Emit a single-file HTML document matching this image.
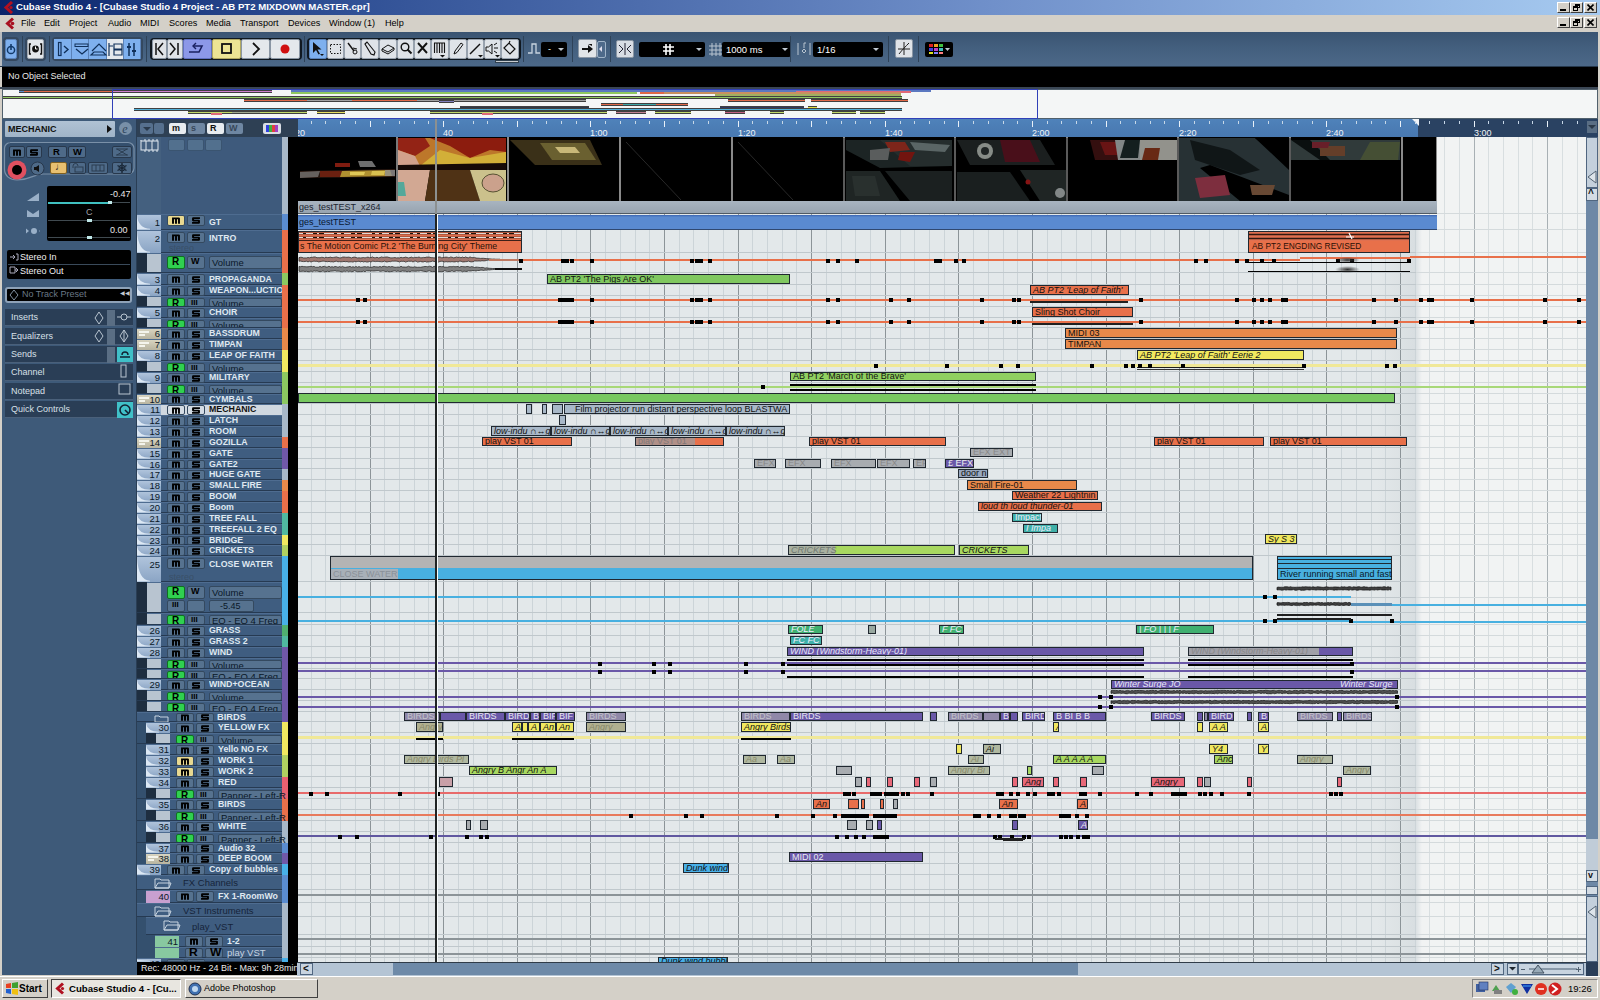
<!DOCTYPE html><html><head><meta charset="utf-8"><style>
html,body{margin:0;padding:0;width:1600px;height:1000px;overflow:hidden;background:#d4d0c8;}
body{position:relative;font-family:"Liberation Sans",sans-serif;}
div{position:absolute;box-sizing:border-box;}
.t{white-space:nowrap;line-height:1;}
svg{position:absolute;}
</style></head><body>
<div style="left:0px;top:0px;width:1600px;height:15px;background:linear-gradient(90deg,#0a246a 0%,#2a4a90 18%,#7090ca 62%,#a6caf0 100%);"></div>
<svg style="left:3px;top:1px" width="12" height="13" viewBox="0 0 12 13"><path d="M9 1 L3 6.5 L9 12" stroke="#b01020" stroke-width="3" fill="none"/><circle cx="8" cy="6.5" r="1.6" fill="#b01020"/></svg>
<div class="t" style="left:16px;top:2px;font-size:9.6px;color:#fff;font-weight:bold;">Cubase Studio 4 - [Cubase Studio 4 Project - AB PT2 MIXDOWN MASTER.cpr]</div>
<div style="left:1557px;top:2px;width:13px;height:11px;background:#d4d0c8;border:1px solid;border-color:#fff #404040 #404040 #fff;"></div>
<div style="left:1560px;top:9px;width:6px;height:2px;background:#000;"></div>
<div style="left:1570px;top:2px;width:13px;height:11px;background:#d4d0c8;border:1px solid;border-color:#fff #404040 #404040 #fff;"></div>
<div style="left:1575px;top:4px;width:5px;height:4px;background:transparent;border:1px solid #000;border-top-width:2px;"></div>
<div style="left:1573px;top:6px;width:5px;height:5px;background:#d4d0c8;border:1px solid #000;border-top-width:2px;"></div>
<div style="left:1584px;top:2px;width:13px;height:11px;background:#d4d0c8;border:1px solid;border-color:#fff #404040 #404040 #fff;"></div>
<svg style="left:1587px;top:4px" width="7" height="7"><path d="M0.5 0.5L6.5 6.5M6.5 0.5L0.5 6.5" stroke="#000" stroke-width="1.6"/></svg>
<div style="left:0px;top:15px;width:1600px;height:17px;background:#d4d0c8;"></div>
<svg style="left:4px;top:17px" width="13" height="13" viewBox="0 0 13 13"><path d="M9 1.5 L3.5 6.5 L9 11.5" stroke="#a81020" stroke-width="3" fill="none"/><circle cx="8.5" cy="6.5" r="1.8" fill="#a81020"/></svg>
<div class="t" style="left:21px;top:19px;font-size:9.1px;color:#000;">File</div>
<div class="t" style="left:44px;top:19px;font-size:9.1px;color:#000;">Edit</div>
<div class="t" style="left:69px;top:19px;font-size:9.1px;color:#000;">Project</div>
<div class="t" style="left:108px;top:19px;font-size:9.1px;color:#000;">Audio</div>
<div class="t" style="left:140px;top:19px;font-size:9.1px;color:#000;">MIDI</div>
<div class="t" style="left:169px;top:19px;font-size:9.1px;color:#000;">Scores</div>
<div class="t" style="left:206px;top:19px;font-size:9.1px;color:#000;">Media</div>
<div class="t" style="left:240px;top:19px;font-size:9.1px;color:#000;">Transport</div>
<div class="t" style="left:288px;top:19px;font-size:9.1px;color:#000;">Devices</div>
<div class="t" style="left:329px;top:19px;font-size:9.1px;color:#000;">Window (1)</div>
<div class="t" style="left:385px;top:19px;font-size:9.1px;color:#000;">Help</div>
<div style="left:1557px;top:17px;width:13px;height:11px;background:#d4d0c8;border:1px solid;border-color:#fff #404040 #404040 #fff;"></div>
<div style="left:1560px;top:24px;width:6px;height:2px;background:#000;"></div>
<div style="left:1570px;top:17px;width:13px;height:11px;background:#d4d0c8;border:1px solid;border-color:#fff #404040 #404040 #fff;"></div>
<div style="left:1575px;top:19px;width:5px;height:4px;background:transparent;border:1px solid #000;border-top-width:2px;"></div>
<div style="left:1573px;top:21px;width:5px;height:5px;background:#d4d0c8;border:1px solid #000;border-top-width:2px;"></div>
<div style="left:1584px;top:17px;width:13px;height:11px;background:#d4d0c8;border:1px solid;border-color:#fff #404040 #404040 #fff;"></div>
<svg style="left:1587px;top:19px" width="7" height="7"><path d="M0.5 0.5L6.5 6.5M6.5 0.5L0.5 6.5" stroke="#000" stroke-width="1.6"/></svg>
<div style="left:0px;top:32px;width:1600px;height:34px;background:linear-gradient(180deg,#3a5472 0%,#44607f 50%,#4c6888 100%);"></div>
<div style="left:0px;top:32px;width:2px;height:34px;background:#b8bcc0;"></div>
<div style="left:1598px;top:15px;width:2px;height:985px;background:#d4d0c8;"></div>
<div style="left:0px;top:66px;width:1598px;height:1px;background:#26384c;"></div>
<div style="left:3px;top:37px;width:16px;height:24px;background:#34485f;border-radius:4px;"></div>
<div style="left:5px;top:39px;width:12px;height:20px;background:#7eb0ee;border:1px solid #5a82b8;border-radius:2px;"></div>
<svg style="left:6px;top:42px" width="10" height="14"><circle cx="5" cy="8" r="3.6" stroke="#123a6a" stroke-width="1.5" fill="none"/><path d="M5 2v6" stroke="#123a6a" stroke-width="1.6"/></svg>
<div style="left:25px;top:37px;width:21px;height:24px;background:#34485f;border-radius:4px;"></div>
<div style="left:27px;top:39px;width:17px;height:20px;background:#e4e8ec;border:1px solid #a0a8b0;border-radius:2px;"></div>
<svg style="left:28px;top:42px" width="15" height="14"><path d="M3 2H1.5V12H3M12 2H13.5V12H12" stroke="#111" stroke-width="1.4" fill="none"/><circle cx="7.5" cy="7" r="3.4" fill="#111"/><path d="M7.5 4.5V7H9.5" stroke="#fff" stroke-width="1" fill="none"/></svg>
<div style="left:52px;top:37px;width:91px;height:24px;background:#34485f;border-radius:4px;"></div>
<div style="left:54px;top:39px;width:18px;height:20px;background:#7eb0ee;border-right:1px solid #5a82b8;"></div>
<div style="left:72px;top:39px;width:17px;height:20px;background:#7eb0ee;border-right:1px solid #5a82b8;"></div>
<div style="left:89px;top:39px;width:18px;height:20px;background:#7eb0ee;border-right:1px solid #5a82b8;"></div>
<div style="left:107px;top:39px;width:17px;height:20px;background:#e4e8ec;border-right:1px solid #5a82b8;"></div>
<div style="left:124px;top:39px;width:17px;height:20px;background:#7eb0ee;border-right:1px solid #5a82b8;"></div>
<svg style="left:56px;top:41px" width="85" height="17"><rect x="2.5" y="1.5" width="2.5" height="13" stroke="#10305a" fill="none" stroke-width="1.2"/><path d="M8 5l4 3.5-4 3.5" stroke="#10305a" fill="none" stroke-width="1.4"/><rect x="19" y="3" width="13" height="2.5" stroke="#10305a" fill="none"/><path d="M20 8l6 5 6-5" stroke="#10305a" fill="none" stroke-width="1.3"/><path d="M36 10l7-7 7 7M35 14h15l-3-3h-9z" stroke="#10305a" fill="none" stroke-width="1.2"/><path d="M53 2v13M53 5h4M58 3h8v5h-8zM58 9h8v5h-8z" stroke="#10305a" fill="none" stroke-width="1.2"/><path d="M73 2v13M78 2v13" stroke="#10305a" stroke-width="1.5"/><path d="M71 6h4M76 10h4" stroke="#10305a" stroke-width="2"/></svg>
<div style="left:150px;top:38px;width:152px;height:22px;background:#101820;border-radius:4px;"></div>
<div style="left:152px;top:39px;width:15px;height:20px;background:#dfe3e8;border:1px solid #8a96a4;border-radius:2px;"></div>
<div style="left:167px;top:39px;width:16px;height:20px;background:#dfe3e8;border:1px solid #8a96a4;border-radius:2px;"></div>
<div style="left:183px;top:39px;width:29px;height:20px;background:#8c98e8;border:1px solid #6070c0;border-radius:2px;"></div>
<div style="left:212px;top:39px;width:29px;height:20px;background:#ece494;border:1px solid #b0a860;border-radius:2px;"></div>
<div style="left:241px;top:39px;width:29px;height:20px;background:#e4e8ec;border:1px solid #8a96a4;border-radius:2px;"></div>
<div style="left:270px;top:39px;width:30px;height:20px;background:#e4e8ec;border:1px solid #8a96a4;border-radius:2px;"></div>
<svg style="left:152px;top:39px" width="150" height="20"><path d="M4 4v12M11 4l-5 6 5 6M18 4l5 6-5 6M26 4v12" stroke="#111" stroke-width="1.5" fill="none"/><path d="M37 13h10l3-6h-9" stroke="#1a2060" stroke-width="1.6" fill="none"/><path d="M44 4l-3 3 3 3" stroke="#1a2060" stroke-width="1.4" fill="none"/><rect x="70" y="5" width="9" height="9" stroke="#111" stroke-width="1.8" fill="none"/><path d="M101 4l6 6-6 6" stroke="#111" stroke-width="1.8" fill="none"/><circle cx="133" cy="10" r="4.5" fill="#d01010"/></svg>
<div style="left:307px;top:38px;width:214px;height:22px;background:#101820;border-radius:4px;"></div>
<div style="left:309px;top:39px;width:18px;height:20px;background:#7eb0ee;border:1px solid #5a82b8;border-radius:2px;"></div>
<svg style="left:309px;top:39px" width="18" height="20"><path d="M4 3v11l3-3 2.5 4.5 1.5-.8-2.5-4.3h4z" fill="#111"/><path d="M11 15h4l-2 2z" fill="#111"/></svg>
<div style="left:327px;top:39px;width:17px;height:20px;background:#dfe3e8;border:1px solid #98a2ae;border-radius:2px;"></div>
<svg style="left:327px;top:39px" width="18" height="20"><rect x="3.5" y="5.5" width="10" height="9" stroke="#111" stroke-dasharray="1.5 1.5" fill="none"/></svg>
<div style="left:344px;top:39px;width:17px;height:20px;background:#dfe3e8;border:1px solid #98a2ae;border-radius:2px;"></div>
<svg style="left:344px;top:39px" width="18" height="20"><path d="M4 4l6 8" stroke="#111" stroke-width="1.4"/><circle cx="11" cy="13" r="2" stroke="#111" fill="none"/><path d="M9 9l4 1" stroke="#111"/></svg>
<div style="left:361px;top:39px;width:18px;height:20px;background:#dfe3e8;border:1px solid #98a2ae;border-radius:2px;"></div>
<svg style="left:361px;top:39px" width="18" height="20"><path d="M4 5l2-2 8 10-1 3-3-1z" stroke="#111" stroke-width="1.1" fill="none"/></svg>
<div style="left:379px;top:39px;width:18px;height:20px;background:#dfe3e8;border:1px solid #98a2ae;border-radius:2px;"></div>
<svg style="left:379px;top:39px" width="18" height="20"><path d="M3 10l6-4 6 3-6 4z M3 10v2l6 3 6-4v-2" stroke="#111" stroke-width="1" fill="none"/></svg>
<div style="left:397px;top:39px;width:17px;height:20px;background:#dfe3e8;border:1px solid #98a2ae;border-radius:2px;"></div>
<svg style="left:397px;top:39px" width="18" height="20"><circle cx="8" cy="8" r="3.8" stroke="#111" stroke-width="1.4" fill="none"/><path d="M10.5 10.5l4 4" stroke="#111" stroke-width="2"/></svg>
<div style="left:414px;top:39px;width:17px;height:20px;background:#dfe3e8;border:1px solid #98a2ae;border-radius:2px;"></div>
<svg style="left:414px;top:39px" width="18" height="20"><path d="M4 4l9 10M13 4l-9 10" stroke="#111" stroke-width="1.9"/></svg>
<div style="left:431px;top:39px;width:18px;height:20px;background:#dfe3e8;border:1px solid #98a2ae;border-radius:2px;"></div>
<svg style="left:431px;top:39px" width="18" height="20"><path d="M3.5 4v10M6 4v10M8.5 4v10M11 4v10M13.5 4v10" stroke="#111" stroke-width="1.1"/><path d="M3 4h11" stroke="#111"/><path d="M9 16h5l-2.5 2.5z" fill="#111"/></svg>
<div style="left:449px;top:39px;width:18px;height:20px;background:#dfe3e8;border:1px solid #98a2ae;border-radius:2px;"></div>
<svg style="left:449px;top:39px" width="18" height="20"><path d="M5 15l1-3 6-8 2 1.5-6 8z" stroke="#111" fill="none"/></svg>
<div style="left:467px;top:39px;width:17px;height:20px;background:#dfe3e8;border:1px solid #98a2ae;border-radius:2px;"></div>
<svg style="left:467px;top:39px" width="18" height="20"><path d="M3 15l10-10" stroke="#111" stroke-width="1.5"/><path d="M11 16h5l-2.5 2.5z" fill="#111"/></svg>
<div style="left:484px;top:39px;width:17px;height:20px;background:#dfe3e8;border:1px solid #98a2ae;border-radius:2px;"></div>
<svg style="left:484px;top:39px" width="18" height="20"><path d="M2 8h2.5l3.5-3v10l-3.5-3H2z M10 6l3-2M10 9h4M10 12l3 2" stroke="#111" fill="none"/><path d="M11 16h5l-2.5 2.5z" fill="#111"/></svg>
<div style="left:501px;top:39px;width:18px;height:20px;background:#dfe3e8;border:1px solid #98a2ae;border-radius:2px;"></div>
<svg style="left:501px;top:39px" width="18" height="20"><path d="M3 9l5-5 6 6-5 5z M8 4l1-2" stroke="#111" fill="none" stroke-width="1.2"/></svg>
<div style="left:495px;top:60px;width:24px;height:3px;background:#c8ccd0;border:1px solid #30404e;"></div>
<svg style="left:527px;top:41px" width="14" height="16"><path d="M1 12h4V3h4v9h4" stroke="#c8d4e0" stroke-width="1.3" fill="none"/></svg>
<div style="left:541px;top:42px;width:26px;height:15px;background:#000;border-radius:2px;"></div>
<div class="t" style="left:548px;top:45px;font-size:9px;color:#fff;">-</div>
<svg style="left:558px;top:48px" width="6" height="4"><path d="M0 0h6l-3 3z" fill="#c0c8d0"/></svg>
<div style="left:578px;top:39px;width:19px;height:19px;background:#e0e4e8;border:1px solid #8a96a4;border-radius:2px;"></div>
<div style="left:597px;top:41px;width:9px;height:17px;background:#4e6a8a;border:1px solid #a0b4c8;border-radius:2px;"></div>
<svg style="left:580px;top:42px" width="26" height="14"><path d="M2 6h6v-3l5 4-5 4v-3h-6z M8 2h4v2" fill="#111"/><path d="M22 4l-3 3 3 3" fill="#dde" /></svg>
<div style="left:616px;top:40px;width:18px;height:18px;background:#d8dde4;border:1px solid #8a96a4;border-radius:2px;"></div>
<svg style="left:618px;top:43px" width="14" height="12"><path d="M1 2l4 4-4 4M13 2l-4 4 4 4M7 0v12" stroke="#223" stroke-width="1" fill="none"/></svg>
<div style="left:639px;top:42px;width:66px;height:15px;background:#000;border-radius:2px;"></div>
<svg style="left:662px;top:43px" width="14" height="13"><path d="M4 1v11M8 1v11M1 4h11M1 8h11" stroke="#fff" stroke-width="1.6"/></svg>
<svg style="left:696px;top:48px" width="6" height="4"><path d="M0 0h6l-3 3z" fill="#c0c8d0"/></svg>
<svg style="left:708px;top:42px" width="14" height="15"><path d="M4 1v13M8 1v13M12 1v13M1 4h13M1 8h13M1 12h13" stroke="#b8c4d0" stroke-width="1"/></svg>
<div style="left:722px;top:42px;width:69px;height:15px;background:#000;border-radius:2px;"></div>
<div class="t" style="left:726px;top:45px;font-size:9.5px;color:#fff;">1000 ms</div>
<svg style="left:782px;top:48px" width="6" height="4"><path d="M0 0h6l-3 3z" fill="#c0c8d0"/></svg>
<svg style="left:797px;top:41px" width="14" height="16"><path d="M1 2v12M13 2v12M7 2v5M7 2h2M5 10l2-2 2 2-2 2z" stroke="#b8c4d0" stroke-width="1" fill="none"/></svg>
<div style="left:813px;top:42px;width:70px;height:15px;background:#000;border-radius:2px;"></div>
<div class="t" style="left:817px;top:45px;font-size:9.5px;color:#fff;">1/16</div>
<svg style="left:873px;top:48px" width="6" height="4"><path d="M0 0h6l-3 3z" fill="#c0c8d0"/></svg>
<div style="left:895px;top:39px;width:18px;height:19px;background:#dfe3e8;border:1px solid #8a96a4;border-radius:2px;"></div>
<svg style="left:896px;top:40px" width="16" height="17"><path d="M2 9h12M8 2v13M3 14C6 10 10 6 13 3" stroke="#222" stroke-width="1" fill="none"/></svg>
<div style="left:925px;top:42px;width:28px;height:15px;background:#000;border-radius:2px;"></div>
<svg style="left:929px;top:44px" width="22" height="11"><rect x="0" y="0" width="4" height="3" fill="#e02020"/><rect x="5" y="0" width="4" height="3" fill="#f0a020"/><rect x="10" y="0" width="4" height="3" fill="#40c040"/><rect x="0" y="4" width="4" height="3" fill="#4040e0"/><rect x="5" y="4" width="4" height="3" fill="#c040c0"/><rect x="10" y="4" width="4" height="3" fill="#40c0c0"/><rect x="0" y="8" width="4" height="2" fill="#e0e020"/><rect x="5" y="8" width="4" height="2" fill="#8080ff"/><rect x="10" y="8" width="4" height="2" fill="#ff8080"/><path d="M16 4h5l-2.5 3z" fill="#c0c8d0"/></svg>
<div style="left:22px;top:36px;width:1px;height:26px;background:#2e4258;"></div>
<div style="left:49px;top:36px;width:1px;height:26px;background:#2e4258;"></div>
<div style="left:146px;top:36px;width:1px;height:26px;background:#2e4258;"></div>
<div style="left:304px;top:36px;width:1px;height:26px;background:#2e4258;"></div>
<div style="left:523px;top:36px;width:1px;height:26px;background:#2e4258;"></div>
<div style="left:572px;top:36px;width:1px;height:26px;background:#2e4258;"></div>
<div style="left:610px;top:36px;width:1px;height:26px;background:#2e4258;"></div>
<div style="left:790px;top:36px;width:1px;height:26px;background:#2e4258;"></div>
<div style="left:888px;top:36px;width:1px;height:26px;background:#2e4258;"></div>
<div style="left:918px;top:36px;width:1px;height:26px;background:#2e4258;"></div>
<div style="left:2px;top:67px;width:1596px;height:20px;background:#000;"></div>
<div class="t" style="left:8px;top:72px;font-size:9px;color:#e8e8e8;">No Object Selected</div>
<div style="left:0px;top:87px;width:1598px;height:2px;background:#3a4654;"></div>
<div style="left:2px;top:89px;width:1596px;height:30px;background:#f4f6f6;border:1px solid #50606c;"></div>
<div style="left:19px;top:90px;width:5px;height:3px;background:#6090d0;border-top:1px solid #404040;border-bottom:1px solid #404040;"></div>
<div style="left:24px;top:90px;width:88px;height:3px;background:#e06848;border-top:1px solid #404040;border-bottom:1px solid #404040;"></div>
<div style="left:112px;top:90px;width:160px;height:3px;background:#d080d0;border-top:1px solid #404040;border-bottom:1px solid #404040;"></div>
<div style="left:291px;top:90px;width:640px;height:2px;background:#5a78c0;"></div>
<div style="left:291px;top:92px;width:346px;height:2px;background:#90c860;"></div>
<div style="left:796px;top:91px;width:115px;height:2px;background:#e06878;"></div>
<div style="left:640px;top:92px;width:24px;height:2px;background:#e06848;"></div>
<div style="left:664px;top:92px;width:237px;height:2px;background:#c89060;"></div>
<div style="left:715px;top:94px;width:186px;height:2px;background:#a0b060;"></div>
<div style="left:3px;top:96px;width:899px;height:3px;background:#90c860;border-top:1px solid #404040;border-bottom:1px solid #404040;"></div>
<div style="left:244px;top:99px;width:63px;height:3px;background:#e06848;border-top:1px solid #404040;border-bottom:1px solid #404040;"></div>
<div style="left:307px;top:99px;width:45px;height:3px;background:#a0a0a0;border-top:1px solid #404040;border-bottom:1px solid #404040;"></div>
<div style="left:352px;top:99px;width:65px;height:3px;background:#e06848;border-top:1px solid #404040;border-bottom:1px solid #404040;"></div>
<div style="left:417px;top:99px;width:169px;height:3px;background:#a0a0a0;border-top:1px solid #404040;border-bottom:1px solid #404040;"></div>
<div style="left:439px;top:100px;width:15px;height:3px;background:#8080c0;border-top:1px solid #404040;border-bottom:1px solid #404040;"></div>
<div style="left:728px;top:99px;width:77px;height:3px;background:#e06848;border-top:1px solid #404040;border-bottom:1px solid #404040;"></div>
<div style="left:811px;top:99px;width:97px;height:3px;background:#e06848;border-top:1px solid #404040;border-bottom:1px solid #404040;"></div>
<div style="left:601px;top:103px;width:22px;height:3px;background:#e06848;border-top:1px solid #404040;border-bottom:1px solid #404040;"></div>
<div style="left:623px;top:103px;width:33px;height:3px;background:#40a8a8;border-top:1px solid #404040;border-bottom:1px solid #404040;"></div>
<div style="left:656px;top:103px;width:32px;height:3px;background:#e06848;border-top:1px solid #404040;border-bottom:1px solid #404040;"></div>
<div style="left:460px;top:106px;width:129px;height:3px;background:#303848;border-top:1px solid #404040;border-bottom:1px solid #404040;"></div>
<div style="left:720px;top:106px;width:84px;height:3px;background:#303860;border-top:1px solid #404040;border-bottom:1px solid #404040;"></div>
<div style="left:808px;top:106px;width:9px;height:3px;background:#e0e040;border-top:1px solid #404040;border-bottom:1px solid #404040;"></div>
<div style="left:134px;top:108px;width:768px;height:3px;background:#50b0d8;border-top:1px solid #404040;border-bottom:1px solid #404040;"></div>
<div style="left:188px;top:111px;width:44px;height:3px;background:#c0d868;border-top:1px solid #404040;border-bottom:1px solid #404040;"></div>
<div style="left:232px;top:111px;width:28px;height:3px;background:#a0a890;border-top:1px solid #404040;border-bottom:1px solid #404040;"></div>
<div style="left:260px;top:111px;width:47px;height:3px;background:#c0d868;border-top:1px solid #404040;border-bottom:1px solid #404040;"></div>
<div style="left:317px;top:111px;width:28px;height:3px;background:#e8e060;border-top:1px solid #404040;border-bottom:1px solid #404040;"></div>
<div style="left:430px;top:111px;width:177px;height:3px;background:#c0d868;border-top:1px solid #404040;border-bottom:1px solid #404040;"></div>
<div style="left:616px;top:111px;width:30px;height:3px;background:#c08090;border-top:1px solid #404040;border-bottom:1px solid #404040;"></div>
<div style="left:655px;top:111px;width:36px;height:3px;background:#c0d868;border-top:1px solid #404040;border-bottom:1px solid #404040;"></div>
<div style="left:725px;top:111px;width:20px;height:3px;background:#c06080;border-top:1px solid #404040;border-bottom:1px solid #404040;"></div>
<div style="left:770px;top:111px;width:14px;height:3px;background:#c0d868;border-top:1px solid #404040;border-bottom:1px solid #404040;"></div>
<div style="left:832px;top:111px;width:24px;height:3px;background:#c0d868;border-top:1px solid #404040;border-bottom:1px solid #404040;"></div>
<div style="left:860px;top:111px;width:25px;height:3px;background:#c0d868;border-top:1px solid #404040;border-bottom:1px solid #404040;"></div>
<div style="left:211px;top:113px;width:11px;height:2px;background:#e06878;"></div>
<div style="left:482px;top:113px;width:11px;height:2px;background:#e06878;"></div>
<div style="left:112px;top:89px;width:926px;height:30px;background:transparent;border:1.5px solid #3040b8;"></div>
<div style="left:2px;top:119px;width:135px;height:843px;background:#3e5a79;"></div>
<div style="left:136px;top:119px;width:1px;height:843px;background:#2a3e55;"></div>
<div style="left:5px;top:121px;width:110px;height:16px;background:linear-gradient(180deg,#b0c2d4,#a0b4c8);border-radius:1px;"></div>
<div class="t" style="left:8px;top:125px;font-size:9px;color:#101010;font-weight:bold;">MECHANIC</div>
<svg style="left:107px;top:125px" width="6" height="8"><path d="M0 0l5 4-5 4z" fill="#111"/></svg>
<svg style="left:118px;top:121px" width="15" height="15"><circle cx="7.5" cy="7.5" r="6.5" fill="#7890a8"/><text x="4.2" y="11.5" font-family="Liberation Serif" font-style="italic" font-size="12" fill="#30465c">e</text></svg>
<svg style="left:3px;top:141px" width="132" height="40"><path d="M7 1.5H125a6 6 0 0 1 6 6V27a6 6 0 0 1-6 6H40C30 33 28 39 14 39 7 39 1.5 35 1.5 28V7.5a6 6 0 0 1 6-6z" fill="#35506e" stroke="#7a90a8" stroke-width="1.2"/></svg>
<div style="left:9px;top:146px;width:16px;height:12px;background:#4e6a88;border:1px solid #28384c;border-radius:2px;"></div>
<svg style="left:13px;top:149px" width="8" height="7" viewBox="0 0 7 6.2"><path d="M0 6V0.4H6Q7 0.4 7 1.4V6H5.3V2H4.35V6H2.65V2H1.7V6z" fill="#000"/></svg>
<div style="left:26px;top:146px;width:16px;height:12px;background:#4e6a88;border:1px solid #28384c;border-radius:2px;"></div>
<svg style="left:30px;top:149px" width="8" height="7" viewBox="0 0 7 6.2"><path d="M1 0.3H7V1.8H1.8V2.4H6Q7 2.4 7 3.4V5Q7 6 6 6H0V4.5H5.3V3.9H1Q0 3.9 0 2.9V1.3Q0 0.3 1 0.3z" fill="#000"/></svg>
<div style="left:48px;top:146px;width:19px;height:12px;background:#4e6a88;border:1px solid #28384c;border-radius:2px;"></div>
<div class="t" style="left:53px;top:147px;font-size:9.5px;color:#000;font-weight:bold;">R</div>
<div style="left:68px;top:146px;width:18px;height:12px;background:#4e6a88;border:1px solid #28384c;border-radius:2px;"></div>
<div class="t" style="left:73px;top:147px;font-size:9.5px;color:#000;font-weight:bold;">W</div>
<div style="left:112px;top:146px;width:20px;height:12px;background:#4e6a88;border:1px solid #28384c;border-radius:2px;"></div>
<svg style="left:6px;top:159px" width="22" height="22"><circle cx="11" cy="11" r="9.5" fill="#e05060"/><circle cx="11" cy="11" r="5" fill="#000"/></svg>
<svg style="left:30px;top:161px" width="15" height="15"><circle cx="7.5" cy="7.5" r="6.5" fill="#4e6a88" stroke="#28384c"/><path d="M4 6h2l3-2v7l-3-2H4z" fill="#111"/></svg>
<div style="left:50px;top:162px;width:17px;height:12px;background:#e8c070;border:1px solid #806020;border-radius:2px;"></div>
<div class="t" style="left:55px;top:162px;font-size:10px;color:#111;">&#9833;</div>
<div style="left:69px;top:162px;width:17px;height:12px;background:#4e6a88;border:1px solid #28384c;border-radius:2px;"></div>
<div style="left:88px;top:162px;width:20px;height:12px;background:#4e6a88;border:1px solid #28384c;border-radius:2px;"></div>
<div style="left:112px;top:162px;width:20px;height:12px;background:#4e6a88;border:1px solid #28384c;border-radius:2px;"></div>
<svg style="left:112px;top:146px" width="20" height="12"><path d="M4 3h12M4 9h12M5 3l10 6M15 3L5 9" stroke="#2a3c50" stroke-width="1"/></svg>
<svg style="left:69px;top:162px" width="17" height="12"><rect x="6" y="5" width="8" height="5" stroke="#2a3c50" fill="none"/><path d="M4 6V4a2.5 2.5 0 0 1 5 0" stroke="#2a3c50" fill="none"/></svg>
<svg style="left:88px;top:162px" width="20" height="12"><rect x="4" y="3" width="12" height="6" stroke="#2a3c50" fill="none"/><path d="M8 3v6M12 3v6" stroke="#2a3c50"/></svg>
<svg style="left:112px;top:162px" width="20" height="12"><path d="M10 1v10M5.5 3.5l9 5M14.5 3.5l-9 5" stroke="#1a2838" stroke-width="1.4"/><circle cx="10" cy="6" r="3" fill="none" stroke="#1a2838"/></svg>
<div style="left:47px;top:186px;width:84px;height:55px;background:#000;border-radius:2px;"></div>
<div class="t" style="left:110px;top:190px;font-size:9px;color:#e8e8e8;">-0.47</div>
<div style="left:48px;top:202px;width:64px;height:2px;background:#40c0c0;"></div>
<div style="left:112px;top:202px;width:18px;height:1px;background:#404a50;"></div>
<div style="left:108px;top:201px;width:4px;height:3px;background:#c0e8e8;"></div>
<div class="t" style="left:86px;top:208px;font-size:9px;color:#a0a0a8;">C</div>
<div style="left:48px;top:220px;width:82px;height:1px;background:#404a50;"></div>
<div style="left:87px;top:219px;width:5px;height:3px;background:#c0e8e8;"></div>
<div class="t" style="left:110px;top:226px;font-size:9px;color:#e8e8e8;">0.00</div>
<div style="left:48px;top:237px;width:82px;height:1px;background:#404a50;"></div>
<div style="left:87px;top:236px;width:5px;height:3px;background:#c0e8e8;"></div>
<svg style="left:26px;top:191px" width="14" height="44"><path d="M1 10L13 2v8z" fill="#9ab0c8"/><path d="M1 19l6 4 6-4v7H1z" fill="#9ab0c8"/><circle cx="8" cy="40" r="3" fill="#9ab0c8"/><path d="M3 40l-3-2.5v5zM13 40l3-2.5v5z" fill="#9ab0c8"/></svg>
<div style="left:7px;top:250px;width:124px;height:29px;background:#000;border-radius:2px;"></div>
<div style="left:8px;top:264px;width:122px;height:1px;background:#3a4a5a;"></div>
<div class="t" style="left:20px;top:253px;font-size:9px;color:#f0f0f0;">Stereo In</div>
<div class="t" style="left:20px;top:267px;font-size:9px;color:#f0f0f0;">Stereo Out</div>
<svg style="left:9px;top:252px" width="10" height="24"><path d="M1 5h5M4 3l2 2-2 2M7 2h2v6H7" stroke="#aab" fill="none"/><path d="M1 15h5v6H1zM6 18l3 0M7 16l2 2-2 2" stroke="#aab" fill="none"/></svg>
<div style="left:5px;top:287px;width:127px;height:16px;background:#000;border:2px solid #8ea2b8;border-radius:3px;"></div>
<div class="t" style="left:22px;top:290px;font-size:9px;color:#6a7886;">No Track Preset</div>
<svg style="left:9px;top:289px" width="10" height="12"><path d="M5 1l4 5-4 5-4-5z" stroke="#8090a0" fill="none"/></svg>
<div class="t" style="left:120px;top:290px;font-size:6px;color:#c0c8d0;">&#9664;&#9664;</div>
<div style="left:5px;top:309px;width:128px;height:17px;background:#2a3e56;border-bottom:1px solid #4a607a;"></div>
<div class="t" style="left:11px;top:313px;font-size:9px;color:#d8e0e8;">Inserts</div>
<div style="left:5px;top:328px;width:128px;height:17px;background:#2a3e56;border-bottom:1px solid #4a607a;"></div>
<div class="t" style="left:11px;top:332px;font-size:9px;color:#d8e0e8;">Equalizers</div>
<div style="left:5px;top:346px;width:128px;height:17px;background:#2a3e56;border-bottom:1px solid #4a607a;"></div>
<div class="t" style="left:11px;top:350px;font-size:9px;color:#d8e0e8;">Sends</div>
<div style="left:5px;top:364px;width:128px;height:17px;background:#2a3e56;border-bottom:1px solid #4a607a;"></div>
<div class="t" style="left:11px;top:368px;font-size:9px;color:#d8e0e8;">Channel</div>
<div style="left:5px;top:383px;width:128px;height:17px;background:#2a3e56;border-bottom:1px solid #4a607a;"></div>
<div class="t" style="left:11px;top:387px;font-size:9px;color:#d8e0e8;">Notepad</div>
<div style="left:5px;top:401px;width:128px;height:17px;background:#2a3e56;border-bottom:1px solid #4a607a;"></div>
<div class="t" style="left:11px;top:405px;font-size:9px;color:#d8e0e8;">Quick Controls</div>
<div style="left:107px;top:310px;width:8px;height:16px;background:#5a6e84;"></div>
<div style="left:107px;top:329px;width:8px;height:16px;background:#5a6e84;"></div>
<div style="left:107px;top:347px;width:8px;height:16px;background:#5a6e84;"></div>
<svg style="left:94px;top:311px" width="40" height="106"><path d="M5 1l4 6-4 6-4-6z" stroke="#b8c4d0" fill="none"/><path d="M5 19l4 6-4 6-4-6z" stroke="#b8c4d0" fill="none"/><path d="M23 6h4M33 6h4M27 6a3 3 0 1 0 6 0a3 3 0 1 0-6 0" stroke="#b8c4d0" fill="none"/><path d="M30 19l4 6-4 6-4-6zM30 19v12" stroke="#b8c4d0" fill="none"/><rect x="27" y="54" width="5" height="12" stroke="#b8c4d0" fill="none"/><rect x="25" y="73" width="11" height="10" stroke="#b8c4d0" fill="none"/></svg>
<div style="left:117px;top:347px;width:16px;height:15px;background:#40c0c8;"></div>
<svg style="left:118px;top:349px" width="14" height="11"><path d="M2 8h10M4 6a3 3 0 0 1 6 0" stroke="#123" fill="none" stroke-width="1.4"/></svg>
<div style="left:117px;top:402px;width:16px;height:16px;background:#40c0c8;"></div>
<svg style="left:118px;top:403px" width="14" height="14"><circle cx="7" cy="7" r="5" stroke="#123" stroke-width="1.6" fill="none"/><path d="M7 7l3 3" stroke="#123" stroke-width="1.6"/></svg>
<div style="left:137px;top:119px;width:161px;height:18px;background:#2e4054;"></div>
<div style="left:140px;top:123px;width:13px;height:11px;background:#56708e;border-radius:2px;"></div>
<svg style="left:143px;top:127px" width="8" height="5"><path d="M0 0h8l-4 4z" fill="#2a3a4c"/></svg>
<div style="left:154px;top:123px;width:10px;height:11px;background:#56708e;border-radius:2px;"></div>
<div style="left:169px;top:123px;width:17px;height:11px;background:#e8ecf0;border-radius:2px;"></div>
<div class="t" style="left:172px;top:124px;font-size:9px;color:#111;font-weight:bold;">m</div>
<div style="left:188px;top:123px;width:17px;height:11px;background:#6f87a2;border-radius:2px;"></div>
<div class="t" style="left:191px;top:124px;font-size:9px;color:#38485a;font-weight:bold;">s</div>
<div style="left:207px;top:123px;width:17px;height:11px;background:#e8ecf0;border-radius:2px;"></div>
<div class="t" style="left:210px;top:124px;font-size:9px;color:#111;font-weight:bold;">R</div>
<div style="left:226px;top:123px;width:17px;height:11px;background:#6f87a2;border-radius:2px;"></div>
<div class="t" style="left:229px;top:124px;font-size:9px;color:#38485a;font-weight:bold;">W</div>
<div style="left:263px;top:123px;width:18px;height:11px;background:#d8dde4;border-radius:2px;"></div>
<div style="left:266px;top:125px;width:3px;height:7px;background:#3040e0;"></div>
<div style="left:269px;top:125px;width:3px;height:7px;background:#40b040;"></div>
<div style="left:272px;top:125px;width:3px;height:7px;background:#e04040;"></div>
<div style="left:275px;top:125px;width:3px;height:7px;background:#a040c0;"></div>
<div style="left:137px;top:137px;width:151px;height:77px;background:#3e5a7c;"></div>
<div style="left:137px;top:137px;width:24px;height:77px;background:#44607f;"></div>
<svg style="left:140px;top:139px" width="20" height="14"><rect x="1" y="2" width="17" height="9" stroke="#e0e8f0" fill="none"/><path d="M1 2v-1M4 1h2M8 1h2M12 1h2M16 1h2M4 12h2M8 12h2M12 12h2M16 12h2M6 2v9M12 2v9" stroke="#e0e8f0"/></svg>
<div style="left:168px;top:139px;width:17px;height:12px;background:#52708e;border:1px solid #3a5470;border-radius:2px;"></div>
<div style="left:187px;top:139px;width:17px;height:12px;background:#52708e;border:1px solid #3a5470;border-radius:2px;"></div>
<div style="left:205px;top:139px;width:17px;height:12px;background:#52708e;border:1px solid #3a5470;border-radius:2px;"></div>
<div style="left:282px;top:137px;width:6px;height:77px;background:#a8b8c8;"></div>
<div style="left:288px;top:119px;width:10px;height:843px;background:transparent;"></div>
<div style="left:137px;top:214px;width:145px;height:16px;background:#3f5d80;border-top:1px solid #4e6c90;border-bottom:1px solid #263a52;"></div>
<div style="left:282px;top:214px;width:6px;height:16px;background:#5a8cd0;"></div>
<div style="left:137px;top:215px;width:24px;height:15px;background:linear-gradient(180deg,#b0c4dc,#8aa4c4);"></div>
<svg style="left:137px;top:215px" width="14" height="15"><path d="M0 0.5Q1.5 13.5 13 13.8L13 14.5L0 14.5z" fill="#e4eef8" opacity="0.9"/></svg>
<div class="t" style="left:160px;top:218px;font-size:9.5px;color:#0a1828;text-align:right;transform:translateX(-100%);">1</div>
<div style="left:167px;top:215px;width:18px;height:11px;background:#e8d890;border:1px solid #34495f;border-radius:2px;"></div>
<svg style="left:172px;top:217px" width="8" height="7" viewBox="0 0 7 6.2"><path d="M0 6V0.4H6Q7 0.4 7 1.4V6H5.3V2H4.35V6H2.65V2H1.7V6z" fill="#000"/></svg>
<div style="left:187px;top:215px;width:18px;height:11px;background:#56728f;border:1px solid #34495f;border-radius:2px;"></div>
<svg style="left:192px;top:217px" width="8" height="7" viewBox="0 0 7 6.2"><path d="M1 0.3H7V1.8H1.8V2.4H6Q7 2.4 7 3.4V5Q7 6 6 6H0V4.5H5.3V3.9H1Q0 3.9 0 2.9V1.3Q0 0.3 1 0.3z" fill="#000"/></svg>
<div class="t" style="left:209px;top:218px;font-size:8.8px;color:#dfe8f0;font-weight:bold;width:73px;overflow:hidden;">GT</div>
<div style="left:137px;top:230px;width:145px;height:23px;background:#3f5d80;border-top:1px solid #4e6c90;border-bottom:1px solid #263a52;"></div>
<div style="left:282px;top:230px;width:6px;height:23px;background:#e8704a;"></div>
<div style="left:137px;top:231px;width:24px;height:22px;background:linear-gradient(180deg,#b0c4dc,#8aa4c4);"></div>
<svg style="left:137px;top:231px" width="14" height="22"><path d="M0 0.5Q1.5 20.5 13 20.8L13 21.5L0 21.5z" fill="#e4eef8" opacity="0.9"/></svg>
<div class="t" style="left:160px;top:234px;font-size:9.5px;color:#0a1828;text-align:right;transform:translateX(-100%);">2</div>
<div style="left:167px;top:232px;width:18px;height:11px;background:#56728f;border:1px solid #34495f;border-radius:2px;"></div>
<svg style="left:172px;top:234px" width="8" height="7" viewBox="0 0 7 6.2"><path d="M0 6V0.4H6Q7 0.4 7 1.4V6H5.3V2H4.35V6H2.65V2H1.7V6z" fill="#000"/></svg>
<div style="left:187px;top:232px;width:18px;height:11px;background:#56728f;border:1px solid #34495f;border-radius:2px;"></div>
<svg style="left:192px;top:234px" width="8" height="7" viewBox="0 0 7 6.2"><path d="M1 0.3H7V1.8H1.8V2.4H6Q7 2.4 7 3.4V5Q7 6 6 6H0V4.5H5.3V3.9H1Q0 3.9 0 2.9V1.3Q0 0.3 1 0.3z" fill="#000"/></svg>
<div class="t" style="left:209px;top:234px;font-size:8.8px;color:#dfe8f0;font-weight:bold;width:73px;overflow:hidden;">INTRO</div>
<div class="t" style="left:169px;top:244px;font-size:9px;color:#3a5068;">stereo</div>
<div style="left:137px;top:253px;width:145px;height:20px;background:#3f5d80;border-top:1px solid #4e6c90;border-bottom:1px solid #263a52;"></div>
<div style="left:282px;top:253px;width:6px;height:20px;background:#e8704a;"></div>
<div style="left:137px;top:253px;width:10px;height:20px;background:#1e2e40;"></div>
<div style="left:147px;top:254px;width:14px;height:19px;background:#b8c4d0;"></div>
<div style="left:167px;top:256px;width:18px;height:13px;background:#30d050;border:1px solid #107020;border-radius:2px;"></div>
<div class="t" style="left:172px;top:257px;font-size:10px;color:#000;font-weight:bold;">R</div>
<div style="left:187px;top:256px;width:18px;height:13px;background:#56728f;border:1px solid #34495f;border-radius:2px;"></div>
<div class="t" style="left:191px;top:257px;font-size:9px;color:#000;font-weight:bold;">W</div>
<div style="left:209px;top:256px;width:73px;height:13px;background:#56728f;border:1px solid #34495f;border-radius:2px;"></div>
<div class="t" style="left:212px;top:258px;font-size:9.5px;color:#0a1828;">Volume</div>
<div style="left:137px;top:272px;width:145px;height:1px;background:#263a52;"></div>
<div style="left:137px;top:273px;width:145px;height:12px;background:#3f5d80;border-top:1px solid #4e6c90;border-bottom:1px solid #263a52;"></div>
<div style="left:282px;top:273px;width:6px;height:12px;background:#8cc860;"></div>
<div style="left:137px;top:274px;width:24px;height:11px;background:linear-gradient(180deg,#b0c4dc,#8aa4c4);"></div>
<svg style="left:137px;top:274px" width="14" height="11"><path d="M0 0.5Q1.5 9.5 13 9.8L13 10.5L0 10.5z" fill="#e4eef8" opacity="0.9"/></svg>
<div class="t" style="left:160px;top:275px;font-size:9.5px;color:#0a1828;text-align:right;transform:translateX(-100%);">3</div>
<div style="left:167px;top:274px;width:18px;height:11px;background:#56728f;border:1px solid #34495f;border-radius:2px;"></div>
<svg style="left:172px;top:276px" width="8" height="7" viewBox="0 0 7 6.2"><path d="M0 6V0.4H6Q7 0.4 7 1.4V6H5.3V2H4.35V6H2.65V2H1.7V6z" fill="#000"/></svg>
<div style="left:187px;top:274px;width:18px;height:11px;background:#56728f;border:1px solid #34495f;border-radius:2px;"></div>
<svg style="left:192px;top:276px" width="8" height="7" viewBox="0 0 7 6.2"><path d="M1 0.3H7V1.8H1.8V2.4H6Q7 2.4 7 3.4V5Q7 6 6 6H0V4.5H5.3V3.9H1Q0 3.9 0 2.9V1.3Q0 0.3 1 0.3z" fill="#000"/></svg>
<div class="t" style="left:209px;top:275px;font-size:8.8px;color:#dfe8f0;font-weight:bold;width:73px;overflow:hidden;">PROPAGANDA</div>
<div style="left:137px;top:285px;width:145px;height:11px;background:#3f5d80;border-top:1px solid #4e6c90;border-bottom:1px solid #263a52;"></div>
<div style="left:282px;top:285px;width:6px;height:11px;background:#e8704a;"></div>
<div style="left:137px;top:286px;width:24px;height:10px;background:linear-gradient(180deg,#b0c4dc,#8aa4c4);"></div>
<svg style="left:137px;top:286px" width="14" height="10"><path d="M0 0.5Q1.5 8.5 13 8.8L13 9.5L0 9.5z" fill="#e4eef8" opacity="0.9"/></svg>
<div class="t" style="left:160px;top:286px;font-size:9.5px;color:#0a1828;text-align:right;transform:translateX(-100%);">4</div>
<div style="left:167px;top:286px;width:18px;height:10px;background:#56728f;border:1px solid #34495f;border-radius:2px;"></div>
<svg style="left:172px;top:288px" width="8" height="7" viewBox="0 0 7 6.2"><path d="M0 6V0.4H6Q7 0.4 7 1.4V6H5.3V2H4.35V6H2.65V2H1.7V6z" fill="#000"/></svg>
<div style="left:187px;top:286px;width:18px;height:10px;background:#56728f;border:1px solid #34495f;border-radius:2px;"></div>
<svg style="left:192px;top:288px" width="8" height="7" viewBox="0 0 7 6.2"><path d="M1 0.3H7V1.8H1.8V2.4H6Q7 2.4 7 3.4V5Q7 6 6 6H0V4.5H5.3V3.9H1Q0 3.9 0 2.9V1.3Q0 0.3 1 0.3z" fill="#000"/></svg>
<div class="t" style="left:209px;top:286px;font-size:8.8px;color:#dfe8f0;font-weight:bold;width:73px;overflow:hidden;">WEAPON...UCTIO</div>
<div style="left:137px;top:296px;width:145px;height:11px;background:#3f5d80;border-top:1px solid #4e6c90;border-bottom:1px solid #263a52;"></div>
<div style="left:282px;top:296px;width:6px;height:11px;background:#e8704a;"></div>
<div style="left:137px;top:296px;width:10px;height:11px;background:#1e2e40;"></div>
<div style="left:147px;top:297px;width:14px;height:10px;background:#b8c4d0;"></div>
<div style="left:167px;top:298px;width:18px;height:9px;background:#30d050;border:1px solid #107020;border-radius:2px;"></div>
<div class="t" style="left:172px;top:299px;font-size:10px;color:#000;font-weight:bold;">R</div>
<div style="left:187px;top:298px;width:18px;height:9px;background:#56728f;border:1px solid #34495f;border-radius:2px;"></div>
<div class="t" style="left:191px;top:299px;font-size:8px;color:#000;font-weight:bold;">III</div>
<div style="left:209px;top:298px;width:73px;height:9px;background:#56728f;border:1px solid #34495f;border-radius:2px;"></div>
<div class="t" style="left:212px;top:299px;font-size:9.5px;color:#0a1828;">Volume</div>
<div style="left:137px;top:306px;width:145px;height:1px;background:#263a52;"></div>
<div style="left:137px;top:307px;width:145px;height:11px;background:#3f5d80;border-top:1px solid #4e6c90;border-bottom:1px solid #263a52;"></div>
<div style="left:282px;top:307px;width:6px;height:11px;background:#e8704a;"></div>
<div style="left:137px;top:308px;width:24px;height:10px;background:linear-gradient(180deg,#b0c4dc,#8aa4c4);"></div>
<svg style="left:137px;top:308px" width="14" height="10"><path d="M0 0.5Q1.5 8.5 13 8.8L13 9.5L0 9.5z" fill="#e4eef8" opacity="0.9"/></svg>
<div class="t" style="left:160px;top:308px;font-size:9.5px;color:#0a1828;text-align:right;transform:translateX(-100%);">5</div>
<div style="left:167px;top:308px;width:18px;height:10px;background:#56728f;border:1px solid #34495f;border-radius:2px;"></div>
<svg style="left:172px;top:310px" width="8" height="7" viewBox="0 0 7 6.2"><path d="M0 6V0.4H6Q7 0.4 7 1.4V6H5.3V2H4.35V6H2.65V2H1.7V6z" fill="#000"/></svg>
<div style="left:187px;top:308px;width:18px;height:10px;background:#56728f;border:1px solid #34495f;border-radius:2px;"></div>
<svg style="left:192px;top:310px" width="8" height="7" viewBox="0 0 7 6.2"><path d="M1 0.3H7V1.8H1.8V2.4H6Q7 2.4 7 3.4V5Q7 6 6 6H0V4.5H5.3V3.9H1Q0 3.9 0 2.9V1.3Q0 0.3 1 0.3z" fill="#000"/></svg>
<div class="t" style="left:209px;top:308px;font-size:8.8px;color:#dfe8f0;font-weight:bold;width:73px;overflow:hidden;">CHOIR</div>
<div style="left:137px;top:318px;width:145px;height:10px;background:#3f5d80;border-top:1px solid #4e6c90;border-bottom:1px solid #263a52;"></div>
<div style="left:282px;top:318px;width:6px;height:10px;background:#e8704a;"></div>
<div style="left:137px;top:318px;width:10px;height:10px;background:#1e2e40;"></div>
<div style="left:147px;top:319px;width:14px;height:9px;background:#b8c4d0;"></div>
<div style="left:167px;top:320px;width:18px;height:8px;background:#30d050;border:1px solid #107020;border-radius:2px;"></div>
<div class="t" style="left:172px;top:321px;font-size:10px;color:#000;font-weight:bold;">R</div>
<div style="left:187px;top:320px;width:18px;height:8px;background:#56728f;border:1px solid #34495f;border-radius:2px;"></div>
<div class="t" style="left:191px;top:321px;font-size:8px;color:#000;font-weight:bold;">III</div>
<div style="left:209px;top:320px;width:73px;height:8px;background:#56728f;border:1px solid #34495f;border-radius:2px;"></div>
<div class="t" style="left:212px;top:321px;font-size:9.5px;color:#0a1828;">Volume</div>
<div style="left:137px;top:327px;width:145px;height:1px;background:#263a52;"></div>
<div style="left:137px;top:328px;width:145px;height:11px;background:#3f5d80;border-top:1px solid #4e6c90;border-bottom:1px solid #263a52;"></div>
<div style="left:282px;top:328px;width:6px;height:11px;background:#e8894a;"></div>
<div style="left:137px;top:329px;width:24px;height:10px;background:linear-gradient(180deg,#d8d4c0,#b8b4a0);"></div>
<div style="left:139px;top:331px;width:10px;height:2px;background:#f4f4ec;"></div>
<div style="left:139px;top:334px;width:6px;height:2px;background:#f4f4ec;"></div>
<div class="t" style="left:160px;top:329px;font-size:9.5px;color:#0a1828;text-align:right;transform:translateX(-100%);">6</div>
<div style="left:167px;top:329px;width:18px;height:10px;background:#56728f;border:1px solid #34495f;border-radius:2px;"></div>
<svg style="left:172px;top:331px" width="8" height="7" viewBox="0 0 7 6.2"><path d="M0 6V0.4H6Q7 0.4 7 1.4V6H5.3V2H4.35V6H2.65V2H1.7V6z" fill="#000"/></svg>
<div style="left:187px;top:329px;width:18px;height:10px;background:#56728f;border:1px solid #34495f;border-radius:2px;"></div>
<svg style="left:192px;top:331px" width="8" height="7" viewBox="0 0 7 6.2"><path d="M1 0.3H7V1.8H1.8V2.4H6Q7 2.4 7 3.4V5Q7 6 6 6H0V4.5H5.3V3.9H1Q0 3.9 0 2.9V1.3Q0 0.3 1 0.3z" fill="#000"/></svg>
<div class="t" style="left:209px;top:329px;font-size:8.8px;color:#dfe8f0;font-weight:bold;width:73px;overflow:hidden;">BASSDRUM</div>
<div style="left:137px;top:339px;width:145px;height:11px;background:#3f5d80;border-top:1px solid #4e6c90;border-bottom:1px solid #263a52;"></div>
<div style="left:282px;top:339px;width:6px;height:11px;background:#e8894a;"></div>
<div style="left:137px;top:340px;width:24px;height:10px;background:linear-gradient(180deg,#d8d4c0,#b8b4a0);"></div>
<div style="left:139px;top:342px;width:10px;height:2px;background:#f4f4ec;"></div>
<div style="left:139px;top:345px;width:6px;height:2px;background:#f4f4ec;"></div>
<div class="t" style="left:160px;top:340px;font-size:9.5px;color:#0a1828;text-align:right;transform:translateX(-100%);">7</div>
<div style="left:167px;top:340px;width:18px;height:10px;background:#56728f;border:1px solid #34495f;border-radius:2px;"></div>
<svg style="left:172px;top:342px" width="8" height="7" viewBox="0 0 7 6.2"><path d="M0 6V0.4H6Q7 0.4 7 1.4V6H5.3V2H4.35V6H2.65V2H1.7V6z" fill="#000"/></svg>
<div style="left:187px;top:340px;width:18px;height:10px;background:#56728f;border:1px solid #34495f;border-radius:2px;"></div>
<svg style="left:192px;top:342px" width="8" height="7" viewBox="0 0 7 6.2"><path d="M1 0.3H7V1.8H1.8V2.4H6Q7 2.4 7 3.4V5Q7 6 6 6H0V4.5H5.3V3.9H1Q0 3.9 0 2.9V1.3Q0 0.3 1 0.3z" fill="#000"/></svg>
<div class="t" style="left:209px;top:340px;font-size:8.8px;color:#dfe8f0;font-weight:bold;width:73px;overflow:hidden;">TIMPAN</div>
<div style="left:137px;top:350px;width:145px;height:11px;background:#3f5d80;border-top:1px solid #4e6c90;border-bottom:1px solid #263a52;"></div>
<div style="left:282px;top:350px;width:6px;height:11px;background:#f0e860;"></div>
<div style="left:137px;top:351px;width:24px;height:10px;background:linear-gradient(180deg,#b0c4dc,#8aa4c4);"></div>
<svg style="left:137px;top:351px" width="14" height="10"><path d="M0 0.5Q1.5 8.5 13 8.8L13 9.5L0 9.5z" fill="#e4eef8" opacity="0.9"/></svg>
<div class="t" style="left:160px;top:351px;font-size:9.5px;color:#0a1828;text-align:right;transform:translateX(-100%);">8</div>
<div style="left:167px;top:351px;width:18px;height:10px;background:#56728f;border:1px solid #34495f;border-radius:2px;"></div>
<svg style="left:172px;top:353px" width="8" height="7" viewBox="0 0 7 6.2"><path d="M0 6V0.4H6Q7 0.4 7 1.4V6H5.3V2H4.35V6H2.65V2H1.7V6z" fill="#000"/></svg>
<div style="left:187px;top:351px;width:18px;height:10px;background:#56728f;border:1px solid #34495f;border-radius:2px;"></div>
<svg style="left:192px;top:353px" width="8" height="7" viewBox="0 0 7 6.2"><path d="M1 0.3H7V1.8H1.8V2.4H6Q7 2.4 7 3.4V5Q7 6 6 6H0V4.5H5.3V3.9H1Q0 3.9 0 2.9V1.3Q0 0.3 1 0.3z" fill="#000"/></svg>
<div class="t" style="left:209px;top:351px;font-size:8.8px;color:#dfe8f0;font-weight:bold;width:73px;overflow:hidden;">LEAP OF FAITH</div>
<div style="left:137px;top:361px;width:145px;height:11px;background:#3f5d80;border-top:1px solid #4e6c90;border-bottom:1px solid #263a52;"></div>
<div style="left:282px;top:361px;width:6px;height:11px;background:#f0e860;"></div>
<div style="left:137px;top:361px;width:10px;height:11px;background:#1e2e40;"></div>
<div style="left:147px;top:362px;width:14px;height:10px;background:#b8c4d0;"></div>
<div style="left:167px;top:363px;width:18px;height:9px;background:#30d050;border:1px solid #107020;border-radius:2px;"></div>
<div class="t" style="left:172px;top:364px;font-size:10px;color:#000;font-weight:bold;">R</div>
<div style="left:187px;top:363px;width:18px;height:9px;background:#56728f;border:1px solid #34495f;border-radius:2px;"></div>
<div class="t" style="left:191px;top:364px;font-size:8px;color:#000;font-weight:bold;">III</div>
<div style="left:209px;top:363px;width:73px;height:9px;background:#56728f;border:1px solid #34495f;border-radius:2px;"></div>
<div class="t" style="left:212px;top:364px;font-size:9.5px;color:#0a1828;">Volume</div>
<div style="left:137px;top:371px;width:145px;height:1px;background:#263a52;"></div>
<div style="left:137px;top:372px;width:145px;height:11px;background:#3f5d80;border-top:1px solid #4e6c90;border-bottom:1px solid #263a52;"></div>
<div style="left:282px;top:372px;width:6px;height:11px;background:#8cc860;"></div>
<div style="left:137px;top:373px;width:24px;height:10px;background:linear-gradient(180deg,#b0c4dc,#8aa4c4);"></div>
<svg style="left:137px;top:373px" width="14" height="10"><path d="M0 0.5Q1.5 8.5 13 8.8L13 9.5L0 9.5z" fill="#e4eef8" opacity="0.9"/></svg>
<div class="t" style="left:160px;top:373px;font-size:9.5px;color:#0a1828;text-align:right;transform:translateX(-100%);">9</div>
<div style="left:167px;top:373px;width:18px;height:10px;background:#56728f;border:1px solid #34495f;border-radius:2px;"></div>
<svg style="left:172px;top:375px" width="8" height="7" viewBox="0 0 7 6.2"><path d="M0 6V0.4H6Q7 0.4 7 1.4V6H5.3V2H4.35V6H2.65V2H1.7V6z" fill="#000"/></svg>
<div style="left:187px;top:373px;width:18px;height:10px;background:#56728f;border:1px solid #34495f;border-radius:2px;"></div>
<svg style="left:192px;top:375px" width="8" height="7" viewBox="0 0 7 6.2"><path d="M1 0.3H7V1.8H1.8V2.4H6Q7 2.4 7 3.4V5Q7 6 6 6H0V4.5H5.3V3.9H1Q0 3.9 0 2.9V1.3Q0 0.3 1 0.3z" fill="#000"/></svg>
<div class="t" style="left:209px;top:373px;font-size:8.8px;color:#dfe8f0;font-weight:bold;width:73px;overflow:hidden;">MILITARY</div>
<div style="left:137px;top:383px;width:145px;height:11px;background:#3f5d80;border-top:1px solid #4e6c90;border-bottom:1px solid #263a52;"></div>
<div style="left:282px;top:383px;width:6px;height:11px;background:#8cc860;"></div>
<div style="left:137px;top:383px;width:10px;height:11px;background:#1e2e40;"></div>
<div style="left:147px;top:384px;width:14px;height:10px;background:#b8c4d0;"></div>
<div style="left:167px;top:385px;width:18px;height:9px;background:#30d050;border:1px solid #107020;border-radius:2px;"></div>
<div class="t" style="left:172px;top:386px;font-size:10px;color:#000;font-weight:bold;">R</div>
<div style="left:187px;top:385px;width:18px;height:9px;background:#56728f;border:1px solid #34495f;border-radius:2px;"></div>
<div class="t" style="left:191px;top:386px;font-size:8px;color:#000;font-weight:bold;">III</div>
<div style="left:209px;top:385px;width:73px;height:9px;background:#56728f;border:1px solid #34495f;border-radius:2px;"></div>
<div class="t" style="left:212px;top:386px;font-size:9.5px;color:#0a1828;">Volume</div>
<div style="left:137px;top:393px;width:145px;height:1px;background:#263a52;"></div>
<div style="left:137px;top:394px;width:145px;height:10px;background:#3f5d80;border-top:1px solid #4e6c90;border-bottom:1px solid #263a52;"></div>
<div style="left:282px;top:394px;width:6px;height:10px;background:#8cc860;"></div>
<div style="left:137px;top:395px;width:24px;height:9px;background:linear-gradient(180deg,#d8d4c0,#b8b4a0);"></div>
<div style="left:139px;top:397px;width:10px;height:2px;background:#f4f4ec;"></div>
<div style="left:139px;top:400px;width:6px;height:2px;background:#f4f4ec;"></div>
<div class="t" style="left:160px;top:395px;font-size:9.5px;color:#0a1828;text-align:right;transform:translateX(-100%);">10</div>
<div style="left:167px;top:395px;width:18px;height:9px;background:#56728f;border:1px solid #34495f;border-radius:2px;"></div>
<svg style="left:172px;top:396px" width="8" height="7" viewBox="0 0 7 6.2"><path d="M0 6V0.4H6Q7 0.4 7 1.4V6H5.3V2H4.35V6H2.65V2H1.7V6z" fill="#000"/></svg>
<div style="left:187px;top:395px;width:18px;height:9px;background:#56728f;border:1px solid #34495f;border-radius:2px;"></div>
<svg style="left:192px;top:396px" width="8" height="7" viewBox="0 0 7 6.2"><path d="M1 0.3H7V1.8H1.8V2.4H6Q7 2.4 7 3.4V5Q7 6 6 6H0V4.5H5.3V3.9H1Q0 3.9 0 2.9V1.3Q0 0.3 1 0.3z" fill="#000"/></svg>
<div class="t" style="left:209px;top:395px;font-size:8.8px;color:#dfe8f0;font-weight:bold;width:73px;overflow:hidden;">CYMBALS</div>
<div style="left:137px;top:404px;width:145px;height:11px;background:#3f5d80;border-top:1px solid #4e6c90;border-bottom:1px solid #263a52;"></div>
<div style="left:282px;top:404px;width:6px;height:11px;background:#a8b8c8;"></div>
<div style="left:137px;top:405px;width:24px;height:10px;background:linear-gradient(180deg,#b0c4dc,#8aa4c4);"></div>
<svg style="left:137px;top:405px" width="14" height="10"><path d="M0 0.5Q1.5 8.5 13 8.8L13 9.5L0 9.5z" fill="#e4eef8" opacity="0.9"/></svg>
<div class="t" style="left:160px;top:405px;font-size:9.5px;color:#0a1828;text-align:right;transform:translateX(-100%);">11</div>
<div style="left:161px;top:405px;width:121px;height:10px;background:#d0d8e0;"></div>
<div style="left:167px;top:405px;width:18px;height:10px;background:#d4dce4;border:1px solid #34495f;border-radius:2px;"></div>
<svg style="left:172px;top:407px" width="8" height="7" viewBox="0 0 7 6.2"><path d="M0 6V0.4H6Q7 0.4 7 1.4V6H5.3V2H4.35V6H2.65V2H1.7V6z" fill="#000"/></svg>
<div style="left:187px;top:405px;width:18px;height:10px;background:#d4dce4;border:1px solid #34495f;border-radius:2px;"></div>
<svg style="left:192px;top:407px" width="8" height="7" viewBox="0 0 7 6.2"><path d="M1 0.3H7V1.8H1.8V2.4H6Q7 2.4 7 3.4V5Q7 6 6 6H0V4.5H5.3V3.9H1Q0 3.9 0 2.9V1.3Q0 0.3 1 0.3z" fill="#000"/></svg>
<div class="t" style="left:209px;top:405px;font-size:8.8px;color:#111;font-weight:bold;width:73px;overflow:hidden;">MECHANIC</div>
<div style="left:137px;top:415px;width:145px;height:11px;background:#3f5d80;border-top:1px solid #4e6c90;border-bottom:1px solid #263a52;"></div>
<div style="left:282px;top:415px;width:6px;height:11px;background:#a8b8c8;"></div>
<div style="left:137px;top:416px;width:24px;height:10px;background:linear-gradient(180deg,#b0c4dc,#8aa4c4);"></div>
<svg style="left:137px;top:416px" width="14" height="10"><path d="M0 0.5Q1.5 8.5 13 8.8L13 9.5L0 9.5z" fill="#e4eef8" opacity="0.9"/></svg>
<div class="t" style="left:160px;top:416px;font-size:9.5px;color:#0a1828;text-align:right;transform:translateX(-100%);">12</div>
<div style="left:167px;top:416px;width:18px;height:10px;background:#56728f;border:1px solid #34495f;border-radius:2px;"></div>
<svg style="left:172px;top:418px" width="8" height="7" viewBox="0 0 7 6.2"><path d="M0 6V0.4H6Q7 0.4 7 1.4V6H5.3V2H4.35V6H2.65V2H1.7V6z" fill="#000"/></svg>
<div style="left:187px;top:416px;width:18px;height:10px;background:#56728f;border:1px solid #34495f;border-radius:2px;"></div>
<svg style="left:192px;top:418px" width="8" height="7" viewBox="0 0 7 6.2"><path d="M1 0.3H7V1.8H1.8V2.4H6Q7 2.4 7 3.4V5Q7 6 6 6H0V4.5H5.3V3.9H1Q0 3.9 0 2.9V1.3Q0 0.3 1 0.3z" fill="#000"/></svg>
<div class="t" style="left:209px;top:416px;font-size:8.8px;color:#dfe8f0;font-weight:bold;width:73px;overflow:hidden;">LATCH</div>
<div style="left:137px;top:426px;width:145px;height:11px;background:#3f5d80;border-top:1px solid #4e6c90;border-bottom:1px solid #263a52;"></div>
<div style="left:282px;top:426px;width:6px;height:11px;background:#a8b8c8;"></div>
<div style="left:137px;top:427px;width:24px;height:10px;background:linear-gradient(180deg,#b0c4dc,#8aa4c4);"></div>
<svg style="left:137px;top:427px" width="14" height="10"><path d="M0 0.5Q1.5 8.5 13 8.8L13 9.5L0 9.5z" fill="#e4eef8" opacity="0.9"/></svg>
<div class="t" style="left:160px;top:427px;font-size:9.5px;color:#0a1828;text-align:right;transform:translateX(-100%);">13</div>
<div style="left:167px;top:427px;width:18px;height:10px;background:#56728f;border:1px solid #34495f;border-radius:2px;"></div>
<svg style="left:172px;top:429px" width="8" height="7" viewBox="0 0 7 6.2"><path d="M0 6V0.4H6Q7 0.4 7 1.4V6H5.3V2H4.35V6H2.65V2H1.7V6z" fill="#000"/></svg>
<div style="left:187px;top:427px;width:18px;height:10px;background:#56728f;border:1px solid #34495f;border-radius:2px;"></div>
<svg style="left:192px;top:429px" width="8" height="7" viewBox="0 0 7 6.2"><path d="M1 0.3H7V1.8H1.8V2.4H6Q7 2.4 7 3.4V5Q7 6 6 6H0V4.5H5.3V3.9H1Q0 3.9 0 2.9V1.3Q0 0.3 1 0.3z" fill="#000"/></svg>
<div class="t" style="left:209px;top:427px;font-size:8.8px;color:#dfe8f0;font-weight:bold;width:73px;overflow:hidden;">ROOM</div>
<div style="left:137px;top:437px;width:145px;height:11px;background:#3f5d80;border-top:1px solid #4e6c90;border-bottom:1px solid #263a52;"></div>
<div style="left:282px;top:437px;width:6px;height:11px;background:#e8704a;"></div>
<div style="left:137px;top:438px;width:24px;height:10px;background:linear-gradient(180deg,#d8d4c0,#b8b4a0);"></div>
<div style="left:139px;top:440px;width:10px;height:2px;background:#f4f4ec;"></div>
<div style="left:139px;top:443px;width:6px;height:2px;background:#f4f4ec;"></div>
<div class="t" style="left:160px;top:438px;font-size:9.5px;color:#0a1828;text-align:right;transform:translateX(-100%);">14</div>
<div style="left:167px;top:438px;width:18px;height:10px;background:#56728f;border:1px solid #34495f;border-radius:2px;"></div>
<svg style="left:172px;top:440px" width="8" height="7" viewBox="0 0 7 6.2"><path d="M0 6V0.4H6Q7 0.4 7 1.4V6H5.3V2H4.35V6H2.65V2H1.7V6z" fill="#000"/></svg>
<div style="left:187px;top:438px;width:18px;height:10px;background:#56728f;border:1px solid #34495f;border-radius:2px;"></div>
<svg style="left:192px;top:440px" width="8" height="7" viewBox="0 0 7 6.2"><path d="M1 0.3H7V1.8H1.8V2.4H6Q7 2.4 7 3.4V5Q7 6 6 6H0V4.5H5.3V3.9H1Q0 3.9 0 2.9V1.3Q0 0.3 1 0.3z" fill="#000"/></svg>
<div class="t" style="left:209px;top:438px;font-size:8.8px;color:#dfe8f0;font-weight:bold;width:73px;overflow:hidden;">GOZILLA</div>
<div style="left:137px;top:448px;width:145px;height:11px;background:#3f5d80;border-top:1px solid #4e6c90;border-bottom:1px solid #263a52;"></div>
<div style="left:282px;top:448px;width:6px;height:11px;background:#7058a8;"></div>
<div style="left:137px;top:449px;width:24px;height:10px;background:linear-gradient(180deg,#b0c4dc,#8aa4c4);"></div>
<svg style="left:137px;top:449px" width="14" height="10"><path d="M0 0.5Q1.5 8.5 13 8.8L13 9.5L0 9.5z" fill="#e4eef8" opacity="0.9"/></svg>
<div class="t" style="left:160px;top:449px;font-size:9.5px;color:#0a1828;text-align:right;transform:translateX(-100%);">15</div>
<div style="left:167px;top:449px;width:18px;height:10px;background:#56728f;border:1px solid #34495f;border-radius:2px;"></div>
<svg style="left:172px;top:451px" width="8" height="7" viewBox="0 0 7 6.2"><path d="M0 6V0.4H6Q7 0.4 7 1.4V6H5.3V2H4.35V6H2.65V2H1.7V6z" fill="#000"/></svg>
<div style="left:187px;top:449px;width:18px;height:10px;background:#56728f;border:1px solid #34495f;border-radius:2px;"></div>
<svg style="left:192px;top:451px" width="8" height="7" viewBox="0 0 7 6.2"><path d="M1 0.3H7V1.8H1.8V2.4H6Q7 2.4 7 3.4V5Q7 6 6 6H0V4.5H5.3V3.9H1Q0 3.9 0 2.9V1.3Q0 0.3 1 0.3z" fill="#000"/></svg>
<div class="t" style="left:209px;top:449px;font-size:8.8px;color:#dfe8f0;font-weight:bold;width:73px;overflow:hidden;">GATE</div>
<div style="left:137px;top:459px;width:145px;height:10px;background:#3f5d80;border-top:1px solid #4e6c90;border-bottom:1px solid #263a52;"></div>
<div style="left:282px;top:459px;width:6px;height:10px;background:#7058a8;"></div>
<div style="left:137px;top:460px;width:24px;height:9px;background:linear-gradient(180deg,#b0c4dc,#8aa4c4);"></div>
<svg style="left:137px;top:460px" width="14" height="9"><path d="M0 0.5Q1.5 7.5 13 7.8L13 8.5L0 8.5z" fill="#e4eef8" opacity="0.9"/></svg>
<div class="t" style="left:160px;top:460px;font-size:9.5px;color:#0a1828;text-align:right;transform:translateX(-100%);">16</div>
<div style="left:167px;top:460px;width:18px;height:9px;background:#56728f;border:1px solid #34495f;border-radius:2px;"></div>
<svg style="left:172px;top:461px" width="8" height="7" viewBox="0 0 7 6.2"><path d="M0 6V0.4H6Q7 0.4 7 1.4V6H5.3V2H4.35V6H2.65V2H1.7V6z" fill="#000"/></svg>
<div style="left:187px;top:460px;width:18px;height:9px;background:#56728f;border:1px solid #34495f;border-radius:2px;"></div>
<svg style="left:192px;top:461px" width="8" height="7" viewBox="0 0 7 6.2"><path d="M1 0.3H7V1.8H1.8V2.4H6Q7 2.4 7 3.4V5Q7 6 6 6H0V4.5H5.3V3.9H1Q0 3.9 0 2.9V1.3Q0 0.3 1 0.3z" fill="#000"/></svg>
<div class="t" style="left:209px;top:460px;font-size:8.8px;color:#dfe8f0;font-weight:bold;width:73px;overflow:hidden;">GATE2</div>
<div style="left:137px;top:469px;width:145px;height:11px;background:#3f5d80;border-top:1px solid #4e6c90;border-bottom:1px solid #263a52;"></div>
<div style="left:282px;top:469px;width:6px;height:11px;background:#a8b8c8;"></div>
<div style="left:137px;top:470px;width:24px;height:10px;background:linear-gradient(180deg,#b0c4dc,#8aa4c4);"></div>
<svg style="left:137px;top:470px" width="14" height="10"><path d="M0 0.5Q1.5 8.5 13 8.8L13 9.5L0 9.5z" fill="#e4eef8" opacity="0.9"/></svg>
<div class="t" style="left:160px;top:470px;font-size:9.5px;color:#0a1828;text-align:right;transform:translateX(-100%);">17</div>
<div style="left:167px;top:470px;width:18px;height:10px;background:#56728f;border:1px solid #34495f;border-radius:2px;"></div>
<svg style="left:172px;top:472px" width="8" height="7" viewBox="0 0 7 6.2"><path d="M0 6V0.4H6Q7 0.4 7 1.4V6H5.3V2H4.35V6H2.65V2H1.7V6z" fill="#000"/></svg>
<div style="left:187px;top:470px;width:18px;height:10px;background:#56728f;border:1px solid #34495f;border-radius:2px;"></div>
<svg style="left:192px;top:472px" width="8" height="7" viewBox="0 0 7 6.2"><path d="M1 0.3H7V1.8H1.8V2.4H6Q7 2.4 7 3.4V5Q7 6 6 6H0V4.5H5.3V3.9H1Q0 3.9 0 2.9V1.3Q0 0.3 1 0.3z" fill="#000"/></svg>
<div class="t" style="left:209px;top:470px;font-size:8.8px;color:#dfe8f0;font-weight:bold;width:73px;overflow:hidden;">HUGE GATE</div>
<div style="left:137px;top:480px;width:145px;height:11px;background:#3f5d80;border-top:1px solid #4e6c90;border-bottom:1px solid #263a52;"></div>
<div style="left:282px;top:480px;width:6px;height:11px;background:#e8894a;"></div>
<div style="left:137px;top:481px;width:24px;height:10px;background:linear-gradient(180deg,#b0c4dc,#8aa4c4);"></div>
<svg style="left:137px;top:481px" width="14" height="10"><path d="M0 0.5Q1.5 8.5 13 8.8L13 9.5L0 9.5z" fill="#e4eef8" opacity="0.9"/></svg>
<div class="t" style="left:160px;top:481px;font-size:9.5px;color:#0a1828;text-align:right;transform:translateX(-100%);">18</div>
<div style="left:167px;top:481px;width:18px;height:10px;background:#56728f;border:1px solid #34495f;border-radius:2px;"></div>
<svg style="left:172px;top:483px" width="8" height="7" viewBox="0 0 7 6.2"><path d="M0 6V0.4H6Q7 0.4 7 1.4V6H5.3V2H4.35V6H2.65V2H1.7V6z" fill="#000"/></svg>
<div style="left:187px;top:481px;width:18px;height:10px;background:#56728f;border:1px solid #34495f;border-radius:2px;"></div>
<svg style="left:192px;top:483px" width="8" height="7" viewBox="0 0 7 6.2"><path d="M1 0.3H7V1.8H1.8V2.4H6Q7 2.4 7 3.4V5Q7 6 6 6H0V4.5H5.3V3.9H1Q0 3.9 0 2.9V1.3Q0 0.3 1 0.3z" fill="#000"/></svg>
<div class="t" style="left:209px;top:481px;font-size:8.8px;color:#dfe8f0;font-weight:bold;width:73px;overflow:hidden;">SMALL FIRE</div>
<div style="left:137px;top:491px;width:145px;height:11px;background:#3f5d80;border-top:1px solid #4e6c90;border-bottom:1px solid #263a52;"></div>
<div style="left:282px;top:491px;width:6px;height:11px;background:#e8704a;"></div>
<div style="left:137px;top:492px;width:24px;height:10px;background:linear-gradient(180deg,#b0c4dc,#8aa4c4);"></div>
<svg style="left:137px;top:492px" width="14" height="10"><path d="M0 0.5Q1.5 8.5 13 8.8L13 9.5L0 9.5z" fill="#e4eef8" opacity="0.9"/></svg>
<div class="t" style="left:160px;top:492px;font-size:9.5px;color:#0a1828;text-align:right;transform:translateX(-100%);">19</div>
<div style="left:167px;top:492px;width:18px;height:10px;background:#56728f;border:1px solid #34495f;border-radius:2px;"></div>
<svg style="left:172px;top:494px" width="8" height="7" viewBox="0 0 7 6.2"><path d="M0 6V0.4H6Q7 0.4 7 1.4V6H5.3V2H4.35V6H2.65V2H1.7V6z" fill="#000"/></svg>
<div style="left:187px;top:492px;width:18px;height:10px;background:#56728f;border:1px solid #34495f;border-radius:2px;"></div>
<svg style="left:192px;top:494px" width="8" height="7" viewBox="0 0 7 6.2"><path d="M1 0.3H7V1.8H1.8V2.4H6Q7 2.4 7 3.4V5Q7 6 6 6H0V4.5H5.3V3.9H1Q0 3.9 0 2.9V1.3Q0 0.3 1 0.3z" fill="#000"/></svg>
<div class="t" style="left:209px;top:492px;font-size:8.8px;color:#dfe8f0;font-weight:bold;width:73px;overflow:hidden;">BOOM</div>
<div style="left:137px;top:502px;width:145px;height:11px;background:#3f5d80;border-top:1px solid #4e6c90;border-bottom:1px solid #263a52;"></div>
<div style="left:282px;top:502px;width:6px;height:11px;background:#e8704a;"></div>
<div style="left:137px;top:503px;width:24px;height:10px;background:linear-gradient(180deg,#b0c4dc,#8aa4c4);"></div>
<svg style="left:137px;top:503px" width="14" height="10"><path d="M0 0.5Q1.5 8.5 13 8.8L13 9.5L0 9.5z" fill="#e4eef8" opacity="0.9"/></svg>
<div class="t" style="left:160px;top:503px;font-size:9.5px;color:#0a1828;text-align:right;transform:translateX(-100%);">20</div>
<div style="left:167px;top:503px;width:18px;height:10px;background:#56728f;border:1px solid #34495f;border-radius:2px;"></div>
<svg style="left:172px;top:505px" width="8" height="7" viewBox="0 0 7 6.2"><path d="M0 6V0.4H6Q7 0.4 7 1.4V6H5.3V2H4.35V6H2.65V2H1.7V6z" fill="#000"/></svg>
<div style="left:187px;top:503px;width:18px;height:10px;background:#56728f;border:1px solid #34495f;border-radius:2px;"></div>
<svg style="left:192px;top:505px" width="8" height="7" viewBox="0 0 7 6.2"><path d="M1 0.3H7V1.8H1.8V2.4H6Q7 2.4 7 3.4V5Q7 6 6 6H0V4.5H5.3V3.9H1Q0 3.9 0 2.9V1.3Q0 0.3 1 0.3z" fill="#000"/></svg>
<div class="t" style="left:209px;top:503px;font-size:8.8px;color:#dfe8f0;font-weight:bold;width:73px;overflow:hidden;">Boom</div>
<div style="left:137px;top:513px;width:145px;height:11px;background:#3f5d80;border-top:1px solid #4e6c90;border-bottom:1px solid #263a52;"></div>
<div style="left:282px;top:513px;width:6px;height:11px;background:#50b8a0;"></div>
<div style="left:137px;top:514px;width:24px;height:10px;background:linear-gradient(180deg,#b0c4dc,#8aa4c4);"></div>
<svg style="left:137px;top:514px" width="14" height="10"><path d="M0 0.5Q1.5 8.5 13 8.8L13 9.5L0 9.5z" fill="#e4eef8" opacity="0.9"/></svg>
<div class="t" style="left:160px;top:514px;font-size:9.5px;color:#0a1828;text-align:right;transform:translateX(-100%);">21</div>
<div style="left:167px;top:514px;width:18px;height:10px;background:#56728f;border:1px solid #34495f;border-radius:2px;"></div>
<svg style="left:172px;top:516px" width="8" height="7" viewBox="0 0 7 6.2"><path d="M0 6V0.4H6Q7 0.4 7 1.4V6H5.3V2H4.35V6H2.65V2H1.7V6z" fill="#000"/></svg>
<div style="left:187px;top:514px;width:18px;height:10px;background:#56728f;border:1px solid #34495f;border-radius:2px;"></div>
<svg style="left:192px;top:516px" width="8" height="7" viewBox="0 0 7 6.2"><path d="M1 0.3H7V1.8H1.8V2.4H6Q7 2.4 7 3.4V5Q7 6 6 6H0V4.5H5.3V3.9H1Q0 3.9 0 2.9V1.3Q0 0.3 1 0.3z" fill="#000"/></svg>
<div class="t" style="left:209px;top:514px;font-size:8.8px;color:#dfe8f0;font-weight:bold;width:73px;overflow:hidden;">TREE FALL</div>
<div style="left:137px;top:524px;width:145px;height:11px;background:#3f5d80;border-top:1px solid #4e6c90;border-bottom:1px solid #263a52;"></div>
<div style="left:282px;top:524px;width:6px;height:11px;background:#50b8a0;"></div>
<div style="left:137px;top:525px;width:24px;height:10px;background:linear-gradient(180deg,#b0c4dc,#8aa4c4);"></div>
<svg style="left:137px;top:525px" width="14" height="10"><path d="M0 0.5Q1.5 8.5 13 8.8L13 9.5L0 9.5z" fill="#e4eef8" opacity="0.9"/></svg>
<div class="t" style="left:160px;top:525px;font-size:9.5px;color:#0a1828;text-align:right;transform:translateX(-100%);">22</div>
<div style="left:167px;top:525px;width:18px;height:10px;background:#56728f;border:1px solid #34495f;border-radius:2px;"></div>
<svg style="left:172px;top:527px" width="8" height="7" viewBox="0 0 7 6.2"><path d="M0 6V0.4H6Q7 0.4 7 1.4V6H5.3V2H4.35V6H2.65V2H1.7V6z" fill="#000"/></svg>
<div style="left:187px;top:525px;width:18px;height:10px;background:#56728f;border:1px solid #34495f;border-radius:2px;"></div>
<svg style="left:192px;top:527px" width="8" height="7" viewBox="0 0 7 6.2"><path d="M1 0.3H7V1.8H1.8V2.4H6Q7 2.4 7 3.4V5Q7 6 6 6H0V4.5H5.3V3.9H1Q0 3.9 0 2.9V1.3Q0 0.3 1 0.3z" fill="#000"/></svg>
<div class="t" style="left:209px;top:525px;font-size:8.8px;color:#dfe8f0;font-weight:bold;width:73px;overflow:hidden;">TREEFALL 2 EQ</div>
<div style="left:137px;top:535px;width:145px;height:10px;background:#3f5d80;border-top:1px solid #4e6c90;border-bottom:1px solid #263a52;"></div>
<div style="left:282px;top:535px;width:6px;height:10px;background:#f0e860;"></div>
<div style="left:137px;top:536px;width:24px;height:9px;background:linear-gradient(180deg,#b0c4dc,#8aa4c4);"></div>
<svg style="left:137px;top:536px" width="14" height="9"><path d="M0 0.5Q1.5 7.5 13 7.8L13 8.5L0 8.5z" fill="#e4eef8" opacity="0.9"/></svg>
<div class="t" style="left:160px;top:536px;font-size:9.5px;color:#0a1828;text-align:right;transform:translateX(-100%);">23</div>
<div style="left:167px;top:536px;width:18px;height:9px;background:#56728f;border:1px solid #34495f;border-radius:2px;"></div>
<svg style="left:172px;top:537px" width="8" height="7" viewBox="0 0 7 6.2"><path d="M0 6V0.4H6Q7 0.4 7 1.4V6H5.3V2H4.35V6H2.65V2H1.7V6z" fill="#000"/></svg>
<div style="left:187px;top:536px;width:18px;height:9px;background:#56728f;border:1px solid #34495f;border-radius:2px;"></div>
<svg style="left:192px;top:537px" width="8" height="7" viewBox="0 0 7 6.2"><path d="M1 0.3H7V1.8H1.8V2.4H6Q7 2.4 7 3.4V5Q7 6 6 6H0V4.5H5.3V3.9H1Q0 3.9 0 2.9V1.3Q0 0.3 1 0.3z" fill="#000"/></svg>
<div class="t" style="left:209px;top:536px;font-size:8.8px;color:#dfe8f0;font-weight:bold;width:73px;overflow:hidden;">BRIDGE</div>
<div style="left:137px;top:545px;width:145px;height:11px;background:#3f5d80;border-top:1px solid #4e6c90;border-bottom:1px solid #263a52;"></div>
<div style="left:282px;top:545px;width:6px;height:11px;background:#b0d060;"></div>
<div style="left:137px;top:546px;width:24px;height:10px;background:linear-gradient(180deg,#b0c4dc,#8aa4c4);"></div>
<svg style="left:137px;top:546px" width="14" height="10"><path d="M0 0.5Q1.5 8.5 13 8.8L13 9.5L0 9.5z" fill="#e4eef8" opacity="0.9"/></svg>
<div class="t" style="left:160px;top:546px;font-size:9.5px;color:#0a1828;text-align:right;transform:translateX(-100%);">24</div>
<div style="left:167px;top:546px;width:18px;height:10px;background:#56728f;border:1px solid #34495f;border-radius:2px;"></div>
<svg style="left:172px;top:548px" width="8" height="7" viewBox="0 0 7 6.2"><path d="M0 6V0.4H6Q7 0.4 7 1.4V6H5.3V2H4.35V6H2.65V2H1.7V6z" fill="#000"/></svg>
<div style="left:187px;top:546px;width:18px;height:10px;background:#56728f;border:1px solid #34495f;border-radius:2px;"></div>
<svg style="left:192px;top:548px" width="8" height="7" viewBox="0 0 7 6.2"><path d="M1 0.3H7V1.8H1.8V2.4H6Q7 2.4 7 3.4V5Q7 6 6 6H0V4.5H5.3V3.9H1Q0 3.9 0 2.9V1.3Q0 0.3 1 0.3z" fill="#000"/></svg>
<div class="t" style="left:209px;top:546px;font-size:8.8px;color:#dfe8f0;font-weight:bold;width:73px;overflow:hidden;">CRICKETS</div>
<div style="left:137px;top:556px;width:145px;height:26px;background:#3f5d80;border-top:1px solid #4e6c90;border-bottom:1px solid #263a52;"></div>
<div style="left:282px;top:556px;width:6px;height:26px;background:#48b0e8;"></div>
<div style="left:137px;top:557px;width:24px;height:25px;background:linear-gradient(180deg,#b0c4dc,#8aa4c4);"></div>
<svg style="left:137px;top:557px" width="14" height="25"><path d="M0 0.5Q1.5 23.5 13 23.8L13 24.5L0 24.5z" fill="#e4eef8" opacity="0.9"/></svg>
<div class="t" style="left:160px;top:560px;font-size:9.5px;color:#0a1828;text-align:right;transform:translateX(-100%);">25</div>
<div style="left:167px;top:558px;width:18px;height:11px;background:#56728f;border:1px solid #34495f;border-radius:2px;"></div>
<svg style="left:172px;top:560px" width="8" height="7" viewBox="0 0 7 6.2"><path d="M0 6V0.4H6Q7 0.4 7 1.4V6H5.3V2H4.35V6H2.65V2H1.7V6z" fill="#000"/></svg>
<div style="left:187px;top:558px;width:18px;height:11px;background:#56728f;border:1px solid #34495f;border-radius:2px;"></div>
<svg style="left:192px;top:560px" width="8" height="7" viewBox="0 0 7 6.2"><path d="M1 0.3H7V1.8H1.8V2.4H6Q7 2.4 7 3.4V5Q7 6 6 6H0V4.5H5.3V3.9H1Q0 3.9 0 2.9V1.3Q0 0.3 1 0.3z" fill="#000"/></svg>
<div class="t" style="left:209px;top:560px;font-size:8.8px;color:#dfe8f0;font-weight:bold;width:73px;overflow:hidden;">CLOSE WATER</div>
<div class="t" style="left:169px;top:573px;font-size:9px;color:#3a5068;">stereo</div>
<div style="left:137px;top:582px;width:145px;height:31px;background:#3f5d80;border-top:1px solid #4e6c90;border-bottom:1px solid #263a52;"></div>
<div style="left:282px;top:582px;width:6px;height:31px;background:#48b0e8;"></div>
<div style="left:137px;top:582px;width:10px;height:31px;background:#1e2e40;"></div>
<div style="left:147px;top:583px;width:14px;height:30px;background:#b8c4d0;"></div>
<div style="left:167px;top:586px;width:18px;height:13px;background:#30d050;border:1px solid #107020;border-radius:2px;"></div>
<div class="t" style="left:172px;top:587px;font-size:10px;color:#000;font-weight:bold;">R</div>
<div style="left:187px;top:586px;width:18px;height:13px;background:#56728f;border:1px solid #34495f;border-radius:2px;"></div>
<div class="t" style="left:191px;top:587px;font-size:9px;color:#000;font-weight:bold;">W</div>
<div style="left:209px;top:586px;width:73px;height:13px;background:#56728f;border:1px solid #34495f;border-radius:2px;"></div>
<div class="t" style="left:212px;top:588px;font-size:9.5px;color:#0a1828;">Volume</div>
<div style="left:167px;top:600px;width:18px;height:12px;background:#56728f;border:1px solid #34495f;border-radius:2px;"></div>
<div class="t" style="left:172px;top:601px;font-size:8px;color:#000;font-weight:bold;">III</div>
<div style="left:187px;top:600px;width:18px;height:12px;background:#56728f;border:1px solid #34495f;border-radius:2px;"></div>
<div style="left:209px;top:600px;width:45px;height:12px;background:#56728f;border:1px solid #34495f;border-radius:2px;"></div>
<div class="t" style="left:220px;top:602px;font-size:9px;color:#0a1828;">-5.45</div>
<div style="left:137px;top:612px;width:145px;height:1px;background:#263a52;"></div>
<div style="left:137px;top:613px;width:145px;height:12px;background:#3f5d80;border-top:1px solid #4e6c90;border-bottom:1px solid #263a52;"></div>
<div style="left:282px;top:613px;width:6px;height:12px;background:#48b0e8;"></div>
<div style="left:137px;top:613px;width:10px;height:12px;background:#1e2e40;"></div>
<div style="left:147px;top:614px;width:14px;height:11px;background:#b8c4d0;"></div>
<div style="left:167px;top:615px;width:18px;height:10px;background:#30d050;border:1px solid #107020;border-radius:2px;"></div>
<div class="t" style="left:172px;top:616px;font-size:10px;color:#000;font-weight:bold;">R</div>
<div style="left:187px;top:615px;width:18px;height:10px;background:#56728f;border:1px solid #34495f;border-radius:2px;"></div>
<div class="t" style="left:191px;top:616px;font-size:8px;color:#000;font-weight:bold;">III</div>
<div style="left:209px;top:615px;width:73px;height:10px;background:#56728f;border:1px solid #34495f;border-radius:2px;"></div>
<div class="t" style="left:212px;top:616px;font-size:9.5px;color:#0a1828;">EQ - EQ 4 Freq</div>
<div style="left:137px;top:624px;width:145px;height:1px;background:#263a52;"></div>
<div style="left:137px;top:625px;width:145px;height:11px;background:#3f5d80;border-top:1px solid #4e6c90;border-bottom:1px solid #263a52;"></div>
<div style="left:282px;top:625px;width:6px;height:11px;background:#50b070;"></div>
<div style="left:137px;top:626px;width:24px;height:10px;background:linear-gradient(180deg,#b0c4dc,#8aa4c4);"></div>
<svg style="left:137px;top:626px" width="14" height="10"><path d="M0 0.5Q1.5 8.5 13 8.8L13 9.5L0 9.5z" fill="#e4eef8" opacity="0.9"/></svg>
<div class="t" style="left:160px;top:626px;font-size:9.5px;color:#0a1828;text-align:right;transform:translateX(-100%);">26</div>
<div style="left:167px;top:626px;width:18px;height:10px;background:#56728f;border:1px solid #34495f;border-radius:2px;"></div>
<svg style="left:172px;top:628px" width="8" height="7" viewBox="0 0 7 6.2"><path d="M0 6V0.4H6Q7 0.4 7 1.4V6H5.3V2H4.35V6H2.65V2H1.7V6z" fill="#000"/></svg>
<div style="left:187px;top:626px;width:18px;height:10px;background:#56728f;border:1px solid #34495f;border-radius:2px;"></div>
<svg style="left:192px;top:628px" width="8" height="7" viewBox="0 0 7 6.2"><path d="M1 0.3H7V1.8H1.8V2.4H6Q7 2.4 7 3.4V5Q7 6 6 6H0V4.5H5.3V3.9H1Q0 3.9 0 2.9V1.3Q0 0.3 1 0.3z" fill="#000"/></svg>
<div class="t" style="left:209px;top:626px;font-size:8.8px;color:#dfe8f0;font-weight:bold;width:73px;overflow:hidden;">GRASS</div>
<div style="left:137px;top:636px;width:145px;height:11px;background:#3f5d80;border-top:1px solid #4e6c90;border-bottom:1px solid #263a52;"></div>
<div style="left:282px;top:636px;width:6px;height:11px;background:#50b8a0;"></div>
<div style="left:137px;top:637px;width:24px;height:10px;background:linear-gradient(180deg,#b0c4dc,#8aa4c4);"></div>
<svg style="left:137px;top:637px" width="14" height="10"><path d="M0 0.5Q1.5 8.5 13 8.8L13 9.5L0 9.5z" fill="#e4eef8" opacity="0.9"/></svg>
<div class="t" style="left:160px;top:637px;font-size:9.5px;color:#0a1828;text-align:right;transform:translateX(-100%);">27</div>
<div style="left:167px;top:637px;width:18px;height:10px;background:#56728f;border:1px solid #34495f;border-radius:2px;"></div>
<svg style="left:172px;top:639px" width="8" height="7" viewBox="0 0 7 6.2"><path d="M0 6V0.4H6Q7 0.4 7 1.4V6H5.3V2H4.35V6H2.65V2H1.7V6z" fill="#000"/></svg>
<div style="left:187px;top:637px;width:18px;height:10px;background:#56728f;border:1px solid #34495f;border-radius:2px;"></div>
<svg style="left:192px;top:639px" width="8" height="7" viewBox="0 0 7 6.2"><path d="M1 0.3H7V1.8H1.8V2.4H6Q7 2.4 7 3.4V5Q7 6 6 6H0V4.5H5.3V3.9H1Q0 3.9 0 2.9V1.3Q0 0.3 1 0.3z" fill="#000"/></svg>
<div class="t" style="left:209px;top:637px;font-size:8.8px;color:#dfe8f0;font-weight:bold;width:73px;overflow:hidden;">GRASS 2</div>
<div style="left:137px;top:647px;width:145px;height:11px;background:#3f5d80;border-top:1px solid #4e6c90;border-bottom:1px solid #263a52;"></div>
<div style="left:282px;top:647px;width:6px;height:11px;background:#7058a8;"></div>
<div style="left:137px;top:648px;width:24px;height:10px;background:linear-gradient(180deg,#b0c4dc,#8aa4c4);"></div>
<svg style="left:137px;top:648px" width="14" height="10"><path d="M0 0.5Q1.5 8.5 13 8.8L13 9.5L0 9.5z" fill="#e4eef8" opacity="0.9"/></svg>
<div class="t" style="left:160px;top:648px;font-size:9.5px;color:#0a1828;text-align:right;transform:translateX(-100%);">28</div>
<div style="left:167px;top:648px;width:18px;height:10px;background:#56728f;border:1px solid #34495f;border-radius:2px;"></div>
<svg style="left:172px;top:650px" width="8" height="7" viewBox="0 0 7 6.2"><path d="M0 6V0.4H6Q7 0.4 7 1.4V6H5.3V2H4.35V6H2.65V2H1.7V6z" fill="#000"/></svg>
<div style="left:187px;top:648px;width:18px;height:10px;background:#56728f;border:1px solid #34495f;border-radius:2px;"></div>
<svg style="left:192px;top:650px" width="8" height="7" viewBox="0 0 7 6.2"><path d="M1 0.3H7V1.8H1.8V2.4H6Q7 2.4 7 3.4V5Q7 6 6 6H0V4.5H5.3V3.9H1Q0 3.9 0 2.9V1.3Q0 0.3 1 0.3z" fill="#000"/></svg>
<div class="t" style="left:209px;top:648px;font-size:8.8px;color:#dfe8f0;font-weight:bold;width:73px;overflow:hidden;">WIND</div>
<div style="left:137px;top:658px;width:145px;height:11px;background:#3f5d80;border-top:1px solid #4e6c90;border-bottom:1px solid #263a52;"></div>
<div style="left:282px;top:658px;width:6px;height:11px;background:#7058a8;"></div>
<div style="left:137px;top:658px;width:10px;height:11px;background:#1e2e40;"></div>
<div style="left:147px;top:659px;width:14px;height:10px;background:#b8c4d0;"></div>
<div style="left:167px;top:660px;width:18px;height:9px;background:#30d050;border:1px solid #107020;border-radius:2px;"></div>
<div class="t" style="left:172px;top:661px;font-size:10px;color:#000;font-weight:bold;">R</div>
<div style="left:187px;top:660px;width:18px;height:9px;background:#56728f;border:1px solid #34495f;border-radius:2px;"></div>
<div class="t" style="left:191px;top:661px;font-size:8px;color:#000;font-weight:bold;">III</div>
<div style="left:209px;top:660px;width:73px;height:9px;background:#56728f;border:1px solid #34495f;border-radius:2px;"></div>
<div class="t" style="left:212px;top:661px;font-size:9.5px;color:#0a1828;">Volume</div>
<div style="left:137px;top:668px;width:145px;height:1px;background:#263a52;"></div>
<div style="left:137px;top:669px;width:145px;height:10px;background:#3f5d80;border-top:1px solid #4e6c90;border-bottom:1px solid #263a52;"></div>
<div style="left:282px;top:669px;width:6px;height:10px;background:#7058a8;"></div>
<div style="left:137px;top:669px;width:10px;height:10px;background:#1e2e40;"></div>
<div style="left:147px;top:670px;width:14px;height:9px;background:#b8c4d0;"></div>
<div style="left:167px;top:671px;width:18px;height:8px;background:#30d050;border:1px solid #107020;border-radius:2px;"></div>
<div class="t" style="left:172px;top:672px;font-size:10px;color:#000;font-weight:bold;">R</div>
<div style="left:187px;top:671px;width:18px;height:8px;background:#56728f;border:1px solid #34495f;border-radius:2px;"></div>
<div class="t" style="left:191px;top:672px;font-size:8px;color:#000;font-weight:bold;">III</div>
<div style="left:209px;top:671px;width:73px;height:8px;background:#56728f;border:1px solid #34495f;border-radius:2px;"></div>
<div class="t" style="left:212px;top:672px;font-size:9.5px;color:#0a1828;">EQ - EQ 4 Freq</div>
<div style="left:137px;top:678px;width:145px;height:1px;background:#263a52;"></div>
<div style="left:137px;top:679px;width:145px;height:11px;background:#3f5d80;border-top:1px solid #4e6c90;border-bottom:1px solid #263a52;"></div>
<div style="left:282px;top:679px;width:6px;height:11px;background:#7058a8;"></div>
<div style="left:137px;top:680px;width:24px;height:10px;background:linear-gradient(180deg,#b0c4dc,#8aa4c4);"></div>
<svg style="left:137px;top:680px" width="14" height="10"><path d="M0 0.5Q1.5 8.5 13 8.8L13 9.5L0 9.5z" fill="#e4eef8" opacity="0.9"/></svg>
<div class="t" style="left:160px;top:680px;font-size:9.5px;color:#0a1828;text-align:right;transform:translateX(-100%);">29</div>
<div style="left:167px;top:680px;width:18px;height:10px;background:#56728f;border:1px solid #34495f;border-radius:2px;"></div>
<svg style="left:172px;top:682px" width="8" height="7" viewBox="0 0 7 6.2"><path d="M0 6V0.4H6Q7 0.4 7 1.4V6H5.3V2H4.35V6H2.65V2H1.7V6z" fill="#000"/></svg>
<div style="left:187px;top:680px;width:18px;height:10px;background:#56728f;border:1px solid #34495f;border-radius:2px;"></div>
<svg style="left:192px;top:682px" width="8" height="7" viewBox="0 0 7 6.2"><path d="M1 0.3H7V1.8H1.8V2.4H6Q7 2.4 7 3.4V5Q7 6 6 6H0V4.5H5.3V3.9H1Q0 3.9 0 2.9V1.3Q0 0.3 1 0.3z" fill="#000"/></svg>
<div class="t" style="left:209px;top:680px;font-size:8.8px;color:#dfe8f0;font-weight:bold;width:73px;overflow:hidden;">WIND+OCEAN</div>
<div style="left:137px;top:690px;width:145px;height:11px;background:#3f5d80;border-top:1px solid #4e6c90;border-bottom:1px solid #263a52;"></div>
<div style="left:282px;top:690px;width:6px;height:11px;background:#7058a8;"></div>
<div style="left:137px;top:690px;width:10px;height:11px;background:#1e2e40;"></div>
<div style="left:147px;top:691px;width:14px;height:10px;background:#b8c4d0;"></div>
<div style="left:167px;top:692px;width:18px;height:9px;background:#30d050;border:1px solid #107020;border-radius:2px;"></div>
<div class="t" style="left:172px;top:693px;font-size:10px;color:#000;font-weight:bold;">R</div>
<div style="left:187px;top:692px;width:18px;height:9px;background:#56728f;border:1px solid #34495f;border-radius:2px;"></div>
<div class="t" style="left:191px;top:693px;font-size:8px;color:#000;font-weight:bold;">III</div>
<div style="left:209px;top:692px;width:73px;height:9px;background:#56728f;border:1px solid #34495f;border-radius:2px;"></div>
<div class="t" style="left:212px;top:693px;font-size:9.5px;color:#0a1828;">Volume</div>
<div style="left:137px;top:700px;width:145px;height:1px;background:#263a52;"></div>
<div style="left:137px;top:701px;width:145px;height:11px;background:#3f5d80;border-top:1px solid #4e6c90;border-bottom:1px solid #263a52;"></div>
<div style="left:282px;top:701px;width:6px;height:11px;background:#7058a8;"></div>
<div style="left:137px;top:701px;width:10px;height:11px;background:#1e2e40;"></div>
<div style="left:147px;top:702px;width:14px;height:10px;background:#b8c4d0;"></div>
<div style="left:167px;top:703px;width:18px;height:9px;background:#30d050;border:1px solid #107020;border-radius:2px;"></div>
<div class="t" style="left:172px;top:704px;font-size:10px;color:#000;font-weight:bold;">R</div>
<div style="left:187px;top:703px;width:18px;height:9px;background:#56728f;border:1px solid #34495f;border-radius:2px;"></div>
<div class="t" style="left:191px;top:704px;font-size:8px;color:#000;font-weight:bold;">III</div>
<div style="left:209px;top:703px;width:73px;height:9px;background:#56728f;border:1px solid #34495f;border-radius:2px;"></div>
<div class="t" style="left:212px;top:704px;font-size:9.5px;color:#0a1828;">EQ - EQ 4 Freq</div>
<div style="left:137px;top:711px;width:145px;height:1px;background:#263a52;"></div>
<div style="left:137px;top:712px;width:145px;height:10px;background:#3f5d80;border-top:1px solid #4e6c90;border-bottom:1px solid #263a52;"></div>
<div style="left:282px;top:712px;width:6px;height:10px;background:#7058a8;"></div>
<svg style="left:154px;top:713px" width="16" height="10"><path d="M1 9V3h4l1 1h8v5z" stroke="#c8d4e0" fill="none"/></svg>
<div style="left:176px;top:713px;width:18px;height:9px;background:#56728f;border:1px solid #34495f;border-radius:2px;"></div>
<svg style="left:181px;top:714px" width="8" height="7" viewBox="0 0 7 6.2"><path d="M0 6V0.4H6Q7 0.4 7 1.4V6H5.3V2H4.35V6H2.65V2H1.7V6z" fill="#000"/></svg>
<div style="left:196px;top:713px;width:18px;height:9px;background:#56728f;border:1px solid #34495f;border-radius:2px;"></div>
<svg style="left:201px;top:714px" width="8" height="7" viewBox="0 0 7 6.2"><path d="M1 0.3H7V1.8H1.8V2.4H6Q7 2.4 7 3.4V5Q7 6 6 6H0V4.5H5.3V3.9H1Q0 3.9 0 2.9V1.3Q0 0.3 1 0.3z" fill="#000"/></svg>
<div class="t" style="left:217px;top:713px;font-size:9.3px;color:#dfe8f0;font-weight:bold;">BIRDS</div>
<div style="left:137px;top:722px;width:145px;height:11px;background:#3f5d80;border-top:1px solid #4e6c90;border-bottom:1px solid #263a52;"></div>
<div style="left:282px;top:722px;width:6px;height:11px;background:#f0e860;"></div>
<div style="left:137px;top:722px;width:9px;height:11px;background:#34506e;"></div>
<div style="left:146px;top:723px;width:24px;height:10px;background:linear-gradient(180deg,#b0c4dc,#8aa4c4);"></div>
<svg style="left:146px;top:723px" width="14" height="10"><path d="M0 0.5Q1.5 8.5 13 8.8L13 9.5L0 9.5z" fill="#e4eef8" opacity="0.9"/></svg>
<div class="t" style="left:169px;top:723px;font-size:9.5px;color:#0a1828;text-align:right;transform:translateX(-100%);">30</div>
<div style="left:176px;top:723px;width:18px;height:10px;background:#56728f;border:1px solid #34495f;border-radius:2px;"></div>
<svg style="left:181px;top:725px" width="8" height="7" viewBox="0 0 7 6.2"><path d="M0 6V0.4H6Q7 0.4 7 1.4V6H5.3V2H4.35V6H2.65V2H1.7V6z" fill="#000"/></svg>
<div style="left:196px;top:723px;width:18px;height:10px;background:#56728f;border:1px solid #34495f;border-radius:2px;"></div>
<svg style="left:201px;top:725px" width="8" height="7" viewBox="0 0 7 6.2"><path d="M1 0.3H7V1.8H1.8V2.4H6Q7 2.4 7 3.4V5Q7 6 6 6H0V4.5H5.3V3.9H1Q0 3.9 0 2.9V1.3Q0 0.3 1 0.3z" fill="#000"/></svg>
<div class="t" style="left:218px;top:723px;font-size:8.8px;color:#dfe8f0;font-weight:bold;width:64px;overflow:hidden;">YELLOW FX</div>
<div style="left:137px;top:733px;width:145px;height:11px;background:#3f5d80;border-top:1px solid #4e6c90;border-bottom:1px solid #263a52;"></div>
<div style="left:282px;top:733px;width:6px;height:11px;background:#f0e860;"></div>
<div style="left:137px;top:733px;width:9px;height:11px;background:#34506e;"></div>
<div style="left:146px;top:733px;width:10px;height:11px;background:#1e2e40;"></div>
<div style="left:156px;top:734px;width:14px;height:10px;background:#b8c4d0;"></div>
<div style="left:176px;top:735px;width:18px;height:9px;background:#30d050;border:1px solid #107020;border-radius:2px;"></div>
<div class="t" style="left:181px;top:736px;font-size:10px;color:#000;font-weight:bold;">R</div>
<div style="left:196px;top:735px;width:18px;height:9px;background:#56728f;border:1px solid #34495f;border-radius:2px;"></div>
<div class="t" style="left:200px;top:736px;font-size:8px;color:#000;font-weight:bold;">III</div>
<div style="left:218px;top:735px;width:64px;height:9px;background:#56728f;border:1px solid #34495f;border-radius:2px;"></div>
<div class="t" style="left:221px;top:736px;font-size:9.5px;color:#0a1828;">Volume</div>
<div style="left:137px;top:743px;width:145px;height:1px;background:#263a52;"></div>
<div style="left:137px;top:744px;width:145px;height:11px;background:#3f5d80;border-top:1px solid #4e6c90;border-bottom:1px solid #263a52;"></div>
<div style="left:282px;top:744px;width:6px;height:11px;background:#f0e860;"></div>
<div style="left:137px;top:744px;width:9px;height:11px;background:#34506e;"></div>
<div style="left:146px;top:745px;width:24px;height:10px;background:linear-gradient(180deg,#b0c4dc,#8aa4c4);"></div>
<svg style="left:146px;top:745px" width="14" height="10"><path d="M0 0.5Q1.5 8.5 13 8.8L13 9.5L0 9.5z" fill="#e4eef8" opacity="0.9"/></svg>
<div class="t" style="left:169px;top:745px;font-size:9.5px;color:#0a1828;text-align:right;transform:translateX(-100%);">31</div>
<div style="left:176px;top:745px;width:18px;height:10px;background:#56728f;border:1px solid #34495f;border-radius:2px;"></div>
<svg style="left:181px;top:747px" width="8" height="7" viewBox="0 0 7 6.2"><path d="M0 6V0.4H6Q7 0.4 7 1.4V6H5.3V2H4.35V6H2.65V2H1.7V6z" fill="#000"/></svg>
<div style="left:196px;top:745px;width:18px;height:10px;background:#56728f;border:1px solid #34495f;border-radius:2px;"></div>
<svg style="left:201px;top:747px" width="8" height="7" viewBox="0 0 7 6.2"><path d="M1 0.3H7V1.8H1.8V2.4H6Q7 2.4 7 3.4V5Q7 6 6 6H0V4.5H5.3V3.9H1Q0 3.9 0 2.9V1.3Q0 0.3 1 0.3z" fill="#000"/></svg>
<div class="t" style="left:218px;top:745px;font-size:8.8px;color:#dfe8f0;font-weight:bold;width:64px;overflow:hidden;">Yello NO FX</div>
<div style="left:137px;top:755px;width:145px;height:11px;background:#3f5d80;border-top:1px solid #4e6c90;border-bottom:1px solid #263a52;"></div>
<div style="left:282px;top:755px;width:6px;height:11px;background:#b0d060;"></div>
<div style="left:137px;top:755px;width:9px;height:11px;background:#34506e;"></div>
<div style="left:146px;top:756px;width:24px;height:10px;background:linear-gradient(180deg,#b0c4dc,#8aa4c4);"></div>
<svg style="left:146px;top:756px" width="14" height="10"><path d="M0 0.5Q1.5 8.5 13 8.8L13 9.5L0 9.5z" fill="#e4eef8" opacity="0.9"/></svg>
<div class="t" style="left:169px;top:756px;font-size:9.5px;color:#0a1828;text-align:right;transform:translateX(-100%);">32</div>
<div style="left:176px;top:756px;width:18px;height:10px;background:#e8d890;border:1px solid #34495f;border-radius:2px;"></div>
<svg style="left:181px;top:758px" width="8" height="7" viewBox="0 0 7 6.2"><path d="M0 6V0.4H6Q7 0.4 7 1.4V6H5.3V2H4.35V6H2.65V2H1.7V6z" fill="#000"/></svg>
<div style="left:196px;top:756px;width:18px;height:10px;background:#56728f;border:1px solid #34495f;border-radius:2px;"></div>
<svg style="left:201px;top:758px" width="8" height="7" viewBox="0 0 7 6.2"><path d="M1 0.3H7V1.8H1.8V2.4H6Q7 2.4 7 3.4V5Q7 6 6 6H0V4.5H5.3V3.9H1Q0 3.9 0 2.9V1.3Q0 0.3 1 0.3z" fill="#000"/></svg>
<div class="t" style="left:218px;top:756px;font-size:8.8px;color:#dfe8f0;font-weight:bold;width:64px;overflow:hidden;">WORK 1</div>
<div style="left:137px;top:766px;width:145px;height:11px;background:#3f5d80;border-top:1px solid #4e6c90;border-bottom:1px solid #263a52;"></div>
<div style="left:282px;top:766px;width:6px;height:11px;background:#b0d060;"></div>
<div style="left:137px;top:766px;width:9px;height:11px;background:#34506e;"></div>
<div style="left:146px;top:767px;width:24px;height:10px;background:linear-gradient(180deg,#b0c4dc,#8aa4c4);"></div>
<svg style="left:146px;top:767px" width="14" height="10"><path d="M0 0.5Q1.5 8.5 13 8.8L13 9.5L0 9.5z" fill="#e4eef8" opacity="0.9"/></svg>
<div class="t" style="left:169px;top:767px;font-size:9.5px;color:#0a1828;text-align:right;transform:translateX(-100%);">33</div>
<div style="left:176px;top:767px;width:18px;height:10px;background:#e8d890;border:1px solid #34495f;border-radius:2px;"></div>
<svg style="left:181px;top:769px" width="8" height="7" viewBox="0 0 7 6.2"><path d="M0 6V0.4H6Q7 0.4 7 1.4V6H5.3V2H4.35V6H2.65V2H1.7V6z" fill="#000"/></svg>
<div style="left:196px;top:767px;width:18px;height:10px;background:#56728f;border:1px solid #34495f;border-radius:2px;"></div>
<svg style="left:201px;top:769px" width="8" height="7" viewBox="0 0 7 6.2"><path d="M1 0.3H7V1.8H1.8V2.4H6Q7 2.4 7 3.4V5Q7 6 6 6H0V4.5H5.3V3.9H1Q0 3.9 0 2.9V1.3Q0 0.3 1 0.3z" fill="#000"/></svg>
<div class="t" style="left:218px;top:767px;font-size:8.8px;color:#dfe8f0;font-weight:bold;width:64px;overflow:hidden;">WORK 2</div>
<div style="left:137px;top:777px;width:145px;height:11px;background:#3f5d80;border-top:1px solid #4e6c90;border-bottom:1px solid #263a52;"></div>
<div style="left:282px;top:777px;width:6px;height:11px;background:#e86070;"></div>
<div style="left:137px;top:777px;width:9px;height:11px;background:#34506e;"></div>
<div style="left:146px;top:778px;width:24px;height:10px;background:linear-gradient(180deg,#b0c4dc,#8aa4c4);"></div>
<svg style="left:146px;top:778px" width="14" height="10"><path d="M0 0.5Q1.5 8.5 13 8.8L13 9.5L0 9.5z" fill="#e4eef8" opacity="0.9"/></svg>
<div class="t" style="left:169px;top:778px;font-size:9.5px;color:#0a1828;text-align:right;transform:translateX(-100%);">34</div>
<div style="left:176px;top:778px;width:18px;height:10px;background:#56728f;border:1px solid #34495f;border-radius:2px;"></div>
<svg style="left:181px;top:780px" width="8" height="7" viewBox="0 0 7 6.2"><path d="M0 6V0.4H6Q7 0.4 7 1.4V6H5.3V2H4.35V6H2.65V2H1.7V6z" fill="#000"/></svg>
<div style="left:196px;top:778px;width:18px;height:10px;background:#56728f;border:1px solid #34495f;border-radius:2px;"></div>
<svg style="left:201px;top:780px" width="8" height="7" viewBox="0 0 7 6.2"><path d="M1 0.3H7V1.8H1.8V2.4H6Q7 2.4 7 3.4V5Q7 6 6 6H0V4.5H5.3V3.9H1Q0 3.9 0 2.9V1.3Q0 0.3 1 0.3z" fill="#000"/></svg>
<div class="t" style="left:218px;top:778px;font-size:8.8px;color:#dfe8f0;font-weight:bold;width:64px;overflow:hidden;">RED</div>
<div style="left:137px;top:788px;width:145px;height:11px;background:#3f5d80;border-top:1px solid #4e6c90;border-bottom:1px solid #263a52;"></div>
<div style="left:282px;top:788px;width:6px;height:11px;background:#e86070;"></div>
<div style="left:137px;top:788px;width:9px;height:11px;background:#34506e;"></div>
<div style="left:146px;top:788px;width:10px;height:11px;background:#1e2e40;"></div>
<div style="left:156px;top:789px;width:14px;height:10px;background:#b8c4d0;"></div>
<div style="left:176px;top:790px;width:18px;height:9px;background:#30d050;border:1px solid #107020;border-radius:2px;"></div>
<div class="t" style="left:181px;top:791px;font-size:10px;color:#000;font-weight:bold;">R</div>
<div style="left:196px;top:790px;width:18px;height:9px;background:#56728f;border:1px solid #34495f;border-radius:2px;"></div>
<div class="t" style="left:200px;top:791px;font-size:8px;color:#000;font-weight:bold;">III</div>
<div style="left:218px;top:790px;width:64px;height:9px;background:#56728f;border:1px solid #34495f;border-radius:2px;"></div>
<div class="t" style="left:221px;top:791px;font-size:9.5px;color:#0a1828;">Panner - Left-R</div>
<div style="left:137px;top:798px;width:145px;height:1px;background:#263a52;"></div>
<div style="left:137px;top:799px;width:145px;height:11px;background:#3f5d80;border-top:1px solid #4e6c90;border-bottom:1px solid #263a52;"></div>
<div style="left:282px;top:799px;width:6px;height:11px;background:#e8704a;"></div>
<div style="left:137px;top:799px;width:9px;height:11px;background:#34506e;"></div>
<div style="left:146px;top:800px;width:24px;height:10px;background:linear-gradient(180deg,#b0c4dc,#8aa4c4);"></div>
<svg style="left:146px;top:800px" width="14" height="10"><path d="M0 0.5Q1.5 8.5 13 8.8L13 9.5L0 9.5z" fill="#e4eef8" opacity="0.9"/></svg>
<div class="t" style="left:169px;top:800px;font-size:9.5px;color:#0a1828;text-align:right;transform:translateX(-100%);">35</div>
<div style="left:176px;top:800px;width:18px;height:10px;background:#56728f;border:1px solid #34495f;border-radius:2px;"></div>
<svg style="left:181px;top:802px" width="8" height="7" viewBox="0 0 7 6.2"><path d="M0 6V0.4H6Q7 0.4 7 1.4V6H5.3V2H4.35V6H2.65V2H1.7V6z" fill="#000"/></svg>
<div style="left:196px;top:800px;width:18px;height:10px;background:#56728f;border:1px solid #34495f;border-radius:2px;"></div>
<svg style="left:201px;top:802px" width="8" height="7" viewBox="0 0 7 6.2"><path d="M1 0.3H7V1.8H1.8V2.4H6Q7 2.4 7 3.4V5Q7 6 6 6H0V4.5H5.3V3.9H1Q0 3.9 0 2.9V1.3Q0 0.3 1 0.3z" fill="#000"/></svg>
<div class="t" style="left:218px;top:800px;font-size:8.8px;color:#dfe8f0;font-weight:bold;width:64px;overflow:hidden;">BIRDS</div>
<div style="left:137px;top:810px;width:145px;height:11px;background:#3f5d80;border-top:1px solid #4e6c90;border-bottom:1px solid #263a52;"></div>
<div style="left:282px;top:810px;width:6px;height:11px;background:#e8704a;"></div>
<div style="left:137px;top:810px;width:9px;height:11px;background:#34506e;"></div>
<div style="left:146px;top:810px;width:10px;height:11px;background:#1e2e40;"></div>
<div style="left:156px;top:811px;width:14px;height:10px;background:#b8c4d0;"></div>
<div style="left:176px;top:812px;width:18px;height:9px;background:#30d050;border:1px solid #107020;border-radius:2px;"></div>
<div class="t" style="left:181px;top:813px;font-size:10px;color:#000;font-weight:bold;">R</div>
<div style="left:196px;top:812px;width:18px;height:9px;background:#56728f;border:1px solid #34495f;border-radius:2px;"></div>
<div class="t" style="left:200px;top:813px;font-size:8px;color:#000;font-weight:bold;">III</div>
<div style="left:218px;top:812px;width:64px;height:9px;background:#56728f;border:1px solid #34495f;border-radius:2px;"></div>
<div class="t" style="left:221px;top:813px;font-size:9.5px;color:#0a1828;">Panner - Left-R</div>
<div style="left:137px;top:820px;width:145px;height:1px;background:#263a52;"></div>
<div style="left:137px;top:821px;width:145px;height:11px;background:#3f5d80;border-top:1px solid #4e6c90;border-bottom:1px solid #263a52;"></div>
<div style="left:282px;top:821px;width:6px;height:11px;background:#a8b8c8;"></div>
<div style="left:137px;top:821px;width:9px;height:11px;background:#34506e;"></div>
<div style="left:146px;top:822px;width:24px;height:10px;background:linear-gradient(180deg,#b0c4dc,#8aa4c4);"></div>
<svg style="left:146px;top:822px" width="14" height="10"><path d="M0 0.5Q1.5 8.5 13 8.8L13 9.5L0 9.5z" fill="#e4eef8" opacity="0.9"/></svg>
<div class="t" style="left:169px;top:822px;font-size:9.5px;color:#0a1828;text-align:right;transform:translateX(-100%);">36</div>
<div style="left:176px;top:822px;width:18px;height:10px;background:#56728f;border:1px solid #34495f;border-radius:2px;"></div>
<svg style="left:181px;top:824px" width="8" height="7" viewBox="0 0 7 6.2"><path d="M0 6V0.4H6Q7 0.4 7 1.4V6H5.3V2H4.35V6H2.65V2H1.7V6z" fill="#000"/></svg>
<div style="left:196px;top:822px;width:18px;height:10px;background:#56728f;border:1px solid #34495f;border-radius:2px;"></div>
<svg style="left:201px;top:824px" width="8" height="7" viewBox="0 0 7 6.2"><path d="M1 0.3H7V1.8H1.8V2.4H6Q7 2.4 7 3.4V5Q7 6 6 6H0V4.5H5.3V3.9H1Q0 3.9 0 2.9V1.3Q0 0.3 1 0.3z" fill="#000"/></svg>
<div class="t" style="left:218px;top:822px;font-size:8.8px;color:#dfe8f0;font-weight:bold;width:64px;overflow:hidden;">WHITE</div>
<div style="left:137px;top:832px;width:145px;height:11px;background:#3f5d80;border-top:1px solid #4e6c90;border-bottom:1px solid #263a52;"></div>
<div style="left:282px;top:832px;width:6px;height:11px;background:#a8b8c8;"></div>
<div style="left:137px;top:832px;width:9px;height:11px;background:#34506e;"></div>
<div style="left:146px;top:832px;width:10px;height:11px;background:#1e2e40;"></div>
<div style="left:156px;top:833px;width:14px;height:10px;background:#b8c4d0;"></div>
<div style="left:176px;top:834px;width:18px;height:9px;background:#30d050;border:1px solid #107020;border-radius:2px;"></div>
<div class="t" style="left:181px;top:835px;font-size:10px;color:#000;font-weight:bold;">R</div>
<div style="left:196px;top:834px;width:18px;height:9px;background:#56728f;border:1px solid #34495f;border-radius:2px;"></div>
<div class="t" style="left:200px;top:835px;font-size:8px;color:#000;font-weight:bold;">III</div>
<div style="left:218px;top:834px;width:64px;height:9px;background:#56728f;border:1px solid #34495f;border-radius:2px;"></div>
<div class="t" style="left:221px;top:835px;font-size:9.5px;color:#0a1828;">Panner - Left-R</div>
<div style="left:137px;top:842px;width:145px;height:1px;background:#263a52;"></div>
<div style="left:137px;top:843px;width:145px;height:10px;background:#3f5d80;border-top:1px solid #4e6c90;border-bottom:1px solid #263a52;"></div>
<div style="left:282px;top:843px;width:6px;height:10px;background:#5a8cd0;"></div>
<div style="left:137px;top:843px;width:9px;height:10px;background:#34506e;"></div>
<div style="left:146px;top:844px;width:24px;height:9px;background:linear-gradient(180deg,#b0c4dc,#8aa4c4);"></div>
<svg style="left:146px;top:844px" width="14" height="9"><path d="M0 0.5Q1.5 7.5 13 7.8L13 8.5L0 8.5z" fill="#e4eef8" opacity="0.9"/></svg>
<div class="t" style="left:169px;top:844px;font-size:9.5px;color:#0a1828;text-align:right;transform:translateX(-100%);">37</div>
<div style="left:176px;top:844px;width:18px;height:9px;background:#56728f;border:1px solid #34495f;border-radius:2px;"></div>
<svg style="left:181px;top:845px" width="8" height="7" viewBox="0 0 7 6.2"><path d="M0 6V0.4H6Q7 0.4 7 1.4V6H5.3V2H4.35V6H2.65V2H1.7V6z" fill="#000"/></svg>
<div style="left:196px;top:844px;width:18px;height:9px;background:#56728f;border:1px solid #34495f;border-radius:2px;"></div>
<svg style="left:201px;top:845px" width="8" height="7" viewBox="0 0 7 6.2"><path d="M1 0.3H7V1.8H1.8V2.4H6Q7 2.4 7 3.4V5Q7 6 6 6H0V4.5H5.3V3.9H1Q0 3.9 0 2.9V1.3Q0 0.3 1 0.3z" fill="#000"/></svg>
<div class="t" style="left:218px;top:844px;font-size:8.8px;color:#dfe8f0;font-weight:bold;width:64px;overflow:hidden;">Audio 32</div>
<div style="left:137px;top:853px;width:145px;height:11px;background:#3f5d80;border-top:1px solid #4e6c90;border-bottom:1px solid #263a52;"></div>
<div style="left:282px;top:853px;width:6px;height:11px;background:#7058a8;"></div>
<div style="left:137px;top:853px;width:9px;height:11px;background:#34506e;"></div>
<div style="left:146px;top:854px;width:24px;height:10px;background:linear-gradient(180deg,#d8d4c0,#b8b4a0);"></div>
<div style="left:148px;top:856px;width:10px;height:2px;background:#f4f4ec;"></div>
<div style="left:148px;top:859px;width:6px;height:2px;background:#f4f4ec;"></div>
<div class="t" style="left:169px;top:854px;font-size:9.5px;color:#0a1828;text-align:right;transform:translateX(-100%);">38</div>
<div style="left:176px;top:854px;width:18px;height:10px;background:#56728f;border:1px solid #34495f;border-radius:2px;"></div>
<svg style="left:181px;top:856px" width="8" height="7" viewBox="0 0 7 6.2"><path d="M0 6V0.4H6Q7 0.4 7 1.4V6H5.3V2H4.35V6H2.65V2H1.7V6z" fill="#000"/></svg>
<div style="left:196px;top:854px;width:18px;height:10px;background:#56728f;border:1px solid #34495f;border-radius:2px;"></div>
<svg style="left:201px;top:856px" width="8" height="7" viewBox="0 0 7 6.2"><path d="M1 0.3H7V1.8H1.8V2.4H6Q7 2.4 7 3.4V5Q7 6 6 6H0V4.5H5.3V3.9H1Q0 3.9 0 2.9V1.3Q0 0.3 1 0.3z" fill="#000"/></svg>
<div class="t" style="left:218px;top:854px;font-size:8.8px;color:#dfe8f0;font-weight:bold;width:64px;overflow:hidden;">DEEP BOOM</div>
<div style="left:137px;top:864px;width:145px;height:11px;background:#3f5d80;border-top:1px solid #4e6c90;border-bottom:1px solid #263a52;"></div>
<div style="left:282px;top:864px;width:6px;height:11px;background:#48b0e8;"></div>
<div style="left:137px;top:865px;width:24px;height:10px;background:linear-gradient(180deg,#b0c4dc,#8aa4c4);"></div>
<svg style="left:137px;top:865px" width="14" height="10"><path d="M0 0.5Q1.5 8.5 13 8.8L13 9.5L0 9.5z" fill="#e4eef8" opacity="0.9"/></svg>
<div class="t" style="left:160px;top:865px;font-size:9.5px;color:#0a1828;text-align:right;transform:translateX(-100%);">39</div>
<div style="left:167px;top:865px;width:18px;height:10px;background:#56728f;border:1px solid #34495f;border-radius:2px;"></div>
<svg style="left:172px;top:867px" width="8" height="7" viewBox="0 0 7 6.2"><path d="M0 6V0.4H6Q7 0.4 7 1.4V6H5.3V2H4.35V6H2.65V2H1.7V6z" fill="#000"/></svg>
<div style="left:187px;top:865px;width:18px;height:10px;background:#56728f;border:1px solid #34495f;border-radius:2px;"></div>
<svg style="left:192px;top:867px" width="8" height="7" viewBox="0 0 7 6.2"><path d="M1 0.3H7V1.8H1.8V2.4H6Q7 2.4 7 3.4V5Q7 6 6 6H0V4.5H5.3V3.9H1Q0 3.9 0 2.9V1.3Q0 0.3 1 0.3z" fill="#000"/></svg>
<div class="t" style="left:209px;top:865px;font-size:8.8px;color:#dfe8f0;font-weight:bold;width:73px;overflow:hidden;">Copy of bubbles</div>
<div style="left:137px;top:875px;width:145px;height:15px;background:#3f5d80;border-top:1px solid #4e6c90;border-bottom:1px solid #263a52;"></div>
<div style="left:282px;top:875px;width:6px;height:15px;background:#5a8cd0;"></div>
<svg style="left:154px;top:876px" width="18" height="13"><path d="M1 12V3h5l1 1h8v8z M1 12l3-5h13l-2 5z" stroke="#c8d4e0" fill="none"/></svg>
<div class="t" style="left:183px;top:878px;font-size:9.5px;color:#16243a;">FX Channels</div>
<div style="left:137px;top:890px;width:145px;height:13px;background:#3f5d80;border-top:1px solid #4e6c90;border-bottom:1px solid #263a52;"></div>
<div style="left:282px;top:890px;width:6px;height:13px;background:#5a8cd0;"></div>
<div style="left:137px;top:890px;width:9px;height:13px;background:#34506e;"></div>
<div style="left:146px;top:891px;width:24px;height:12px;background:#c8a0d0;"></div>
<div class="t" style="left:169px;top:892px;font-size:9.5px;color:#0a1828;text-align:right;transform:translateX(-100%);">40</div>
<div style="left:176px;top:891px;width:18px;height:11px;background:#56728f;border:1px solid #34495f;border-radius:2px;"></div>
<svg style="left:181px;top:893px" width="8" height="7" viewBox="0 0 7 6.2"><path d="M0 6V0.4H6Q7 0.4 7 1.4V6H5.3V2H4.35V6H2.65V2H1.7V6z" fill="#000"/></svg>
<div style="left:196px;top:891px;width:18px;height:11px;background:#56728f;border:1px solid #34495f;border-radius:2px;"></div>
<svg style="left:201px;top:893px" width="8" height="7" viewBox="0 0 7 6.2"><path d="M1 0.3H7V1.8H1.8V2.4H6Q7 2.4 7 3.4V5Q7 6 6 6H0V4.5H5.3V3.9H1Q0 3.9 0 2.9V1.3Q0 0.3 1 0.3z" fill="#000"/></svg>
<div class="t" style="left:218px;top:892px;font-size:8.8px;color:#dfe8f0;font-weight:bold;width:64px;overflow:hidden;">FX 1-RoomWo</div>
<div style="left:137px;top:903px;width:145px;height:14px;background:#3f5d80;border-top:1px solid #4e6c90;border-bottom:1px solid #263a52;"></div>
<div style="left:282px;top:903px;width:6px;height:14px;background:#a8b8c8;"></div>
<svg style="left:154px;top:904px" width="18" height="13"><path d="M1 12V3h5l1 1h8v8z M1 12l3-5h13l-2 5z" stroke="#c8d4e0" fill="none"/></svg>
<div class="t" style="left:183px;top:906px;font-size:9.5px;color:#16243a;">VST Instruments</div>
<div style="left:137px;top:917px;width:145px;height:18px;background:#3f5d80;border-top:1px solid #4e6c90;border-bottom:1px solid #263a52;"></div>
<div style="left:282px;top:917px;width:6px;height:18px;background:#a8b8c8;"></div>
<div style="left:137px;top:917px;width:9px;height:18px;background:#34506e;"></div>
<svg style="left:163px;top:918px" width="18" height="13"><path d="M1 12V3h5l1 1h8v8z M1 12l3-5h13l-2 5z" stroke="#c8d4e0" fill="none"/></svg>
<div class="t" style="left:192px;top:922px;font-size:9.5px;color:#16243a;">play_VST</div>
<div style="left:137px;top:935px;width:145px;height:12px;background:#3f5d80;border-top:1px solid #4e6c90;border-bottom:1px solid #263a52;"></div>
<div style="left:282px;top:935px;width:6px;height:12px;background:#a8b8c8;"></div>
<div style="left:137px;top:935px;width:18px;height:12px;background:#34506e;"></div>
<div style="left:155px;top:936px;width:24px;height:11px;background:#88c8a0;"></div>
<div class="t" style="left:178px;top:937px;font-size:9.5px;color:#0a1828;text-align:right;transform:translateX(-100%);">41</div>
<div style="left:185px;top:936px;width:18px;height:11px;background:#56728f;border:1px solid #34495f;border-radius:2px;"></div>
<svg style="left:190px;top:938px" width="8" height="7" viewBox="0 0 7 6.2"><path d="M0 6V0.4H6Q7 0.4 7 1.4V6H5.3V2H4.35V6H2.65V2H1.7V6z" fill="#000"/></svg>
<div style="left:205px;top:936px;width:18px;height:11px;background:#56728f;border:1px solid #34495f;border-radius:2px;"></div>
<svg style="left:210px;top:938px" width="8" height="7" viewBox="0 0 7 6.2"><path d="M1 0.3H7V1.8H1.8V2.4H6Q7 2.4 7 3.4V5Q7 6 6 6H0V4.5H5.3V3.9H1Q0 3.9 0 2.9V1.3Q0 0.3 1 0.3z" fill="#000"/></svg>
<div class="t" style="left:227px;top:937px;font-size:8.8px;color:#dfe8f0;font-weight:bold;width:55px;overflow:hidden;">1-2</div>
<div style="left:137px;top:947px;width:145px;height:11px;background:#3f5d80;border-top:1px solid #4e6c90;border-bottom:1px solid #263a52;"></div>
<div style="left:282px;top:947px;width:6px;height:11px;background:#a8b8c8;"></div>
<div style="left:137px;top:947px;width:18px;height:11px;background:#34506e;"></div>
<div style="left:155px;top:948px;width:24px;height:10px;background:#88c8a0;"></div>
<div style="left:185px;top:948px;width:18px;height:10px;background:#56728f;border:1px solid #34495f;border-radius:2px;"></div>
<div class="t" style="left:189px;top:947px;font-size:10.5px;color:#000;font-weight:bold;transform:scaleX(1.15);transform-origin:left;">R</div>
<div style="left:205px;top:948px;width:18px;height:10px;background:#56728f;border:1px solid #34495f;border-radius:2px;"></div>
<div class="t" style="left:210px;top:947px;font-size:10.5px;color:#000;font-weight:bold;transform:scaleX(1.15);transform-origin:left;">W</div>
<div class="t" style="left:227px;top:948px;font-size:9.5px;color:#c8d4e0;">play VST</div>
<div style="left:137px;top:958px;width:145px;height:4px;background:#3f5d80;border-top:1px solid #4e6c90;border-bottom:1px solid #263a52;"></div>
<div style="left:282px;top:958px;width:6px;height:4px;background:#48b0e8;"></div>
<div style="left:137px;top:959px;width:24px;height:3px;background:linear-gradient(180deg,#b0c4dc,#8aa4c4);"></div>
<svg style="left:137px;top:959px" width="14" height="3"><path d="M0 0.5Q1.5 1.5 13 1.7999999999999998L13 2.5L0 2.5z" fill="#e4eef8" opacity="0.9"/></svg>
<div class="t" style="left:160px;top:959px;font-size:9.5px;color:#0a1828;text-align:right;transform:translateX(-100%);">42</div>
<div style="left:167px;top:959px;width:18px;height:3px;background:#56728f;border:1px solid #34495f;border-radius:2px;"></div>
<div style="left:187px;top:959px;width:18px;height:3px;background:#56728f;border:1px solid #34495f;border-radius:2px;"></div>
<div style="left:137px;top:962px;width:160px;height:13px;background:#000;"></div>
<div class="t" style="left:141px;top:964px;font-size:9px;color:#e8e8e8;">Rec: 48000 Hz - 24 Bit - Max: 9h 28min</div>
<div style="left:2px;top:962px;width:135px;height:13px;background:#3e5a79;"></div>
<div style="left:298px;top:119px;width:1120px;height:18px;background:linear-gradient(180deg,#4f82ba,#4878b0);"></div>
<div style="left:1418px;top:119px;width:180px;height:18px;background:#2a4262;"></div>
<svg style="left:1412px;top:119px" width="8" height="8"><path d="M0 0h7v7z" fill="#f0f4f8"/></svg>
<div style="left:311px;top:121px;width:1px;height:3px;background:#c8d8e8;"></div>
<div style="left:325px;top:121px;width:1px;height:3px;background:#c8d8e8;"></div>
<div style="left:340px;top:121px;width:1px;height:3px;background:#c8d8e8;"></div>
<div style="left:355px;top:121px;width:1px;height:3px;background:#c8d8e8;"></div>
<div style="left:370px;top:121px;width:1px;height:6px;background:#e8f0f8;"></div>
<div style="left:384px;top:121px;width:1px;height:3px;background:#c8d8e8;"></div>
<div style="left:399px;top:121px;width:1px;height:3px;background:#c8d8e8;"></div>
<div style="left:414px;top:121px;width:1px;height:3px;background:#c8d8e8;"></div>
<div style="left:428px;top:121px;width:1px;height:3px;background:#c8d8e8;"></div>
<div style="left:443px;top:121px;width:1px;height:6px;background:#e8f0f8;"></div>
<div style="left:458px;top:121px;width:1px;height:3px;background:#c8d8e8;"></div>
<div style="left:473px;top:121px;width:1px;height:3px;background:#c8d8e8;"></div>
<div style="left:487px;top:121px;width:1px;height:3px;background:#c8d8e8;"></div>
<div style="left:502px;top:121px;width:1px;height:3px;background:#c8d8e8;"></div>
<div style="left:517px;top:121px;width:1px;height:6px;background:#e8f0f8;"></div>
<div style="left:532px;top:121px;width:1px;height:3px;background:#c8d8e8;"></div>
<div style="left:546px;top:121px;width:1px;height:3px;background:#c8d8e8;"></div>
<div style="left:561px;top:121px;width:1px;height:3px;background:#c8d8e8;"></div>
<div style="left:576px;top:121px;width:1px;height:3px;background:#c8d8e8;"></div>
<div style="left:590px;top:121px;width:1px;height:6px;background:#e8f0f8;"></div>
<div style="left:605px;top:121px;width:1px;height:3px;background:#c8d8e8;"></div>
<div style="left:620px;top:121px;width:1px;height:3px;background:#c8d8e8;"></div>
<div style="left:635px;top:121px;width:1px;height:3px;background:#c8d8e8;"></div>
<div style="left:649px;top:121px;width:1px;height:3px;background:#c8d8e8;"></div>
<div style="left:664px;top:121px;width:1px;height:6px;background:#e8f0f8;"></div>
<div style="left:679px;top:121px;width:1px;height:3px;background:#c8d8e8;"></div>
<div style="left:693px;top:121px;width:1px;height:3px;background:#c8d8e8;"></div>
<div style="left:708px;top:121px;width:1px;height:3px;background:#c8d8e8;"></div>
<div style="left:723px;top:121px;width:1px;height:3px;background:#c8d8e8;"></div>
<div style="left:738px;top:121px;width:1px;height:6px;background:#e8f0f8;"></div>
<div style="left:752px;top:121px;width:1px;height:3px;background:#c8d8e8;"></div>
<div style="left:767px;top:121px;width:1px;height:3px;background:#c8d8e8;"></div>
<div style="left:782px;top:121px;width:1px;height:3px;background:#c8d8e8;"></div>
<div style="left:796px;top:121px;width:1px;height:3px;background:#c8d8e8;"></div>
<div style="left:811px;top:121px;width:1px;height:6px;background:#e8f0f8;"></div>
<div style="left:826px;top:121px;width:1px;height:3px;background:#c8d8e8;"></div>
<div style="left:841px;top:121px;width:1px;height:3px;background:#c8d8e8;"></div>
<div style="left:855px;top:121px;width:1px;height:3px;background:#c8d8e8;"></div>
<div style="left:870px;top:121px;width:1px;height:3px;background:#c8d8e8;"></div>
<div style="left:885px;top:121px;width:1px;height:6px;background:#e8f0f8;"></div>
<div style="left:900px;top:121px;width:1px;height:3px;background:#c8d8e8;"></div>
<div style="left:914px;top:121px;width:1px;height:3px;background:#c8d8e8;"></div>
<div style="left:929px;top:121px;width:1px;height:3px;background:#c8d8e8;"></div>
<div style="left:944px;top:121px;width:1px;height:3px;background:#c8d8e8;"></div>
<div style="left:958px;top:121px;width:1px;height:6px;background:#e8f0f8;"></div>
<div style="left:973px;top:121px;width:1px;height:3px;background:#c8d8e8;"></div>
<div style="left:988px;top:121px;width:1px;height:3px;background:#c8d8e8;"></div>
<div style="left:1003px;top:121px;width:1px;height:3px;background:#c8d8e8;"></div>
<div style="left:1017px;top:121px;width:1px;height:3px;background:#c8d8e8;"></div>
<div style="left:1032px;top:121px;width:1px;height:6px;background:#e8f0f8;"></div>
<div style="left:1047px;top:121px;width:1px;height:3px;background:#c8d8e8;"></div>
<div style="left:1061px;top:121px;width:1px;height:3px;background:#c8d8e8;"></div>
<div style="left:1076px;top:121px;width:1px;height:3px;background:#c8d8e8;"></div>
<div style="left:1091px;top:121px;width:1px;height:3px;background:#c8d8e8;"></div>
<div style="left:1106px;top:121px;width:1px;height:6px;background:#e8f0f8;"></div>
<div style="left:1120px;top:121px;width:1px;height:3px;background:#c8d8e8;"></div>
<div style="left:1135px;top:121px;width:1px;height:3px;background:#c8d8e8;"></div>
<div style="left:1150px;top:121px;width:1px;height:3px;background:#c8d8e8;"></div>
<div style="left:1164px;top:121px;width:1px;height:3px;background:#c8d8e8;"></div>
<div style="left:1179px;top:121px;width:1px;height:6px;background:#e8f0f8;"></div>
<div style="left:1194px;top:121px;width:1px;height:3px;background:#c8d8e8;"></div>
<div style="left:1209px;top:121px;width:1px;height:3px;background:#c8d8e8;"></div>
<div style="left:1223px;top:121px;width:1px;height:3px;background:#c8d8e8;"></div>
<div style="left:1238px;top:121px;width:1px;height:3px;background:#c8d8e8;"></div>
<div style="left:1253px;top:121px;width:1px;height:6px;background:#e8f0f8;"></div>
<div style="left:1268px;top:121px;width:1px;height:3px;background:#c8d8e8;"></div>
<div style="left:1282px;top:121px;width:1px;height:3px;background:#c8d8e8;"></div>
<div style="left:1297px;top:121px;width:1px;height:3px;background:#c8d8e8;"></div>
<div style="left:1312px;top:121px;width:1px;height:3px;background:#c8d8e8;"></div>
<div style="left:1326px;top:121px;width:1px;height:6px;background:#e8f0f8;"></div>
<div style="left:1341px;top:121px;width:1px;height:3px;background:#c8d8e8;"></div>
<div style="left:1356px;top:121px;width:1px;height:3px;background:#c8d8e8;"></div>
<div style="left:1371px;top:121px;width:1px;height:3px;background:#c8d8e8;"></div>
<div style="left:1385px;top:121px;width:1px;height:3px;background:#c8d8e8;"></div>
<div style="left:1400px;top:121px;width:1px;height:6px;background:#e8f0f8;"></div>
<div style="left:1415px;top:121px;width:1px;height:3px;background:#c8d8e8;"></div>
<div style="left:1429px;top:121px;width:1px;height:3px;background:#c8d8e8;"></div>
<div style="left:1444px;top:121px;width:1px;height:3px;background:#c8d8e8;"></div>
<div style="left:1459px;top:121px;width:1px;height:3px;background:#c8d8e8;"></div>
<div style="left:1474px;top:121px;width:1px;height:6px;background:#e8f0f8;"></div>
<div style="left:1488px;top:121px;width:1px;height:3px;background:#c8d8e8;"></div>
<div style="left:1503px;top:121px;width:1px;height:3px;background:#c8d8e8;"></div>
<div style="left:1518px;top:121px;width:1px;height:3px;background:#c8d8e8;"></div>
<div style="left:1532px;top:121px;width:1px;height:3px;background:#c8d8e8;"></div>
<div style="left:1547px;top:121px;width:1px;height:6px;background:#e8f0f8;"></div>
<div style="left:1562px;top:121px;width:1px;height:3px;background:#c8d8e8;"></div>
<div style="left:1577px;top:121px;width:1px;height:3px;background:#c8d8e8;"></div>
<div class="t" style="left:295px;top:129px;font-size:9px;color:#f0f4f8;">20</div>
<div class="t" style="left:443px;top:129px;font-size:9px;color:#f0f4f8;">40</div>
<div class="t" style="left:590px;top:129px;font-size:9px;color:#f0f4f8;">1:00</div>
<div class="t" style="left:738px;top:129px;font-size:9px;color:#f0f4f8;">1:20</div>
<div class="t" style="left:885px;top:129px;font-size:9px;color:#f0f4f8;">1:40</div>
<div class="t" style="left:1032px;top:129px;font-size:9px;color:#f0f4f8;">2:00</div>
<div class="t" style="left:1179px;top:129px;font-size:9px;color:#f0f4f8;">2:20</div>
<div class="t" style="left:1326px;top:129px;font-size:9px;color:#f0f4f8;">2:40</div>
<div class="t" style="left:1474px;top:129px;font-size:9px;color:#f0f4f8;">3:00</div>
<div style="left:1587px;top:121px;width:10px;height:12px;background:#5a6e84;"></div>
<svg style="left:1588px;top:125px" width="8" height="5"><path d="M0 0h8l-4 4z" fill="#2a3848"/></svg>
<div style="left:298px;top:137px;width:1288px;height:825px;background:#f1f3f3;"></div>
<div style="left:298px;top:214px;width:1124px;height:748px;background:linear-gradient(90deg,#e3e8ea 0%,#e3e8ea 96%,#dce2e4 98.2%,#d8dee1 99.4%,#f1f3f3 100%);"></div>
<div style="left:311px;top:137px;width:1px;height:825px;background:#ccd4d8;"></div>
<div style="left:325px;top:137px;width:1px;height:825px;background:#ccd4d8;"></div>
<div style="left:340px;top:137px;width:1px;height:825px;background:#ccd4d8;"></div>
<div style="left:355px;top:137px;width:1px;height:825px;background:#ccd4d8;"></div>
<div style="left:370px;top:137px;width:1px;height:825px;background:#8c9498;"></div>
<div style="left:384px;top:137px;width:1px;height:825px;background:#ccd4d8;"></div>
<div style="left:399px;top:137px;width:1px;height:825px;background:#ccd4d8;"></div>
<div style="left:414px;top:137px;width:1px;height:825px;background:#ccd4d8;"></div>
<div style="left:428px;top:137px;width:1px;height:825px;background:#ccd4d8;"></div>
<div style="left:443px;top:137px;width:1px;height:825px;background:#8c9498;"></div>
<div style="left:458px;top:137px;width:1px;height:825px;background:#ccd4d8;"></div>
<div style="left:473px;top:137px;width:1px;height:825px;background:#ccd4d8;"></div>
<div style="left:487px;top:137px;width:1px;height:825px;background:#ccd4d8;"></div>
<div style="left:502px;top:137px;width:1px;height:825px;background:#ccd4d8;"></div>
<div style="left:517px;top:137px;width:1px;height:825px;background:#8c9498;"></div>
<div style="left:532px;top:137px;width:1px;height:825px;background:#ccd4d8;"></div>
<div style="left:546px;top:137px;width:1px;height:825px;background:#ccd4d8;"></div>
<div style="left:561px;top:137px;width:1px;height:825px;background:#ccd4d8;"></div>
<div style="left:576px;top:137px;width:1px;height:825px;background:#ccd4d8;"></div>
<div style="left:590px;top:137px;width:1px;height:825px;background:#8c9498;"></div>
<div style="left:605px;top:137px;width:1px;height:825px;background:#ccd4d8;"></div>
<div style="left:620px;top:137px;width:1px;height:825px;background:#ccd4d8;"></div>
<div style="left:635px;top:137px;width:1px;height:825px;background:#ccd4d8;"></div>
<div style="left:649px;top:137px;width:1px;height:825px;background:#ccd4d8;"></div>
<div style="left:664px;top:137px;width:1px;height:825px;background:#8c9498;"></div>
<div style="left:679px;top:137px;width:1px;height:825px;background:#ccd4d8;"></div>
<div style="left:693px;top:137px;width:1px;height:825px;background:#ccd4d8;"></div>
<div style="left:708px;top:137px;width:1px;height:825px;background:#ccd4d8;"></div>
<div style="left:723px;top:137px;width:1px;height:825px;background:#ccd4d8;"></div>
<div style="left:738px;top:137px;width:1px;height:825px;background:#8c9498;"></div>
<div style="left:752px;top:137px;width:1px;height:825px;background:#ccd4d8;"></div>
<div style="left:767px;top:137px;width:1px;height:825px;background:#ccd4d8;"></div>
<div style="left:782px;top:137px;width:1px;height:825px;background:#ccd4d8;"></div>
<div style="left:796px;top:137px;width:1px;height:825px;background:#ccd4d8;"></div>
<div style="left:811px;top:137px;width:1px;height:825px;background:#8c9498;"></div>
<div style="left:826px;top:137px;width:1px;height:825px;background:#ccd4d8;"></div>
<div style="left:841px;top:137px;width:1px;height:825px;background:#ccd4d8;"></div>
<div style="left:855px;top:137px;width:1px;height:825px;background:#ccd4d8;"></div>
<div style="left:870px;top:137px;width:1px;height:825px;background:#ccd4d8;"></div>
<div style="left:885px;top:137px;width:1px;height:825px;background:#8c9498;"></div>
<div style="left:900px;top:137px;width:1px;height:825px;background:#ccd4d8;"></div>
<div style="left:914px;top:137px;width:1px;height:825px;background:#ccd4d8;"></div>
<div style="left:929px;top:137px;width:1px;height:825px;background:#ccd4d8;"></div>
<div style="left:944px;top:137px;width:1px;height:825px;background:#ccd4d8;"></div>
<div style="left:958px;top:137px;width:1px;height:825px;background:#8c9498;"></div>
<div style="left:973px;top:137px;width:1px;height:825px;background:#ccd4d8;"></div>
<div style="left:988px;top:137px;width:1px;height:825px;background:#ccd4d8;"></div>
<div style="left:1003px;top:137px;width:1px;height:825px;background:#ccd4d8;"></div>
<div style="left:1017px;top:137px;width:1px;height:825px;background:#ccd4d8;"></div>
<div style="left:1032px;top:137px;width:1px;height:825px;background:#8c9498;"></div>
<div style="left:1047px;top:137px;width:1px;height:825px;background:#ccd4d8;"></div>
<div style="left:1061px;top:137px;width:1px;height:825px;background:#ccd4d8;"></div>
<div style="left:1076px;top:137px;width:1px;height:825px;background:#ccd4d8;"></div>
<div style="left:1091px;top:137px;width:1px;height:825px;background:#ccd4d8;"></div>
<div style="left:1106px;top:137px;width:1px;height:825px;background:#8c9498;"></div>
<div style="left:1120px;top:137px;width:1px;height:825px;background:#ccd4d8;"></div>
<div style="left:1135px;top:137px;width:1px;height:825px;background:#ccd4d8;"></div>
<div style="left:1150px;top:137px;width:1px;height:825px;background:#ccd4d8;"></div>
<div style="left:1164px;top:137px;width:1px;height:825px;background:#ccd4d8;"></div>
<div style="left:1179px;top:137px;width:1px;height:825px;background:#8c9498;"></div>
<div style="left:1194px;top:137px;width:1px;height:825px;background:#ccd4d8;"></div>
<div style="left:1209px;top:137px;width:1px;height:825px;background:#ccd4d8;"></div>
<div style="left:1223px;top:137px;width:1px;height:825px;background:#ccd4d8;"></div>
<div style="left:1238px;top:137px;width:1px;height:825px;background:#ccd4d8;"></div>
<div style="left:1253px;top:137px;width:1px;height:825px;background:#8c9498;"></div>
<div style="left:1268px;top:137px;width:1px;height:825px;background:#ccd4d8;"></div>
<div style="left:1282px;top:137px;width:1px;height:825px;background:#ccd4d8;"></div>
<div style="left:1297px;top:137px;width:1px;height:825px;background:#ccd4d8;"></div>
<div style="left:1312px;top:137px;width:1px;height:825px;background:#ccd4d8;"></div>
<div style="left:1326px;top:137px;width:1px;height:825px;background:#8c9498;"></div>
<div style="left:1341px;top:137px;width:1px;height:825px;background:#ccd4d8;"></div>
<div style="left:1356px;top:137px;width:1px;height:825px;background:#ccd4d8;"></div>
<div style="left:1371px;top:137px;width:1px;height:825px;background:#ccd4d8;"></div>
<div style="left:1385px;top:137px;width:1px;height:825px;background:#ccd4d8;"></div>
<div style="left:1400px;top:137px;width:1px;height:825px;background:#8c9498;"></div>
<div style="left:1415px;top:137px;width:1px;height:825px;background:#ccd4d8;"></div>
<div style="left:1429px;top:137px;width:1px;height:825px;background:#d8dee0;"></div>
<div style="left:1444px;top:137px;width:1px;height:825px;background:#d8dee0;"></div>
<div style="left:1459px;top:137px;width:1px;height:825px;background:#d8dee0;"></div>
<div style="left:1474px;top:137px;width:1px;height:825px;background:#a8b0b4;"></div>
<div style="left:1488px;top:137px;width:1px;height:825px;background:#d8dee0;"></div>
<div style="left:1503px;top:137px;width:1px;height:825px;background:#d8dee0;"></div>
<div style="left:1518px;top:137px;width:1px;height:825px;background:#d8dee0;"></div>
<div style="left:1532px;top:137px;width:1px;height:825px;background:#d8dee0;"></div>
<div style="left:1547px;top:137px;width:1px;height:825px;background:#a8b0b4;"></div>
<div style="left:1562px;top:137px;width:1px;height:825px;background:#d8dee0;"></div>
<div style="left:1577px;top:137px;width:1px;height:825px;background:#d8dee0;"></div>
<div style="left:298px;top:213px;width:1118px;height:1px;background:#c0c8cc;"></div>
<div style="left:1416px;top:213px;width:170px;height:1px;background:#d4dadc;"></div>
<div style="left:298px;top:229px;width:1118px;height:1px;background:#c0c8cc;"></div>
<div style="left:1416px;top:229px;width:170px;height:1px;background:#d4dadc;"></div>
<div style="left:298px;top:252px;width:1118px;height:1px;background:#c0c8cc;"></div>
<div style="left:1416px;top:252px;width:170px;height:1px;background:#d4dadc;"></div>
<div style="left:298px;top:272px;width:1118px;height:1px;background:#c0c8cc;"></div>
<div style="left:1416px;top:272px;width:170px;height:1px;background:#d4dadc;"></div>
<div style="left:298px;top:284px;width:1118px;height:1px;background:#c0c8cc;"></div>
<div style="left:1416px;top:284px;width:170px;height:1px;background:#d4dadc;"></div>
<div style="left:298px;top:295px;width:1118px;height:1px;background:#c0c8cc;"></div>
<div style="left:1416px;top:295px;width:170px;height:1px;background:#d4dadc;"></div>
<div style="left:298px;top:306px;width:1118px;height:1px;background:#c0c8cc;"></div>
<div style="left:1416px;top:306px;width:170px;height:1px;background:#d4dadc;"></div>
<div style="left:298px;top:317px;width:1118px;height:1px;background:#c0c8cc;"></div>
<div style="left:1416px;top:317px;width:170px;height:1px;background:#d4dadc;"></div>
<div style="left:298px;top:327px;width:1118px;height:1px;background:#c0c8cc;"></div>
<div style="left:1416px;top:327px;width:170px;height:1px;background:#d4dadc;"></div>
<div style="left:298px;top:338px;width:1118px;height:1px;background:#c0c8cc;"></div>
<div style="left:1416px;top:338px;width:170px;height:1px;background:#d4dadc;"></div>
<div style="left:298px;top:349px;width:1118px;height:1px;background:#c0c8cc;"></div>
<div style="left:1416px;top:349px;width:170px;height:1px;background:#d4dadc;"></div>
<div style="left:298px;top:360px;width:1118px;height:1px;background:#c0c8cc;"></div>
<div style="left:1416px;top:360px;width:170px;height:1px;background:#d4dadc;"></div>
<div style="left:298px;top:371px;width:1118px;height:1px;background:#c0c8cc;"></div>
<div style="left:1416px;top:371px;width:170px;height:1px;background:#d4dadc;"></div>
<div style="left:298px;top:382px;width:1118px;height:1px;background:#c0c8cc;"></div>
<div style="left:1416px;top:382px;width:170px;height:1px;background:#d4dadc;"></div>
<div style="left:298px;top:393px;width:1118px;height:1px;background:#c0c8cc;"></div>
<div style="left:1416px;top:393px;width:170px;height:1px;background:#d4dadc;"></div>
<div style="left:298px;top:403px;width:1118px;height:1px;background:#c0c8cc;"></div>
<div style="left:1416px;top:403px;width:170px;height:1px;background:#d4dadc;"></div>
<div style="left:298px;top:414px;width:1118px;height:1px;background:#c0c8cc;"></div>
<div style="left:1416px;top:414px;width:170px;height:1px;background:#d4dadc;"></div>
<div style="left:298px;top:425px;width:1118px;height:1px;background:#c0c8cc;"></div>
<div style="left:1416px;top:425px;width:170px;height:1px;background:#d4dadc;"></div>
<div style="left:298px;top:436px;width:1118px;height:1px;background:#c0c8cc;"></div>
<div style="left:1416px;top:436px;width:170px;height:1px;background:#d4dadc;"></div>
<div style="left:298px;top:447px;width:1118px;height:1px;background:#c0c8cc;"></div>
<div style="left:1416px;top:447px;width:170px;height:1px;background:#d4dadc;"></div>
<div style="left:298px;top:458px;width:1118px;height:1px;background:#c0c8cc;"></div>
<div style="left:1416px;top:458px;width:170px;height:1px;background:#d4dadc;"></div>
<div style="left:298px;top:468px;width:1118px;height:1px;background:#c0c8cc;"></div>
<div style="left:1416px;top:468px;width:170px;height:1px;background:#d4dadc;"></div>
<div style="left:298px;top:479px;width:1118px;height:1px;background:#c0c8cc;"></div>
<div style="left:1416px;top:479px;width:170px;height:1px;background:#d4dadc;"></div>
<div style="left:298px;top:490px;width:1118px;height:1px;background:#c0c8cc;"></div>
<div style="left:1416px;top:490px;width:170px;height:1px;background:#d4dadc;"></div>
<div style="left:298px;top:501px;width:1118px;height:1px;background:#c0c8cc;"></div>
<div style="left:1416px;top:501px;width:170px;height:1px;background:#d4dadc;"></div>
<div style="left:298px;top:512px;width:1118px;height:1px;background:#c0c8cc;"></div>
<div style="left:1416px;top:512px;width:170px;height:1px;background:#d4dadc;"></div>
<div style="left:298px;top:523px;width:1118px;height:1px;background:#c0c8cc;"></div>
<div style="left:1416px;top:523px;width:170px;height:1px;background:#d4dadc;"></div>
<div style="left:298px;top:534px;width:1118px;height:1px;background:#c0c8cc;"></div>
<div style="left:1416px;top:534px;width:170px;height:1px;background:#d4dadc;"></div>
<div style="left:298px;top:544px;width:1118px;height:1px;background:#c0c8cc;"></div>
<div style="left:1416px;top:544px;width:170px;height:1px;background:#d4dadc;"></div>
<div style="left:298px;top:555px;width:1118px;height:1px;background:#c0c8cc;"></div>
<div style="left:1416px;top:555px;width:170px;height:1px;background:#d4dadc;"></div>
<div style="left:298px;top:581px;width:1118px;height:1px;background:#c0c8cc;"></div>
<div style="left:1416px;top:581px;width:170px;height:1px;background:#d4dadc;"></div>
<div style="left:298px;top:597px;width:1118px;height:1px;background:#c0c8cc;"></div>
<div style="left:1416px;top:597px;width:170px;height:1px;background:#d4dadc;"></div>
<div style="left:298px;top:612px;width:1118px;height:1px;background:#c0c8cc;"></div>
<div style="left:1416px;top:612px;width:170px;height:1px;background:#d4dadc;"></div>
<div style="left:298px;top:624px;width:1118px;height:1px;background:#c0c8cc;"></div>
<div style="left:1416px;top:624px;width:170px;height:1px;background:#d4dadc;"></div>
<div style="left:298px;top:635px;width:1118px;height:1px;background:#c0c8cc;"></div>
<div style="left:1416px;top:635px;width:170px;height:1px;background:#d4dadc;"></div>
<div style="left:298px;top:646px;width:1118px;height:1px;background:#c0c8cc;"></div>
<div style="left:1416px;top:646px;width:170px;height:1px;background:#d4dadc;"></div>
<div style="left:298px;top:657px;width:1118px;height:1px;background:#c0c8cc;"></div>
<div style="left:1416px;top:657px;width:170px;height:1px;background:#d4dadc;"></div>
<div style="left:298px;top:668px;width:1118px;height:1px;background:#c0c8cc;"></div>
<div style="left:1416px;top:668px;width:170px;height:1px;background:#d4dadc;"></div>
<div style="left:298px;top:678px;width:1118px;height:1px;background:#c0c8cc;"></div>
<div style="left:1416px;top:678px;width:170px;height:1px;background:#d4dadc;"></div>
<div style="left:298px;top:689px;width:1118px;height:1px;background:#c0c8cc;"></div>
<div style="left:1416px;top:689px;width:170px;height:1px;background:#d4dadc;"></div>
<div style="left:298px;top:700px;width:1118px;height:1px;background:#c0c8cc;"></div>
<div style="left:1416px;top:700px;width:170px;height:1px;background:#d4dadc;"></div>
<div style="left:298px;top:711px;width:1118px;height:1px;background:#c0c8cc;"></div>
<div style="left:1416px;top:711px;width:170px;height:1px;background:#d4dadc;"></div>
<div style="left:298px;top:721px;width:1118px;height:1px;background:#c0c8cc;"></div>
<div style="left:1416px;top:721px;width:170px;height:1px;background:#d4dadc;"></div>
<div style="left:298px;top:732px;width:1118px;height:1px;background:#c0c8cc;"></div>
<div style="left:1416px;top:732px;width:170px;height:1px;background:#d4dadc;"></div>
<div style="left:298px;top:743px;width:1118px;height:1px;background:#c0c8cc;"></div>
<div style="left:1416px;top:743px;width:170px;height:1px;background:#d4dadc;"></div>
<div style="left:298px;top:754px;width:1118px;height:1px;background:#c0c8cc;"></div>
<div style="left:1416px;top:754px;width:170px;height:1px;background:#d4dadc;"></div>
<div style="left:298px;top:765px;width:1118px;height:1px;background:#c0c8cc;"></div>
<div style="left:1416px;top:765px;width:170px;height:1px;background:#d4dadc;"></div>
<div style="left:298px;top:776px;width:1118px;height:1px;background:#c0c8cc;"></div>
<div style="left:1416px;top:776px;width:170px;height:1px;background:#d4dadc;"></div>
<div style="left:298px;top:787px;width:1118px;height:1px;background:#c0c8cc;"></div>
<div style="left:1416px;top:787px;width:170px;height:1px;background:#d4dadc;"></div>
<div style="left:298px;top:798px;width:1118px;height:1px;background:#c0c8cc;"></div>
<div style="left:1416px;top:798px;width:170px;height:1px;background:#d4dadc;"></div>
<div style="left:298px;top:809px;width:1118px;height:1px;background:#c0c8cc;"></div>
<div style="left:1416px;top:809px;width:170px;height:1px;background:#d4dadc;"></div>
<div style="left:298px;top:820px;width:1118px;height:1px;background:#c0c8cc;"></div>
<div style="left:1416px;top:820px;width:170px;height:1px;background:#d4dadc;"></div>
<div style="left:298px;top:831px;width:1118px;height:1px;background:#c0c8cc;"></div>
<div style="left:1416px;top:831px;width:170px;height:1px;background:#d4dadc;"></div>
<div style="left:298px;top:842px;width:1118px;height:1px;background:#c0c8cc;"></div>
<div style="left:1416px;top:842px;width:170px;height:1px;background:#d4dadc;"></div>
<div style="left:298px;top:852px;width:1118px;height:1px;background:#c0c8cc;"></div>
<div style="left:1416px;top:852px;width:170px;height:1px;background:#d4dadc;"></div>
<div style="left:298px;top:863px;width:1118px;height:1px;background:#c0c8cc;"></div>
<div style="left:1416px;top:863px;width:170px;height:1px;background:#d4dadc;"></div>
<div style="left:298px;top:874px;width:1118px;height:1px;background:#c0c8cc;"></div>
<div style="left:1416px;top:874px;width:170px;height:1px;background:#d4dadc;"></div>
<div style="left:298px;top:889px;width:1118px;height:1px;background:#c0c8cc;"></div>
<div style="left:1416px;top:889px;width:170px;height:1px;background:#d4dadc;"></div>
<div style="left:298px;top:902px;width:1118px;height:1px;background:#c0c8cc;"></div>
<div style="left:1416px;top:902px;width:170px;height:1px;background:#d4dadc;"></div>
<div style="left:298px;top:916px;width:1118px;height:1px;background:#c0c8cc;"></div>
<div style="left:1416px;top:916px;width:170px;height:1px;background:#d4dadc;"></div>
<div style="left:298px;top:934px;width:1118px;height:1px;background:#c0c8cc;"></div>
<div style="left:1416px;top:934px;width:170px;height:1px;background:#d4dadc;"></div>
<div style="left:298px;top:946px;width:1118px;height:1px;background:#c0c8cc;"></div>
<div style="left:1416px;top:946px;width:170px;height:1px;background:#d4dadc;"></div>
<div style="left:298px;top:957px;width:1118px;height:1px;background:#c0c8cc;"></div>
<div style="left:1416px;top:957px;width:170px;height:1px;background:#d4dadc;"></div>
<div style="left:298px;top:894px;width:1288px;height:2px;background:#8c9498;"></div>
<div style="left:298px;top:938px;width:1288px;height:2px;background:#8c9498;"></div>
<div style="left:298px;top:953px;width:1288px;height:2px;background:#8c9498;"></div>
<div style="left:298px;top:137px;width:1139px;height:64px;background:#000;"></div>
<div style="left:396px;top:137px;width:2px;height:64px;background:#8a8a8a;"></div>
<div style="left:507px;top:137px;width:2px;height:64px;background:#8a8a8a;"></div>
<div style="left:619px;top:137px;width:2px;height:64px;background:#8a8a8a;"></div>
<div style="left:731px;top:137px;width:2px;height:64px;background:#8a8a8a;"></div>
<div style="left:843px;top:137px;width:2px;height:64px;background:#8a8a8a;"></div>
<div style="left:954px;top:137px;width:2px;height:64px;background:#8a8a8a;"></div>
<div style="left:1066px;top:137px;width:2px;height:64px;background:#8a8a8a;"></div>
<div style="left:1177px;top:137px;width:2px;height:64px;background:#8a8a8a;"></div>
<div style="left:1289px;top:137px;width:2px;height:64px;background:#8a8a8a;"></div>
<div style="left:1401px;top:137px;width:2px;height:64px;background:#8a8a8a;"></div>
<div style="left:1436px;top:137px;width:1px;height:64px;background:#8a8a8a;"></div>
<svg style="left:0;top:0" width="1600" height="210"><polygon points="300,171 395,169 395,177 300,178" fill="#2a1810" opacity="1"/><polygon points="300,172 320,171 318,177 300,178" fill="#808080" opacity="0.7"/><polygon points="320,171 345,171 345,177 320,177" fill="#6a2010" opacity="1"/><polygon points="342,171 390,170 392,176 340,177" fill="#b09030" opacity="1"/><polygon points="350,172 365,172 364,175 350,175" fill="#e0c858" opacity="1"/><polygon points="372,171 385,171 384,175 371,175" fill="#d8c050" opacity="1"/><polygon points="385,170 395,170 395,176 385,176" fill="#909090" opacity="0.8"/><polygon points="335,163 350,163 350,167 335,167" fill="#801c10" opacity="1"/><polygon points="358,161 372,161 376,167 360,167" fill="#c8c8c8" opacity="0.55"/><polygon points="398,138 506,138 506,166 398,166" fill="#d88830" opacity="1"/><polygon points="398,138 425,138 430,146 415,156 398,150" fill="#a82818" opacity="1"/><polygon points="430,138 506,138 506,152 490,150 470,158 450,146" fill="#a02010" opacity="1"/><polygon points="440,150 470,158 506,152 506,166 420,166" fill="#f0c840" opacity="1"/><polygon points="398,150 415,156 420,166 398,166" fill="#f0b8a0" opacity="1"/><polygon points="398,165 506,163 506,170 398,170" fill="#1a0c08" opacity="1"/><polygon points="398,170 430,170 425,201 398,201" fill="#f0c0a8" opacity="1"/><polygon points="430,170 470,170 480,201 425,201" fill="#5a3a18" opacity="1"/><polygon points="470,170 506,170 506,201 480,201" fill="#e8dca0" opacity="1"/><ellipse cx="493" cy="183" rx="11" ry="9" fill="#e8b8a0" stroke="#404020" stroke-width="0.8"/><polygon points="398,182 404,182 406,196 398,196" fill="#60c0b0" opacity="1"/><polygon points="510,140 590,140 602,165 535,165" fill="#3a3018" opacity="1"/><polygon points="540,143 585,143 596,160 552,160" fill="#6a6030" opacity="1"/><polygon points="555,147 575,147 580,153 560,153" fill="#c8b878" opacity="1"/><path d="M626 142 L681 200" stroke="#282828" stroke-width="1"/><path d="M738 142 L793 200" stroke="#282828" stroke-width="1"/><polygon points="846,140 950,140 952,166 880,168 846,150" fill="#2c3838" opacity="1"/><polygon points="880,140 952,140 952,166 910,166" fill="#3a4646" opacity="1"/><polygon points="885,142 905,142 910,150 890,152" fill="#c03a28" opacity="1"/><polygon points="910,142 950,145 945,152 915,150" fill="#8a9c9c" opacity="1"/><polygon points="870,150 890,148 888,160 870,160" fill="#8a9090" opacity="1"/><polygon points="900,152 915,152 910,162 898,160" fill="#b02018" opacity="1"/><polygon points="846,171 880,171 900,201 846,201" fill="#303a38" opacity="1"/><polygon points="885,171 952,171 952,201 910,201" fill="#2a3232" opacity="1"/><polygon points="852,176 875,176 880,196 855,196" fill="#404a48" opacity="1"/><polygon points="957,140 1040,140 1055,165 970,165" fill="#2a3030" opacity="1"/><circle cx="985" cy="151" r="8" fill="#d0d8d0"/><circle cx="985" cy="151" r="4" fill="#303838"/><polygon points="1000,140 1030,140 1040,162 1005,162" fill="#701828" opacity="1"/><polygon points="957,172 1010,172 1030,201 957,201" fill="#283030" opacity="1"/><polygon points="1020,170 1066,170 1066,201 1040,201" fill="#303a38" opacity="1"/><circle cx="1028" cy="182" r="2.5" fill="#d02020"/><circle cx="1060" cy="193" r="5" fill="#c8d0d0"/><polygon points="1090,140 1130,140 1135,160 1095,160" fill="#501818" opacity="1"/><polygon points="1100,142 1125,142 1130,155 1105,155" fill="#a02020" opacity="1"/><polygon points="1115,140 1140,140 1140,160 1118,160" fill="#c8d0d0" opacity="1"/><polygon points="1140,140 1177,140 1177,160 1140,160" fill="#e0e0d8" opacity="1"/><polygon points="1145,148 1160,148 1158,160 1142,160" fill="#a04020" opacity="1"/><polygon points="1125,140 1140,140 1138,158 1120,158" fill="#203030" opacity="1"/><polygon points="1179,138 1255,138 1289,170 1289,201 1179,201" fill="#3c4c50" opacity="1"/><polygon points="1190,140 1230,150 1260,170 1240,175 1195,160" fill="#1a2224" opacity="1"/><polygon points="1255,138 1289,138 1289,165" fill="#000" opacity="1"/><polygon points="1210,165 1289,195 1289,201 1240,201 1200,168" fill="#000" opacity="1"/><polygon points="1195,178 1225,175 1230,195 1200,198" fill="#c04860" opacity="1"/><polygon points="1250,185 1275,185 1272,195 1252,195" fill="#a07050" opacity="1"/><polygon points="1291,140 1400,140 1400,160 1291,160" fill="#4a5a5a" opacity="1"/><polygon points="1291,140 1310,140 1330,160 1320,160" fill="#101818" opacity="1"/><polygon points="1320,146 1345,146 1345,156 1320,156" fill="#9a6040" opacity="1"/><polygon points="1370,142 1400,142 1398,160 1360,160" fill="#6a7a50" opacity="1"/><polygon points="1312,142 1330,142 1328,148 1312,148" fill="#a03040" opacity="1"/><rect x="843" y="138" width="557" height="63" fill="#000" opacity="0.35"/><rect x="396" y="138" width="111" height="63" fill="#000" opacity="0.12"/></svg>
<div style="left:298px;top:201px;width:1139px;height:13px;background:linear-gradient(180deg,#a8b4c0,#98a4b0);border-bottom:1px solid #505a64;"></div>
<div class="t" style="left:299px;top:203px;font-size:9px;color:#1a2430;">ges_testTEST_x264</div>
<div style="left:298px;top:215px;width:1139px;height:15px;background:linear-gradient(180deg,#3a64b0 0%,#5a8ad0 15%,#5a8ad0 100%);border-bottom:1px solid #304870;"></div>
<div class="t" style="left:299px;top:218px;font-size:9px;color:#0a1830;">ges_testTEST</div>
<div style="left:298px;top:231px;width:224px;height:22px;background:#e8704a;border:1px solid #202830;overflow:hidden;"></div>
<div style="left:299px;top:232px;width:222px;height:9px;background:#e07050;"></div>
<svg style="left:299px;top:232px" width="222" height="9"><path d="M0 1.5H222M0 5.5H222" stroke="#201008" stroke-width="1.6"/><path d="M0 1.5H222M0 5.5H222" stroke="#f8f0ec" stroke-width="0.9" stroke-dasharray="4 3 7 4 2 5 10 3"/><path d="M0 8.5H222" stroke="#402018" stroke-width="1"/></svg>
<div class="t" style="left:300px;top:242px;font-size:8.8px;color:#2a1008;">s The Motion Comic Pt.2 'The Burning City' Theme</div>
<div style="left:1248px;top:231px;width:162px;height:22px;background:#e8704a;border:1px solid #202830;overflow:hidden;"></div>
<div style="left:1249px;top:232px;width:160px;height:9px;background:#e07050;"></div>
<svg style="left:1249px;top:232px" width="160" height="9"><path d="M0 2.5H160M0 6.5H160" stroke="#301810" stroke-width="1.4"/><path d="M100 1l3 6M97 5h8" stroke="#fff" stroke-width="1.2"/></svg>
<div class="t" style="left:1252px;top:242px;font-size:8.4px;color:#2a1008;">AB PT2 ENGDING REVISED</div>
<div style="left:547px;top:274px;width:243px;height:10px;background:#80c860;border:1px solid #202830;overflow:hidden;"><span style="position:absolute;left:2px;top:-1px;font-size:9px;line-height:11px;color:#111;white-space:nowrap;">AB PT2 'The Pigs Are OK'</span></div>
<div style="left:1030px;top:285px;width:99px;height:10px;background:#e8704a;border:1px solid #202830;overflow:hidden;"><span style="position:absolute;left:2px;top:-1px;font-size:9px;line-height:11px;color:#111;white-space:nowrap;font-style:italic;">AB PT2 'Leap of Faith'</span></div>
<div style="left:1032px;top:307px;width:101px;height:10px;background:#e8704a;border:1px solid #202830;overflow:hidden;"><span style="position:absolute;left:2px;top:-1px;font-size:9px;line-height:11px;color:#111;white-space:nowrap;">Sling Shot Choir</span></div>
<div style="left:1065px;top:328px;width:332px;height:10px;background:#e8894a;border:1px solid #202830;overflow:hidden;"><span style="position:absolute;left:2px;top:-1px;font-size:9px;line-height:11px;color:#111;white-space:nowrap;">MIDI 03</span></div>
<div style="left:1065px;top:339px;width:332px;height:10px;background:#e8894a;border:1px solid #202830;overflow:hidden;"><span style="position:absolute;left:2px;top:-1px;font-size:9px;line-height:11px;color:#111;white-space:nowrap;">TIMPAN</span></div>
<div style="left:1137px;top:350px;width:167px;height:10px;background:#f0e860;border:1px solid #202830;overflow:hidden;"><span style="position:absolute;left:2px;top:-1px;font-size:9px;line-height:11px;color:#111;white-space:nowrap;font-style:italic;">AB PT2 'Leap of Faith' Eerie 2</span></div>
<div style="left:790px;top:372px;width:246px;height:9px;background:#90d060;border:1px solid #202830;overflow:hidden;"><span style="position:absolute;left:2px;top:-2px;font-size:9px;line-height:11px;color:#111;white-space:nowrap;">AB PT2 'March of the Brave'</span></div>
<div style="left:298px;top:393px;width:1097px;height:10px;background:#78c860;border:1px solid #202830;overflow:hidden;"></div>
<div style="left:526px;top:404px;width:6px;height:10px;background:#a8b8c8;border:1px solid #202830;overflow:hidden;"></div>
<div style="left:542px;top:404px;width:5px;height:10px;background:#a8b8c8;border:1px solid #202830;overflow:hidden;"></div>
<div style="left:552px;top:404px;width:11px;height:10px;background:#a8b8c8;border:1px solid #202830;overflow:hidden;"></div>
<div style="left:564px;top:404px;width:226px;height:10px;background:#a8b8c8;border:1px solid #202830;overflow:hidden;"></div>
<div class="t" style="left:575px;top:405px;font-size:9px;color:#111;">Film projector run distant perspective loop  BLASTWA</div>
<div style="left:559px;top:415px;width:7px;height:10px;background:#a8b8c8;border:1px solid #202830;overflow:hidden;"></div>
<div style="left:491px;top:426px;width:60px;height:10px;background:#a8b8c8;border:1px solid #202830;overflow:hidden;"><span style="position:absolute;left:2px;top:-1px;font-size:9px;line-height:11px;color:#111;white-space:nowrap;font-style:italic;">low-indu &#8745;&#8596;g</span></div>
<div style="left:551px;top:426px;width:59px;height:10px;background:#a8b8c8;border:1px solid #202830;overflow:hidden;"><span style="position:absolute;left:2px;top:-1px;font-size:9px;line-height:11px;color:#111;white-space:nowrap;font-style:italic;">low-indu &#8745;&#8596;g</span></div>
<div style="left:610px;top:426px;width:58px;height:10px;background:#a8b8c8;border:1px solid #202830;overflow:hidden;"><span style="position:absolute;left:2px;top:-1px;font-size:9px;line-height:11px;color:#111;white-space:nowrap;font-style:italic;">low-indu &#8745;&#8596;g</span></div>
<div style="left:668px;top:426px;width:58px;height:10px;background:#a8b8c8;border:1px solid #202830;overflow:hidden;"><span style="position:absolute;left:2px;top:-1px;font-size:9px;line-height:11px;color:#111;white-space:nowrap;font-style:italic;">low-indu &#8745;&#8596;g</span></div>
<div style="left:726px;top:426px;width:59px;height:10px;background:#a8b8c8;border:1px solid #202830;overflow:hidden;"><span style="position:absolute;left:2px;top:-1px;font-size:9px;line-height:11px;color:#111;white-space:nowrap;font-style:italic;">low-indu &#8745;&#8596;g</span></div>
<div style="left:482px;top:437px;width:90px;height:9px;background:#e8704a;border:1px solid #202830;overflow:hidden;"><span style="position:absolute;left:2px;top:-2px;font-size:9px;line-height:11px;color:#111;white-space:nowrap;">play  VST 01</span></div>
<div style="left:635px;top:437px;width:89px;height:9px;background:linear-gradient(90deg,#b09088 0%,#b09088 68%,#e8704a 68%);border:1px solid #202830;overflow:hidden;"><span style="position:absolute;left:2px;top:-2px;font-size:9px;line-height:11px;color:#807878;white-space:nowrap;">play  VST 01</span></div>
<div style="left:809px;top:437px;width:137px;height:9px;background:#e8704a;border:1px solid #202830;overflow:hidden;"><span style="position:absolute;left:2px;top:-2px;font-size:9px;line-height:11px;color:#111;white-space:nowrap;">play  VST 01</span></div>
<div style="left:1154px;top:437px;width:110px;height:9px;background:#e8704a;border:1px solid #202830;overflow:hidden;"><span style="position:absolute;left:2px;top:-2px;font-size:9px;line-height:11px;color:#111;white-space:nowrap;">play  VST 01</span></div>
<div style="left:1270px;top:437px;width:137px;height:9px;background:#e8704a;border:1px solid #202830;overflow:hidden;"><span style="position:absolute;left:2px;top:-2px;font-size:9px;line-height:11px;color:#111;white-space:nowrap;">play  VST 01</span></div>
<div style="left:970px;top:448px;width:43px;height:9px;background:#a8acb0;border:1px solid #202830;overflow:hidden;"><span style="position:absolute;left:2px;top:-2px;font-size:9px;line-height:11px;color:#888;white-space:nowrap;">EFX EXT</span></div>
<div style="left:754px;top:459px;width:22px;height:9px;background:#a8acb0;border:1px solid #202830;overflow:hidden;"><span style="position:absolute;left:2px;top:-2px;font-size:9px;line-height:11px;color:#888;white-space:nowrap;">EFX</span></div>
<div style="left:785px;top:459px;width:36px;height:9px;background:#a8acb0;border:1px solid #202830;overflow:hidden;"><span style="position:absolute;left:2px;top:-2px;font-size:9px;line-height:11px;color:#888;white-space:nowrap;">EFX</span></div>
<div style="left:831px;top:459px;width:45px;height:9px;background:#a8acb0;border:1px solid #202830;overflow:hidden;"><span style="position:absolute;left:2px;top:-2px;font-size:9px;line-height:11px;color:#888;white-space:nowrap;">EFX</span></div>
<div style="left:877px;top:459px;width:33px;height:9px;background:#a8acb0;border:1px solid #202830;overflow:hidden;"><span style="position:absolute;left:2px;top:-2px;font-size:9px;line-height:11px;color:#888;white-space:nowrap;">EFX</span></div>
<div style="left:913px;top:459px;width:13px;height:9px;background:#a8acb0;border:1px solid #202830;overflow:hidden;"><span style="position:absolute;left:2px;top:-2px;font-size:9px;line-height:11px;color:#888;white-space:nowrap;">EFX</span></div>
<div style="left:945px;top:459px;width:29px;height:9px;background:#6a58a8;border:1px solid #202830;overflow:hidden;"><span style="position:absolute;left:2px;top:-2px;font-size:9px;line-height:11px;color:#eee;white-space:nowrap;">&#163; EFX</span></div>
<div style="left:958px;top:469px;width:30px;height:9px;background:#98a8c0;border:1px solid #202830;overflow:hidden;"><span style="position:absolute;left:2px;top:-2px;font-size:9px;line-height:11px;color:#111;white-space:nowrap;">door n</span></div>
<div style="left:967px;top:480px;width:110px;height:10px;background:#e8894a;border:1px solid #202830;overflow:hidden;"><span style="position:absolute;left:2px;top:-1px;font-size:9px;line-height:11px;color:#111;white-space:nowrap;">Small Fire-01</span></div>
<div style="left:1012px;top:491px;width:86px;height:9px;background:#e8704a;border:1px solid #202830;overflow:hidden;"><span style="position:absolute;left:2px;top:-2px;font-size:9px;line-height:11px;color:#111;white-space:nowrap;">Weather 22  Lightnin</span></div>
<div style="left:978px;top:502px;width:124px;height:9px;background:#e8704a;border:1px solid #202830;overflow:hidden;"><span style="position:absolute;left:2px;top:-2px;font-size:9px;line-height:11px;color:#111;white-space:nowrap;font-style:italic;">loud  th loud  thunder-01</span></div>
<div style="left:1012px;top:513px;width:30px;height:9px;background:#40b0a8;border:1px solid #202830;overflow:hidden;"><span style="position:absolute;left:2px;top:-2px;font-size:9px;line-height:11px;color:#eef;white-space:nowrap;">Impact</span></div>
<div style="left:1023px;top:524px;width:35px;height:9px;background:#40b0a8;border:1px solid #202830;overflow:hidden;"><span style="position:absolute;left:2px;top:-2px;font-size:9px;line-height:11px;color:#eef;white-space:nowrap;font-style:italic;">I  Impa</span></div>
<div style="left:1265px;top:534px;width:32px;height:10px;background:#f0e860;border:1px solid #202830;overflow:hidden;"><span style="position:absolute;left:2px;top:-1px;font-size:9px;line-height:11px;color:#111;white-space:nowrap;font-style:italic;">Sy S 3</span></div>
<div style="left:788px;top:545px;width:167px;height:10px;background:linear-gradient(90deg,#a8b0a0 0%,#a8b0a0 28%,#a8d860 28%);border:1px solid #202830;overflow:hidden;"><span style="position:absolute;left:2px;top:-1px;font-size:9px;line-height:11px;color:#707870;white-space:nowrap;font-style:italic;">CRICKETS</span></div>
<div style="left:959px;top:545px;width:70px;height:10px;background:#a8d860;border:1px solid #202830;overflow:hidden;"><span style="position:absolute;left:2px;top:-1px;font-size:9px;line-height:11px;color:#111;white-space:nowrap;font-style:italic;">CRICKETS</span></div>
<div style="left:330px;top:556px;width:923px;height:24px;background:linear-gradient(180deg,#b4b4b4 0%,#b4b4b4 52%,#48b0e0 52%);border:1px solid #202830;overflow:hidden;"></div>
<div style="left:331px;top:569px;width:67px;height:10px;background:#a8b0b8;"></div>
<div class="t" style="left:333px;top:570px;font-size:9px;color:#8a9098;">CLOSE WATER</div>
<div style="left:1277px;top:556px;width:115px;height:24px;background:linear-gradient(180deg,#48b0e0 0%,#48b0e0 50%,#202830 50%,#202830 54%,#48b0e0 54%);border:1px solid #202830;overflow:hidden;"></div>
<div style="left:1278px;top:559px;width:113px;height:1px;background:#202830;"></div>
<div style="left:1278px;top:563px;width:113px;height:1px;background:#202830;"></div>
<div class="t" style="left:1280px;top:570px;font-size:9px;color:#0a1828;">River running small and fast</div>
<div style="left:788px;top:625px;width:35px;height:9px;background:#40b070;border:1px solid #202830;overflow:hidden;"><span style="position:absolute;left:2px;top:-2px;font-size:9px;line-height:11px;color:#eef;white-space:nowrap;font-style:italic;">FOLE</span></div>
<div style="left:868px;top:625px;width:8px;height:9px;background:#98a8a0;border:1px solid #202830;overflow:hidden;"></div>
<div style="left:939px;top:625px;width:25px;height:9px;background:#40b070;border:1px solid #202830;overflow:hidden;"><span style="position:absolute;left:2px;top:-2px;font-size:9px;line-height:11px;color:#eef;white-space:nowrap;font-style:italic;">F  FC</span></div>
<div style="left:1136px;top:625px;width:78px;height:9px;background:#40b070;border:1px solid #202830;overflow:hidden;"><span style="position:absolute;left:2px;top:-2px;font-size:9px;line-height:11px;color:#eef;white-space:nowrap;font-style:italic;">|  FO  |  |  |  F</span></div>
<div style="left:790px;top:636px;width:32px;height:9px;background:#40b0a8;border:1px solid #202830;overflow:hidden;"><span style="position:absolute;left:2px;top:-2px;font-size:9px;line-height:11px;color:#eef;white-space:nowrap;font-style:italic;">FC FC</span></div>
<div style="left:787px;top:647px;width:357px;height:9px;background:#6a58a8;border:1px solid #202830;overflow:hidden;"><span style="position:absolute;left:2px;top:-2px;font-size:9px;line-height:11px;color:#e8e8f8;white-space:nowrap;font-style:italic;">WIND (Windstorm-Heavy-01)</span></div>
<div style="left:1188px;top:647px;width:165px;height:9px;background:linear-gradient(90deg,#a0a0a8 0%,#a0a0a8 80%,#6a58a8 80%);border:1px solid #202830;overflow:hidden;"><span style="position:absolute;left:2px;top:-2px;font-size:9px;line-height:11px;color:#888;white-space:nowrap;font-style:italic;">WIND (Windstorm-Heavy-01)</span></div>
<div style="left:1111px;top:680px;width:287px;height:9px;background:#6a58a8;border:1px solid #202830;overflow:hidden;"><span style="position:absolute;left:2px;top:-2px;font-size:9px;line-height:11px;color:#e8e8f8;white-space:nowrap;font-style:italic;">Winter Surge JO</span></div>
<div class="t" style="left:1340px;top:680px;font-size:9px;color:#e8e8f8;font-style:italic;">Winter Surge</div>
<div style="left:404px;top:712px;width:36px;height:9px;background:#9088a8;border:1px solid #202830;overflow:hidden;"><span style="position:absolute;left:2px;top:-2px;font-size:9px;line-height:11px;color:#c4c4cc;white-space:nowrap;">BIRDS</span></div>
<div style="left:440px;top:712px;width:26px;height:9px;background:#6a58a8;border:1px solid #202830;overflow:hidden;"></div>
<div style="left:466px;top:712px;width:39px;height:9px;background:#6a58a8;border:1px solid #202830;overflow:hidden;"><span style="position:absolute;left:2px;top:-2px;font-size:9px;line-height:11px;color:#e8e8f0;white-space:nowrap;">BIRDS</span></div>
<div style="left:505px;top:712px;width:25px;height:9px;background:#6a58a8;border:1px solid #202830;overflow:hidden;"><span style="position:absolute;left:2px;top:-2px;font-size:9px;line-height:11px;color:#e8e8f0;white-space:nowrap;">BIRD</span></div>
<div style="left:530px;top:712px;width:10px;height:9px;background:#6a58a8;border:1px solid #202830;overflow:hidden;"><span style="position:absolute;left:2px;top:-2px;font-size:9px;line-height:11px;color:#e8e8f0;white-space:nowrap;">B</span></div>
<div style="left:540px;top:712px;width:16px;height:9px;background:#6a58a8;border:1px solid #202830;overflow:hidden;"><span style="position:absolute;left:2px;top:-2px;font-size:9px;line-height:11px;color:#e8e8f0;white-space:nowrap;">BIF</span></div>
<div style="left:556px;top:712px;width:19px;height:9px;background:#6a58a8;border:1px solid #202830;overflow:hidden;"><span style="position:absolute;left:2px;top:-2px;font-size:9px;line-height:11px;color:#e8e8f0;white-space:nowrap;">BIF</span></div>
<div style="left:586px;top:712px;width:40px;height:9px;background:#9088a8;border:1px solid #202830;overflow:hidden;"><span style="position:absolute;left:2px;top:-2px;font-size:9px;line-height:11px;color:#c4c4cc;white-space:nowrap;">BIRDS</span></div>
<div style="left:741px;top:712px;width:49px;height:9px;background:#9088a8;border:1px solid #202830;overflow:hidden;"><span style="position:absolute;left:2px;top:-2px;font-size:9px;line-height:11px;color:#c4c4cc;white-space:nowrap;">BIRDS</span></div>
<div style="left:790px;top:712px;width:133px;height:9px;background:#6a58a8;border:1px solid #202830;overflow:hidden;"><span style="position:absolute;left:2px;top:-2px;font-size:9px;line-height:11px;color:#e8e8f0;white-space:nowrap;">BIRDS</span></div>
<div style="left:930px;top:712px;width:7px;height:9px;background:#6a58a8;border:1px solid #202830;overflow:hidden;"></div>
<div style="left:948px;top:712px;width:35px;height:9px;background:#9088a8;border:1px solid #202830;overflow:hidden;"><span style="position:absolute;left:2px;top:-2px;font-size:9px;line-height:11px;color:#c4c4cc;white-space:nowrap;">BIRDS</span></div>
<div style="left:983px;top:712px;width:17px;height:9px;background:#9088a8;border:1px solid #202830;overflow:hidden;"></div>
<div style="left:1000px;top:712px;width:10px;height:9px;background:#6a58a8;border:1px solid #202830;overflow:hidden;"><span style="position:absolute;left:2px;top:-2px;font-size:9px;line-height:11px;color:#e8e8f0;white-space:nowrap;">BI</span></div>
<div style="left:1010px;top:712px;width:8px;height:9px;background:#6a58a8;border:1px solid #202830;overflow:hidden;"></div>
<div style="left:1022px;top:712px;width:23px;height:9px;background:#6a58a8;border:1px solid #202830;overflow:hidden;"><span style="position:absolute;left:2px;top:-2px;font-size:9px;line-height:11px;color:#e8e8f0;white-space:nowrap;">BIRD</span></div>
<div style="left:1053px;top:712px;width:53px;height:9px;background:#6a58a8;border:1px solid #202830;overflow:hidden;"><span style="position:absolute;left:2px;top:-2px;font-size:9px;line-height:11px;color:#e8e8f0;white-space:nowrap;">B BI B B</span></div>
<div style="left:1151px;top:712px;width:34px;height:9px;background:#6a58a8;border:1px solid #202830;overflow:hidden;"><span style="position:absolute;left:2px;top:-2px;font-size:9px;line-height:11px;color:#e8e8f0;white-space:nowrap;">BIRDS</span></div>
<div style="left:1197px;top:712px;width:6px;height:9px;background:#6a58a8;border:1px solid #202830;overflow:hidden;"></div>
<div style="left:1204px;top:712px;width:4px;height:9px;background:#9088a8;border:1px solid #202830;overflow:hidden;"></div>
<div style="left:1208px;top:712px;width:26px;height:9px;background:#6a58a8;border:1px solid #202830;overflow:hidden;"><span style="position:absolute;left:2px;top:-2px;font-size:9px;line-height:11px;color:#e8e8f0;white-space:nowrap;">BIRDS</span></div>
<div style="left:1247px;top:712px;width:5px;height:9px;background:#6a58a8;border:1px solid #202830;overflow:hidden;"></div>
<div style="left:1258px;top:712px;width:11px;height:9px;background:#6a58a8;border:1px solid #202830;overflow:hidden;"><span style="position:absolute;left:2px;top:-2px;font-size:9px;line-height:11px;color:#e8e8f0;white-space:nowrap;">B</span></div>
<div style="left:1297px;top:712px;width:36px;height:9px;background:#9088a8;border:1px solid #202830;overflow:hidden;"><span style="position:absolute;left:2px;top:-2px;font-size:9px;line-height:11px;color:#c4c4cc;white-space:nowrap;">BIRDS</span></div>
<div style="left:1337px;top:712px;width:5px;height:9px;background:#6a58a8;border:1px solid #202830;overflow:hidden;"></div>
<div style="left:1343px;top:712px;width:29px;height:9px;background:#9088a8;border:1px solid #202830;overflow:hidden;"><span style="position:absolute;left:2px;top:-2px;font-size:9px;line-height:11px;color:#c4c4cc;white-space:nowrap;">BIRDS</span></div>
<div style="left:416px;top:722px;width:27px;height:10px;background:#b0b090;border:1px solid #202830;overflow:hidden;"><span style="position:absolute;left:2px;top:-1px;font-size:9px;line-height:11px;color:#88886a;white-space:nowrap;font-style:italic;">Angry</span></div>
<div style="left:512px;top:722px;width:10px;height:10px;background:#f0e860;border:1px solid #202830;overflow:hidden;"><span style="position:absolute;left:2px;top:-1px;font-size:9px;line-height:11px;color:#111;white-space:nowrap;font-style:italic;">A</span></div>
<div style="left:522px;top:722px;width:6px;height:10px;background:#f0e860;border:1px solid #202830;overflow:hidden;"></div>
<div style="left:528px;top:722px;width:12px;height:10px;background:#f0e860;border:1px solid #202830;overflow:hidden;"><span style="position:absolute;left:2px;top:-1px;font-size:9px;line-height:11px;color:#111;white-space:nowrap;font-style:italic;">A</span></div>
<div style="left:540px;top:722px;width:16px;height:10px;background:#f0e860;border:1px solid #202830;overflow:hidden;"><span style="position:absolute;left:2px;top:-1px;font-size:9px;line-height:11px;color:#111;white-space:nowrap;font-style:italic;">An</span></div>
<div style="left:556px;top:722px;width:18px;height:10px;background:#f0e860;border:1px solid #202830;overflow:hidden;"><span style="position:absolute;left:2px;top:-1px;font-size:9px;line-height:11px;color:#111;white-space:nowrap;font-style:italic;">An</span></div>
<div style="left:741px;top:722px;width:50px;height:10px;background:#f0e860;border:1px solid #202830;overflow:hidden;"><span style="position:absolute;left:2px;top:-1px;font-size:9px;line-height:11px;color:#111;white-space:nowrap;font-style:italic;">Angry Birds</span></div>
<div style="left:1053px;top:722px;width:6px;height:10px;background:#f0e860;border:1px solid #202830;overflow:hidden;"><span style="position:absolute;left:2px;top:-1px;font-size:9px;line-height:11px;color:#111;white-space:nowrap;font-style:italic;">A</span></div>
<div style="left:1197px;top:722px;width:6px;height:10px;background:#f0e860;border:1px solid #202830;overflow:hidden;"></div>
<div style="left:1209px;top:722px;width:19px;height:10px;background:#f0e860;border:1px solid #202830;overflow:hidden;"><span style="position:absolute;left:2px;top:-1px;font-size:9px;line-height:11px;color:#111;white-space:nowrap;font-style:italic;">A A</span></div>
<div style="left:1258px;top:722px;width:11px;height:10px;background:#f0e860;border:1px solid #202830;overflow:hidden;"><span style="position:absolute;left:2px;top:-1px;font-size:9px;line-height:11px;color:#111;white-space:nowrap;font-style:italic;">A</span></div>
<div style="left:586px;top:722px;width:40px;height:10px;background:#b0b090;border:1px solid #202830;overflow:hidden;"><span style="position:absolute;left:2px;top:-1px;font-size:9px;line-height:11px;color:#88886a;white-space:nowrap;font-style:italic;">Angry</span></div>
<div style="left:956px;top:744px;width:6px;height:10px;background:#f0e860;border:1px solid #202830;overflow:hidden;"></div>
<div style="left:983px;top:744px;width:18px;height:10px;background:#b0b8a0;border:1px solid #202830;overflow:hidden;"><span style="position:absolute;left:2px;top:-1px;font-size:9px;line-height:11px;color:#111;white-space:nowrap;font-style:italic;">Ai</span></div>
<div style="left:1209px;top:744px;width:19px;height:10px;background:#f0e860;border:1px solid #202830;overflow:hidden;"><span style="position:absolute;left:2px;top:-1px;font-size:9px;line-height:11px;color:#111;white-space:nowrap;font-style:italic;">Y4</span></div>
<div style="left:1258px;top:744px;width:11px;height:10px;background:#f0e860;border:1px solid #202830;overflow:hidden;"><span style="position:absolute;left:2px;top:-1px;font-size:9px;line-height:11px;color:#111;white-space:nowrap;font-style:italic;">Y</span></div>
<div style="left:404px;top:755px;width:65px;height:9px;background:#b0b8a0;border:1px solid #202830;overflow:hidden;"><span style="position:absolute;left:2px;top:-2px;font-size:9px;line-height:11px;color:#88886a;white-space:nowrap;font-style:italic;">Angry Birds Pl</span></div>
<div style="left:743px;top:755px;width:23px;height:9px;background:#b0b8a0;border:1px solid #202830;overflow:hidden;"><span style="position:absolute;left:2px;top:-2px;font-size:9px;line-height:11px;color:#88886a;white-space:nowrap;font-style:italic;">Aa</span></div>
<div style="left:777px;top:755px;width:18px;height:9px;background:#b0b8a0;border:1px solid #202830;overflow:hidden;"><span style="position:absolute;left:2px;top:-2px;font-size:9px;line-height:11px;color:#88886a;white-space:nowrap;font-style:italic;">Aa</span></div>
<div style="left:968px;top:755px;width:16px;height:9px;background:#b0b8a0;border:1px solid #202830;overflow:hidden;"><span style="position:absolute;left:2px;top:-2px;font-size:9px;line-height:11px;color:#88886a;white-space:nowrap;font-style:italic;">Ai</span></div>
<div style="left:1053px;top:755px;width:53px;height:9px;background:#a8d860;border:1px solid #202830;overflow:hidden;"><span style="position:absolute;left:2px;top:-2px;font-size:9px;line-height:11px;color:#111;white-space:nowrap;font-style:italic;">A A A A A</span></div>
<div style="left:1214px;top:755px;width:19px;height:9px;background:#a8d860;border:1px solid #202830;overflow:hidden;"><span style="position:absolute;left:2px;top:-2px;font-size:9px;line-height:11px;color:#111;white-space:nowrap;font-style:italic;">Anc</span></div>
<div style="left:1297px;top:755px;width:36px;height:9px;background:#b0b8a0;border:1px solid #202830;overflow:hidden;"><span style="position:absolute;left:2px;top:-2px;font-size:9px;line-height:11px;color:#88886a;white-space:nowrap;font-style:italic;">Angry</span></div>
<div style="left:469px;top:766px;width:88px;height:9px;background:#a8d860;border:1px solid #202830;overflow:hidden;"><span style="position:absolute;left:2px;top:-2px;font-size:9px;line-height:11px;color:#111;white-space:nowrap;font-style:italic;">Angry B  Angr  An  A</span></div>
<div style="left:836px;top:766px;width:16px;height:9px;background:#a8acb0;border:1px solid #202830;overflow:hidden;"></div>
<div style="left:948px;top:766px;width:42px;height:9px;background:#b0b8a0;border:1px solid #202830;overflow:hidden;"><span style="position:absolute;left:2px;top:-2px;font-size:9px;line-height:11px;color:#88886a;white-space:nowrap;font-style:italic;">Angry Bi</span></div>
<div style="left:1027px;top:766px;width:5px;height:9px;background:#a8d860;border:1px solid #202830;overflow:hidden;"></div>
<div style="left:1092px;top:766px;width:12px;height:9px;background:#a8acb0;border:1px solid #202830;overflow:hidden;"></div>
<div style="left:1343px;top:766px;width:28px;height:9px;background:#b0b8a0;border:1px solid #202830;overflow:hidden;"><span style="position:absolute;left:2px;top:-2px;font-size:9px;line-height:11px;color:#88886a;white-space:nowrap;font-style:italic;">Angry</span></div>
<div style="left:439px;top:777px;width:14px;height:10px;background:#c8a0a8;border:1px solid #202830;overflow:hidden;"></div>
<div style="left:855px;top:777px;width:7px;height:10px;background:#a8acb0;border:1px solid #202830;overflow:hidden;"></div>
<div style="left:866px;top:777px;width:5px;height:10px;background:#e86878;border:1px solid #202830;overflow:hidden;"></div>
<div style="left:887px;top:777px;width:6px;height:10px;background:#e86878;border:1px solid #202830;overflow:hidden;"></div>
<div style="left:914px;top:777px;width:6px;height:10px;background:#e86878;border:1px solid #202830;overflow:hidden;"></div>
<div style="left:930px;top:777px;width:7px;height:10px;background:#a8acb0;border:1px solid #202830;overflow:hidden;"></div>
<div style="left:1012px;top:777px;width:6px;height:10px;background:#e86878;border:1px solid #202830;overflow:hidden;"></div>
<div style="left:1022px;top:777px;width:22px;height:10px;background:#e86878;border:1px solid #202830;overflow:hidden;"><span style="position:absolute;left:2px;top:-1px;font-size:9px;line-height:11px;color:#111;white-space:nowrap;font-style:italic;">Ang</span></div>
<div style="left:1053px;top:777px;width:6px;height:10px;background:#e86878;border:1px solid #202830;overflow:hidden;"></div>
<div style="left:1080px;top:777px;width:7px;height:10px;background:#e86878;border:1px solid #202830;overflow:hidden;"></div>
<div style="left:1151px;top:777px;width:34px;height:10px;background:#e86878;border:1px solid #202830;overflow:hidden;"><span style="position:absolute;left:2px;top:-1px;font-size:9px;line-height:11px;color:#111;white-space:nowrap;font-style:italic;">Angry</span></div>
<div style="left:1197px;top:777px;width:6px;height:10px;background:#e86878;border:1px solid #202830;overflow:hidden;"></div>
<div style="left:1204px;top:777px;width:7px;height:10px;background:#a8acb0;border:1px solid #202830;overflow:hidden;"></div>
<div style="left:1247px;top:777px;width:5px;height:10px;background:#e86878;border:1px solid #202830;overflow:hidden;"></div>
<div style="left:1337px;top:777px;width:5px;height:10px;background:#e86878;border:1px solid #202830;overflow:hidden;"></div>
<div style="left:813px;top:799px;width:17px;height:10px;background:#e8704a;border:1px solid #202830;overflow:hidden;"><span style="position:absolute;left:2px;top:-1px;font-size:9px;line-height:11px;color:#111;white-space:nowrap;font-style:italic;">An</span></div>
<div style="left:848px;top:799px;width:11px;height:10px;background:#e8704a;border:1px solid #202830;overflow:hidden;"></div>
<div style="left:861px;top:799px;width:4px;height:10px;background:#e8704a;border:1px solid #202830;overflow:hidden;"></div>
<div style="left:880px;top:799px;width:4px;height:10px;background:#e8704a;border:1px solid #202830;overflow:hidden;"></div>
<div style="left:893px;top:799px;width:5px;height:10px;background:#a8acb0;border:1px solid #202830;overflow:hidden;"></div>
<div style="left:999px;top:799px;width:19px;height:10px;background:#e8704a;border:1px solid #202830;overflow:hidden;"><span style="position:absolute;left:2px;top:-1px;font-size:9px;line-height:11px;color:#111;white-space:nowrap;font-style:italic;">An</span></div>
<div style="left:1077px;top:799px;width:11px;height:10px;background:#e8704a;border:1px solid #202830;overflow:hidden;"><span style="position:absolute;left:2px;top:-1px;font-size:9px;line-height:11px;color:#111;white-space:nowrap;font-style:italic;">A</span></div>
<div style="left:466px;top:820px;width:5px;height:10px;background:#a8acb0;border:1px solid #202830;overflow:hidden;"></div>
<div style="left:480px;top:820px;width:8px;height:10px;background:#a8acb0;border:1px solid #202830;overflow:hidden;"></div>
<div style="left:847px;top:820px;width:10px;height:10px;background:#a8acb0;border:1px solid #202830;overflow:hidden;"></div>
<div style="left:866px;top:820px;width:7px;height:10px;background:#a8acb0;border:1px solid #202830;overflow:hidden;"></div>
<div style="left:877px;top:820px;width:5px;height:10px;background:#6a58a8;border:1px solid #202830;overflow:hidden;"></div>
<div style="left:1012px;top:820px;width:6px;height:10px;background:#6a58a8;border:1px solid #202830;overflow:hidden;"></div>
<div style="left:1078px;top:820px;width:10px;height:10px;background:#6a58a8;border:1px solid #202830;overflow:hidden;"><span style="position:absolute;left:2px;top:-1px;font-size:9px;line-height:11px;color:#eee;white-space:nowrap;font-style:italic;">A</span></div>
<div style="left:789px;top:852px;width:134px;height:10px;background:#6a58a8;border:1px solid #202830;overflow:hidden;"><span style="position:absolute;left:2px;top:-1px;font-size:9px;line-height:11px;color:#e8e8f0;white-space:nowrap;">MIDI 02</span></div>
<div style="left:683px;top:863px;width:46px;height:10px;background:#48b0e8;border:1px solid #202830;overflow:hidden;"><span style="position:absolute;left:2px;top:-1px;font-size:9px;line-height:11px;color:#111;white-space:nowrap;font-style:italic;">Dunk wind</span></div>
<div style="left:658px;top:957px;width:70px;height:8px;background:#48b0e8;border:1px solid #202830;overflow:hidden;"><span style="position:absolute;left:2px;top:-2px;font-size:9px;line-height:11px;color:#111;white-space:nowrap;font-style:italic;">Dunk wind bubbl</span></div>
<div style="left:522px;top:259px;width:778px;height:2px;background:#e8704a;"></div>
<div style="left:1300px;top:257px;width:110px;height:2px;background:#e8704a;"></div>
<div style="left:1410px;top:256px;width:176px;height:2px;background:#e8704a;"></div>
<svg style="left:0;top:0" width="1600" height="1000"><polygon points="299.0,257.6 300.5,257.3 302.0,257.4 303.5,257.9 305.0,257.9 306.5,257.9 308.0,257.5 309.5,257.8 311.0,257.3 312.5,257.3 314.0,256.9 315.5,257.0 317.0,257.8 318.5,257.6 320.0,257.8 321.5,257.3 323.0,257.4 324.5,257.9 326.0,257.2 327.5,257.6 329.0,257.5 330.5,257.1 332.0,257.7 333.5,257.4 335.0,257.2 336.5,256.9 338.0,257.5 339.5,257.8 341.0,257.9 342.5,257.1 344.0,257.0 345.5,257.2 347.0,257.3 348.5,257.1 350.0,257.4 351.5,257.9 353.0,257.3 354.5,257.1 356.0,257.5 357.5,257.9 359.0,257.8 360.5,257.9 362.0,257.8 363.5,257.5 365.0,257.9 366.5,257.4 368.0,257.1 369.5,257.7 371.0,257.6 372.5,256.9 374.0,257.8 375.5,257.7 377.0,257.3 378.5,257.9 380.0,257.6 381.5,256.9 383.0,257.4 384.5,257.2 386.0,257.0 387.5,257.0 389.0,257.5 390.5,257.8 392.0,257.9 393.5,257.7 395.0,257.6 396.5,257.9 398.0,257.8 399.5,257.9 401.0,257.3 402.5,257.7 404.0,257.6 405.5,257.1 407.0,257.5 408.5,257.9 410.0,257.6 411.5,257.1 413.0,257.9 414.5,257.4 416.0,257.4 417.5,257.4 419.0,257.0 420.5,257.7 422.0,257.8 423.5,257.4 425.0,257.6 426.5,257.1 428.0,257.1 429.5,257.1 431.0,257.7 432.5,257.6 434.0,257.9 435.5,257.7 437.0,256.9 438.5,257.0 440.0,256.9 441.5,257.7 443.0,257.7 444.5,257.3 446.0,257.1 447.5,257.3 449.0,257.9 450.5,257.0 452.0,257.2 453.5,257.8 455.0,257.6 456.5,256.9 458.0,257.5 459.5,257.2 461.0,257.8 462.5,257.0 464.0,257.8 465.5,256.9 467.0,257.6 468.5,257.8 470.0,256.9 471.5,257.5 473.0,257.7 474.5,257.4 476.0,258.0 477.5,258.1 479.0,258.2 480.5,258.4 482.0,258.3 483.5,258.3 485.0,258.5 486.5,258.6 488.0,258.7 489.5,258.8 491.0,259.0 492.5,259.1 494.0,259.0 495.5,259.2 497.0,259.2 498.5,259.2 500.0,259.2 500.0,259.8 498.5,259.8 497.0,259.9 495.5,259.8 494.0,259.9 492.5,260.0 491.0,260.2 489.5,260.1 488.0,260.1 486.5,260.5 485.0,260.8 483.5,260.9 482.0,260.7 480.5,261.1 479.0,260.9 477.5,261.1 476.0,261.0 474.5,261.0 473.0,261.7 471.5,261.9 470.0,261.7 468.5,261.1 467.0,261.6 465.5,261.7 464.0,261.9 462.5,261.9 461.0,261.2 459.5,261.2 458.0,262.0 456.5,261.5 455.0,261.9 453.5,261.9 452.0,261.6 450.5,261.9 449.0,261.7 447.5,261.9 446.0,261.6 444.5,262.0 443.0,261.3 441.5,261.3 440.0,261.4 438.5,262.1 437.0,261.5 435.5,261.8 434.0,261.4 432.5,261.1 431.0,261.6 429.5,261.8 428.0,261.9 426.5,262.1 425.0,261.3 423.5,261.9 422.0,261.9 420.5,261.4 419.0,261.8 417.5,262.1 416.0,261.1 414.5,261.2 413.0,262.0 411.5,261.2 410.0,261.3 408.5,261.2 407.0,261.6 405.5,262.1 404.0,261.2 402.5,261.4 401.0,261.2 399.5,262.0 398.0,261.4 396.5,261.2 395.0,261.1 393.5,261.2 392.0,261.1 390.5,261.7 389.0,261.5 387.5,261.9 386.0,261.9 384.5,261.1 383.0,261.7 381.5,261.8 380.0,261.6 378.5,261.5 377.0,261.3 375.5,261.6 374.0,261.3 372.5,261.2 371.0,262.0 369.5,261.5 368.0,262.0 366.5,262.0 365.0,261.5 363.5,262.0 362.0,261.3 360.5,261.9 359.0,261.2 357.5,261.5 356.0,261.8 354.5,261.4 353.0,262.1 351.5,261.8 350.0,261.8 348.5,262.0 347.0,261.5 345.5,261.7 344.0,261.4 342.5,261.7 341.0,261.8 339.5,261.6 338.0,261.8 336.5,261.2 335.0,261.4 333.5,262.0 332.0,261.7 330.5,261.8 329.0,261.4 327.5,261.7 326.0,261.5 324.5,261.3 323.0,261.1 321.5,261.4 320.0,261.7 318.5,261.9 317.0,261.2 315.5,261.4 314.0,261.1 312.5,261.5 311.0,262.0 309.5,261.3 308.0,261.9 306.5,261.2 305.0,261.5 303.5,261.6 302.0,261.4 300.5,261.1 299.0,261.2" fill="#a07870" stroke="#202020" stroke-width="0.7"/></svg>
<div style="left:489px;top:259px;width:33px;height:2px;background:#c07a62;"></div>
<svg style="left:0;top:0" width="1600" height="1000"><polygon points="299.0,266.5 300.5,266.7 302.0,266.3 303.5,266.6 305.0,266.7 306.5,266.8 308.0,266.8 309.5,266.5 311.0,266.3 312.5,266.7 314.0,266.4 315.5,267.2 317.0,267.2 318.5,267.2 320.0,266.4 321.5,267.1 323.0,266.6 324.5,266.3 326.0,267.1 327.5,266.9 329.0,266.2 330.5,267.1 332.0,266.7 333.5,267.1 335.0,266.5 336.5,266.7 338.0,267.3 339.5,266.6 341.0,267.2 342.5,266.4 344.0,267.2 345.5,267.3 347.0,267.0 348.5,266.8 350.0,266.4 351.5,267.2 353.0,266.7 354.5,267.2 356.0,266.5 357.5,267.2 359.0,266.6 360.5,267.2 362.0,267.2 363.5,266.8 365.0,266.7 366.5,267.0 368.0,266.7 369.5,267.2 371.0,267.3 372.5,267.0 374.0,266.5 375.5,266.8 377.0,266.9 378.5,267.0 380.0,266.5 381.5,267.1 383.0,266.3 384.5,266.4 386.0,266.8 387.5,266.9 389.0,266.5 390.5,266.9 392.0,266.5 393.5,266.9 395.0,267.3 396.5,267.2 398.0,267.0 399.5,267.2 401.0,266.3 402.5,267.0 404.0,267.0 405.5,267.1 407.0,267.0 408.5,266.2 410.0,267.0 411.5,267.0 413.0,267.3 414.5,266.8 416.0,267.1 417.5,267.3 419.0,267.2 420.5,267.3 422.0,267.0 423.5,266.7 425.0,266.5 426.5,266.5 428.0,266.9 429.5,266.2 431.0,266.5 432.5,267.3 434.0,266.3 435.5,266.5 437.0,267.2 438.5,266.8 440.0,266.4 441.5,266.7 443.0,266.6 444.5,267.1 446.0,267.2 447.5,267.2 449.0,266.7 450.5,266.6 452.0,266.8 453.5,266.4 455.0,266.8 456.5,266.6 458.0,266.5 459.5,267.2 461.0,266.5 462.5,266.5 464.0,266.8 465.5,266.8 467.0,266.5 468.5,266.6 470.0,267.2 471.5,266.6 473.0,266.9 474.5,267.5 476.0,267.1 477.5,267.2 479.0,267.4 480.5,267.6 482.0,267.4 483.5,267.5 485.0,268.2 486.5,267.8 488.0,268.1 489.5,268.3 491.0,268.4 492.5,268.5 494.0,268.5 495.5,268.6 497.0,268.6 498.5,268.7 500.0,268.7 500.0,269.3 498.5,269.4 497.0,269.4 495.5,269.3 494.0,269.4 492.5,269.6 491.0,269.7 489.5,270.0 488.0,269.8 486.5,270.2 485.0,270.1 483.5,270.5 482.0,270.1 480.5,270.2 479.0,270.5 477.5,270.5 476.0,271.0 474.5,270.7 473.0,270.5 471.5,270.9 470.0,271.0 468.5,270.8 467.0,271.4 465.5,271.4 464.0,271.1 462.5,271.8 461.0,270.9 459.5,271.0 458.0,271.0 456.5,270.8 455.0,271.3 453.5,271.5 452.0,270.7 450.5,271.4 449.0,271.4 447.5,271.6 446.0,271.1 444.5,270.7 443.0,271.5 441.5,271.7 440.0,271.6 438.5,271.6 437.0,271.3 435.5,271.6 434.0,271.4 432.5,271.6 431.0,271.4 429.5,270.8 428.0,271.0 426.5,271.7 425.0,271.4 423.5,271.3 422.0,270.9 420.5,270.7 419.0,271.1 417.5,271.0 416.0,271.2 414.5,271.2 413.0,271.1 411.5,271.1 410.0,271.8 408.5,271.3 407.0,271.8 405.5,271.2 404.0,271.2 402.5,271.0 401.0,271.4 399.5,271.6 398.0,270.9 396.5,271.5 395.0,270.8 393.5,271.1 392.0,271.4 390.5,271.6 389.0,271.8 387.5,271.2 386.0,271.6 384.5,271.2 383.0,270.8 381.5,271.2 380.0,271.3 378.5,270.7 377.0,270.7 375.5,270.9 374.0,271.0 372.5,271.0 371.0,270.9 369.5,270.9 368.0,270.9 366.5,270.8 365.0,271.7 363.5,271.1 362.0,271.6 360.5,271.6 359.0,271.6 357.5,271.7 356.0,271.2 354.5,270.7 353.0,271.5 351.5,271.7 350.0,271.0 348.5,271.7 347.0,270.8 345.5,271.6 344.0,271.0 342.5,271.8 341.0,271.8 339.5,271.3 338.0,271.1 336.5,271.2 335.0,270.7 333.5,271.0 332.0,271.1 330.5,271.2 329.0,271.6 327.5,271.2 326.0,271.7 324.5,271.8 323.0,270.8 321.5,271.5 320.0,271.7 318.5,271.4 317.0,270.9 315.5,271.2 314.0,270.8 312.5,271.7 311.0,271.0 309.5,271.7 308.0,271.7 306.5,271.3 305.0,271.5 303.5,271.2 302.0,271.2 300.5,271.5 299.0,271.2" fill="#808080" stroke="#202020" stroke-width="0.7"/></svg>
<div style="left:495px;top:268px;width:27px;height:2px;background:#101010;"></div>
<div style="left:519px;top:259px;width:4px;height:4px;background:#000;"></div>
<div style="left:561px;top:259px;width:4px;height:4px;background:#000;"></div>
<div style="left:565px;top:259px;width:4px;height:4px;background:#000;"></div>
<div style="left:570px;top:259px;width:4px;height:4px;background:#000;"></div>
<div style="left:590px;top:259px;width:4px;height:4px;background:#000;"></div>
<div style="left:690px;top:259px;width:4px;height:4px;background:#000;"></div>
<div style="left:695px;top:259px;width:4px;height:4px;background:#000;"></div>
<div style="left:699px;top:259px;width:4px;height:4px;background:#000;"></div>
<div style="left:708px;top:259px;width:4px;height:4px;background:#000;"></div>
<div style="left:826px;top:259px;width:4px;height:4px;background:#000;"></div>
<div style="left:836px;top:259px;width:4px;height:4px;background:#000;"></div>
<div style="left:855px;top:259px;width:4px;height:4px;background:#000;"></div>
<div style="left:934px;top:259px;width:4px;height:4px;background:#000;"></div>
<div style="left:938px;top:259px;width:4px;height:4px;background:#000;"></div>
<div style="left:954px;top:259px;width:4px;height:4px;background:#000;"></div>
<div style="left:962px;top:259px;width:4px;height:4px;background:#000;"></div>
<div style="left:1194px;top:259px;width:4px;height:4px;background:#000;"></div>
<div style="left:1204px;top:259px;width:4px;height:4px;background:#000;"></div>
<div style="left:1235px;top:259px;width:4px;height:4px;background:#000;"></div>
<div style="left:1245px;top:259px;width:4px;height:4px;background:#000;"></div>
<div style="left:1260px;top:259px;width:4px;height:4px;background:#000;"></div>
<div style="left:1272px;top:259px;width:4px;height:4px;background:#000;"></div>
<div style="left:1336px;top:259px;width:4px;height:4px;background:#000;"></div>
<div style="left:1350px;top:259px;width:4px;height:4px;background:#000;"></div>
<div style="left:1407px;top:259px;width:4px;height:4px;background:#000;"></div>
<div style="left:298px;top:299px;width:1288px;height:2px;background:#e8704a;"></div>
<div style="left:356px;top:298px;width:4px;height:4px;background:#000;"></div>
<div style="left:363px;top:298px;width:4px;height:4px;background:#000;"></div>
<div style="left:558px;top:298px;width:4px;height:4px;background:#000;"></div>
<div style="left:562px;top:298px;width:4px;height:4px;background:#000;"></div>
<div style="left:566px;top:298px;width:4px;height:4px;background:#000;"></div>
<div style="left:570px;top:298px;width:4px;height:4px;background:#000;"></div>
<div style="left:590px;top:298px;width:4px;height:4px;background:#000;"></div>
<div style="left:690px;top:298px;width:4px;height:4px;background:#000;"></div>
<div style="left:695px;top:298px;width:4px;height:4px;background:#000;"></div>
<div style="left:699px;top:298px;width:4px;height:4px;background:#000;"></div>
<div style="left:708px;top:298px;width:4px;height:4px;background:#000;"></div>
<div style="left:826px;top:298px;width:4px;height:4px;background:#000;"></div>
<div style="left:836px;top:298px;width:4px;height:4px;background:#000;"></div>
<div style="left:889px;top:298px;width:4px;height:4px;background:#000;"></div>
<div style="left:907px;top:298px;width:4px;height:4px;background:#000;"></div>
<div style="left:980px;top:298px;width:4px;height:4px;background:#000;"></div>
<div style="left:1012px;top:298px;width:4px;height:4px;background:#000;"></div>
<div style="left:1017px;top:298px;width:4px;height:4px;background:#000;"></div>
<div style="left:1139px;top:298px;width:4px;height:4px;background:#000;"></div>
<div style="left:1235px;top:298px;width:4px;height:4px;background:#000;"></div>
<div style="left:1252px;top:298px;width:4px;height:4px;background:#000;"></div>
<div style="left:1260px;top:298px;width:4px;height:4px;background:#000;"></div>
<div style="left:1268px;top:298px;width:4px;height:4px;background:#000;"></div>
<div style="left:1281px;top:298px;width:4px;height:4px;background:#000;"></div>
<div style="left:1284px;top:298px;width:4px;height:4px;background:#000;"></div>
<div style="left:1372px;top:298px;width:4px;height:4px;background:#000;"></div>
<div style="left:1394px;top:298px;width:4px;height:4px;background:#000;"></div>
<div style="left:1419px;top:298px;width:4px;height:4px;background:#000;"></div>
<div style="left:1427px;top:298px;width:4px;height:4px;background:#000;"></div>
<div style="left:1430px;top:298px;width:4px;height:4px;background:#000;"></div>
<div style="left:1470px;top:298px;width:4px;height:4px;background:#000;"></div>
<div style="left:1543px;top:298px;width:4px;height:4px;background:#000;"></div>
<div style="left:1577px;top:298px;width:4px;height:4px;background:#000;"></div>
<div style="left:298px;top:321px;width:1288px;height:2px;background:#e8704a;"></div>
<div style="left:356px;top:320px;width:4px;height:4px;background:#000;"></div>
<div style="left:363px;top:320px;width:4px;height:4px;background:#000;"></div>
<div style="left:558px;top:320px;width:4px;height:4px;background:#000;"></div>
<div style="left:562px;top:320px;width:4px;height:4px;background:#000;"></div>
<div style="left:566px;top:320px;width:4px;height:4px;background:#000;"></div>
<div style="left:570px;top:320px;width:4px;height:4px;background:#000;"></div>
<div style="left:590px;top:320px;width:4px;height:4px;background:#000;"></div>
<div style="left:690px;top:320px;width:4px;height:4px;background:#000;"></div>
<div style="left:695px;top:320px;width:4px;height:4px;background:#000;"></div>
<div style="left:699px;top:320px;width:4px;height:4px;background:#000;"></div>
<div style="left:708px;top:320px;width:4px;height:4px;background:#000;"></div>
<div style="left:826px;top:320px;width:4px;height:4px;background:#000;"></div>
<div style="left:836px;top:320px;width:4px;height:4px;background:#000;"></div>
<div style="left:889px;top:320px;width:4px;height:4px;background:#000;"></div>
<div style="left:907px;top:320px;width:4px;height:4px;background:#000;"></div>
<div style="left:980px;top:320px;width:4px;height:4px;background:#000;"></div>
<div style="left:1012px;top:320px;width:4px;height:4px;background:#000;"></div>
<div style="left:1017px;top:320px;width:4px;height:4px;background:#000;"></div>
<div style="left:1139px;top:320px;width:4px;height:4px;background:#000;"></div>
<div style="left:1235px;top:320px;width:4px;height:4px;background:#000;"></div>
<div style="left:1252px;top:320px;width:4px;height:4px;background:#000;"></div>
<div style="left:1260px;top:320px;width:4px;height:4px;background:#000;"></div>
<div style="left:1268px;top:320px;width:4px;height:4px;background:#000;"></div>
<div style="left:1281px;top:320px;width:4px;height:4px;background:#000;"></div>
<div style="left:1284px;top:320px;width:4px;height:4px;background:#000;"></div>
<div style="left:1372px;top:320px;width:4px;height:4px;background:#000;"></div>
<div style="left:1394px;top:320px;width:4px;height:4px;background:#000;"></div>
<div style="left:1419px;top:320px;width:4px;height:4px;background:#000;"></div>
<div style="left:1427px;top:320px;width:4px;height:4px;background:#000;"></div>
<div style="left:1430px;top:320px;width:4px;height:4px;background:#000;"></div>
<div style="left:1470px;top:320px;width:4px;height:4px;background:#000;"></div>
<div style="left:1543px;top:320px;width:4px;height:4px;background:#000;"></div>
<div style="left:1577px;top:320px;width:4px;height:4px;background:#000;"></div>
<div style="left:1248px;top:262px;width:162px;height:1px;background:#000;"></div>
<div style="left:1248px;top:271px;width:162px;height:1px;background:#000;"></div>
<div style="left:1335px;top:257px;width:25px;height:6px;background:radial-gradient(#303030,transparent 70%);"></div>
<div style="left:1335px;top:266px;width:25px;height:7px;background:radial-gradient(#303030,transparent 70%);"></div>
<div style="left:1030px;top:301px;width:98px;height:2px;background:#202020;"></div>
<div style="left:1032px;top:323px;width:101px;height:2px;background:#202020;"></div>
<div style="left:1137px;top:366px;width:167px;height:2px;background:#202020;"></div>
<div style="left:298px;top:364px;width:1288px;height:3px;background:#f0e898;"></div>
<div style="left:874px;top:364px;width:4px;height:4px;background:#000;"></div>
<div style="left:945px;top:364px;width:4px;height:4px;background:#000;"></div>
<div style="left:999px;top:364px;width:4px;height:4px;background:#000;"></div>
<div style="left:1016px;top:364px;width:4px;height:4px;background:#000;"></div>
<div style="left:1090px;top:364px;width:4px;height:4px;background:#000;"></div>
<div style="left:1124px;top:364px;width:4px;height:4px;background:#000;"></div>
<div style="left:1131px;top:364px;width:4px;height:4px;background:#000;"></div>
<div style="left:1138px;top:364px;width:4px;height:4px;background:#000;"></div>
<div style="left:1148px;top:364px;width:4px;height:4px;background:#000;"></div>
<div style="left:1181px;top:364px;width:4px;height:4px;background:#000;"></div>
<div style="left:1302px;top:364px;width:4px;height:4px;background:#000;"></div>
<div style="left:1385px;top:364px;width:4px;height:4px;background:#000;"></div>
<div style="left:1393px;top:364px;width:4px;height:4px;background:#000;"></div>
<div style="left:1137px;top:369px;width:167px;height:1px;background:#303030;"></div>
<div style="left:298px;top:386px;width:1288px;height:2px;background:#a8d878;"></div>
<div style="left:761px;top:385px;width:4px;height:4px;background:#000;"></div>
<div style="left:790px;top:384px;width:246px;height:2px;background:#000;"></div>
<div style="left:790px;top:389px;width:246px;height:2px;background:#000;"></div>
<div style="left:298px;top:596px;width:1053px;height:2px;background:#48b0e0;"></div>
<div style="left:1351px;top:604px;width:235px;height:2px;background:#48b0e0;"></div>
<div style="left:298px;top:620px;width:1053px;height:2px;background:#48b0e0;"></div>
<div style="left:1351px;top:621px;width:235px;height:2px;background:#48b0e0;"></div>
<div style="left:1263px;top:595px;width:4px;height:4px;background:#000;"></div>
<div style="left:1273px;top:595px;width:4px;height:4px;background:#000;"></div>
<div style="left:1263px;top:619px;width:4px;height:4px;background:#000;"></div>
<div style="left:1273px;top:619px;width:4px;height:4px;background:#000;"></div>
<div style="left:1349px;top:619px;width:4px;height:4px;background:#000;"></div>
<div style="left:1390px;top:619px;width:4px;height:4px;background:#000;"></div>
<svg style="left:0;top:0" width="1600" height="1000"><polygon points="1277.0,587.4 1278.5,587.1 1280.0,587.3 1281.5,587.2 1283.0,587.4 1284.5,586.8 1286.0,586.8 1287.5,586.8 1289.0,587.2 1290.5,586.7 1292.0,587.2 1293.5,587.2 1295.0,587.3 1296.5,587.2 1298.0,587.2 1299.5,587.1 1301.0,587.2 1302.5,586.8 1304.0,587.0 1305.5,586.7 1307.0,586.9 1308.5,586.9 1310.0,586.9 1311.5,587.2 1313.0,586.8 1314.5,587.1 1316.0,587.2 1317.5,586.7 1319.0,586.9 1320.5,587.0 1322.0,587.3 1323.5,587.3 1325.0,587.1 1326.5,586.8 1328.0,587.1 1329.5,587.3 1331.0,587.2 1332.5,587.2 1334.0,587.0 1335.5,586.9 1337.0,587.1 1338.5,587.1 1340.0,587.4 1341.5,586.7 1343.0,587.1 1344.5,586.8 1346.0,587.2 1347.5,587.1 1349.0,586.7 1350.5,586.8 1352.0,587.4 1353.5,586.8 1355.0,587.0 1356.5,587.1 1358.0,586.8 1359.5,586.7 1361.0,587.3 1362.5,587.0 1364.0,586.7 1365.5,587.0 1367.0,587.1 1368.5,587.4 1370.0,587.3 1371.5,587.0 1373.0,587.3 1374.5,587.0 1376.0,587.3 1377.5,587.0 1379.0,587.1 1380.5,587.0 1382.0,587.2 1383.5,586.7 1385.0,586.8 1386.5,587.3 1388.0,586.7 1389.5,587.2 1391.0,587.1 1391.0,590.1 1389.5,589.6 1388.0,590.1 1386.5,589.8 1385.0,589.9 1383.5,590.0 1382.0,589.9 1380.5,589.6 1379.0,589.7 1377.5,590.0 1376.0,589.6 1374.5,590.1 1373.0,589.8 1371.5,589.8 1370.0,590.2 1368.5,590.1 1367.0,590.0 1365.5,590.1 1364.0,590.1 1362.5,590.1 1361.0,589.7 1359.5,589.8 1358.0,590.2 1356.5,590.2 1355.0,589.6 1353.5,589.9 1352.0,590.1 1350.5,589.6 1349.0,590.2 1347.5,589.9 1346.0,589.8 1344.5,589.7 1343.0,590.0 1341.5,589.7 1340.0,589.8 1338.5,589.8 1337.0,590.0 1335.5,589.9 1334.0,590.2 1332.5,589.8 1331.0,589.6 1329.5,589.6 1328.0,589.7 1326.5,590.3 1325.0,589.7 1323.5,590.2 1322.0,589.7 1320.5,589.9 1319.0,589.8 1317.5,589.8 1316.0,590.1 1314.5,589.8 1313.0,589.7 1311.5,589.6 1310.0,590.0 1308.5,589.9 1307.0,589.6 1305.5,590.0 1304.0,590.2 1302.5,590.2 1301.0,590.3 1299.5,589.7 1298.0,589.8 1296.5,590.3 1295.0,590.2 1293.5,589.6 1292.0,589.9 1290.5,590.0 1289.0,589.9 1287.5,589.8 1286.0,590.1 1284.5,589.7 1283.0,590.1 1281.5,590.2 1280.0,589.8 1278.5,589.8 1277.0,589.9" fill="#404040" stroke="#101010" stroke-width="0.7"/></svg>
<svg style="left:0;top:0" width="1600" height="1000"><polygon points="1277.0,602.8 1278.5,602.6 1280.0,602.9 1281.5,602.8 1283.0,602.6 1284.5,602.5 1286.0,602.7 1287.5,602.4 1289.0,602.5 1290.5,602.9 1292.0,602.9 1293.5,602.7 1295.0,602.9 1296.5,602.6 1298.0,602.9 1299.5,602.9 1301.0,602.9 1302.5,603.0 1304.0,602.5 1305.5,602.6 1307.0,602.4 1308.5,602.9 1310.0,602.6 1311.5,602.6 1313.0,602.8 1314.5,602.9 1316.0,602.9 1317.5,602.4 1319.0,602.4 1320.5,602.8 1322.0,602.5 1323.5,603.0 1325.0,602.8 1326.5,602.9 1328.0,602.5 1329.5,602.8 1331.0,602.5 1332.5,603.0 1334.0,602.5 1335.5,602.6 1337.0,602.8 1338.5,602.4 1340.0,602.9 1341.5,602.8 1343.0,603.0 1344.5,602.5 1346.0,602.4 1347.5,602.9 1349.0,602.4 1350.5,602.8 1350.5,605.1 1349.0,605.6 1347.5,605.3 1346.0,605.0 1344.5,605.4 1343.0,605.4 1341.5,605.1 1340.0,605.4 1338.5,605.4 1337.0,605.1 1335.5,605.5 1334.0,605.1 1332.5,605.0 1331.0,605.0 1329.5,605.5 1328.0,605.0 1326.5,605.2 1325.0,605.5 1323.5,605.3 1322.0,605.2 1320.5,605.5 1319.0,605.1 1317.5,605.0 1316.0,605.2 1314.5,605.0 1313.0,605.2 1311.5,605.2 1310.0,605.0 1308.5,605.6 1307.0,605.2 1305.5,605.6 1304.0,605.5 1302.5,605.2 1301.0,605.0 1299.5,605.6 1298.0,605.2 1296.5,605.6 1295.0,605.2 1293.5,605.1 1292.0,605.6 1290.5,605.4 1289.0,605.1 1287.5,605.2 1286.0,605.1 1284.5,605.4 1283.0,605.1 1281.5,605.2 1280.0,605.0 1278.5,605.6 1277.0,605.1" fill="#404040" stroke="#101010" stroke-width="0.7"/></svg>
<div style="left:1351px;top:603px;width:41px;height:3px;background:#5a90b8;"></div>
<div style="left:1277px;top:614px;width:115px;height:2px;background:#202020;"></div>
<div style="left:1277px;top:618px;width:74px;height:2px;background:#202020;"></div>
<div style="left:298px;top:662px;width:1288px;height:2px;background:#6a58a8;"></div>
<div style="left:298px;top:670px;width:1288px;height:2px;background:#6a58a8;"></div>
<div style="left:598px;top:662px;width:4px;height:4px;background:#000;"></div>
<div style="left:652px;top:662px;width:4px;height:4px;background:#000;"></div>
<div style="left:668px;top:662px;width:4px;height:4px;background:#000;"></div>
<div style="left:744px;top:662px;width:4px;height:4px;background:#000;"></div>
<div style="left:781px;top:662px;width:4px;height:4px;background:#000;"></div>
<div style="left:1350px;top:662px;width:4px;height:4px;background:#000;"></div>
<div style="left:598px;top:670px;width:4px;height:4px;background:#000;"></div>
<div style="left:652px;top:670px;width:4px;height:4px;background:#000;"></div>
<div style="left:668px;top:670px;width:4px;height:4px;background:#000;"></div>
<div style="left:744px;top:670px;width:4px;height:4px;background:#000;"></div>
<div style="left:781px;top:670px;width:4px;height:4px;background:#000;"></div>
<div style="left:1350px;top:670px;width:4px;height:4px;background:#000;"></div>
<div style="left:787px;top:659px;width:357px;height:2px;background:#000;"></div>
<div style="left:787px;top:664px;width:357px;height:2px;background:#000;"></div>
<div style="left:787px;top:676px;width:357px;height:2px;background:#000;"></div>
<div style="left:1188px;top:659px;width:165px;height:2px;background:#000;"></div>
<div style="left:1188px;top:664px;width:165px;height:2px;background:#000;"></div>
<div style="left:1188px;top:676px;width:165px;height:2px;background:#000;"></div>
<div style="left:298px;top:696px;width:1288px;height:2px;background:#6a58a8;"></div>
<div style="left:298px;top:706px;width:1288px;height:2px;background:#6a58a8;"></div>
<svg style="left:0;top:0" width="1600" height="1000"><polygon points="1111.0,690.7 1112.5,690.3 1114.0,690.4 1115.5,690.4 1117.0,690.6 1118.5,690.8 1120.0,690.4 1121.5,690.8 1123.0,690.8 1124.5,691.0 1126.0,690.8 1127.5,690.4 1129.0,690.8 1130.5,690.9 1132.0,690.5 1133.5,690.8 1135.0,690.6 1136.5,690.5 1138.0,690.5 1139.5,690.4 1141.0,690.6 1142.5,690.5 1144.0,690.8 1145.5,690.9 1147.0,690.6 1148.5,690.7 1150.0,690.6 1151.5,690.4 1153.0,690.3 1154.5,690.7 1156.0,690.4 1157.5,691.0 1159.0,690.9 1160.5,690.3 1162.0,690.3 1163.5,690.4 1165.0,690.8 1166.5,690.3 1168.0,690.6 1169.5,690.8 1171.0,690.9 1172.5,690.8 1174.0,690.5 1175.5,691.0 1177.0,690.5 1178.5,690.8 1180.0,690.4 1181.5,690.9 1183.0,690.7 1184.5,690.5 1186.0,690.9 1187.5,690.7 1189.0,690.8 1190.5,690.8 1192.0,690.7 1193.5,690.4 1195.0,690.7 1196.5,690.5 1198.0,691.0 1199.5,690.7 1201.0,690.7 1202.5,690.7 1204.0,691.0 1205.5,690.5 1207.0,690.9 1208.5,690.7 1210.0,690.9 1211.5,690.6 1213.0,690.9 1214.5,690.4 1216.0,690.8 1217.5,690.3 1219.0,690.7 1220.5,690.4 1222.0,690.4 1223.5,690.4 1225.0,690.4 1226.5,690.7 1228.0,690.4 1229.5,690.8 1231.0,690.6 1232.5,690.9 1234.0,690.5 1235.5,691.0 1237.0,690.5 1238.5,690.4 1240.0,690.6 1241.5,690.6 1243.0,690.7 1244.5,690.7 1246.0,690.7 1247.5,691.0 1249.0,690.6 1250.5,690.5 1252.0,690.7 1253.5,690.7 1255.0,690.9 1256.5,690.9 1258.0,690.6 1259.5,690.5 1261.0,690.5 1262.5,690.6 1264.0,690.6 1265.5,690.3 1267.0,690.4 1268.5,690.5 1270.0,690.8 1271.5,690.6 1273.0,690.4 1274.5,690.4 1276.0,690.9 1277.5,690.5 1279.0,690.4 1280.5,690.4 1282.0,690.6 1283.5,690.8 1285.0,690.6 1286.5,691.0 1288.0,690.9 1289.5,690.5 1291.0,690.9 1292.5,690.9 1294.0,690.5 1295.5,690.4 1297.0,690.6 1298.5,690.9 1300.0,690.6 1301.5,690.4 1303.0,690.3 1304.5,690.7 1306.0,690.7 1307.5,690.5 1309.0,690.4 1310.5,690.5 1312.0,690.6 1313.5,690.8 1315.0,691.0 1316.5,690.6 1318.0,690.6 1319.5,690.9 1321.0,690.5 1322.5,691.0 1324.0,690.9 1325.5,690.8 1327.0,690.6 1328.5,690.6 1330.0,690.9 1331.5,690.8 1333.0,690.9 1334.5,690.4 1336.0,690.7 1337.5,691.0 1339.0,690.6 1340.5,690.5 1342.0,690.3 1343.5,690.8 1345.0,691.0 1346.5,690.7 1348.0,690.9 1349.5,691.0 1351.0,690.3 1352.5,690.8 1354.0,690.6 1355.5,690.4 1357.0,690.8 1358.5,690.9 1360.0,690.4 1361.5,691.0 1363.0,690.5 1364.5,690.5 1366.0,690.8 1367.5,690.8 1369.0,690.8 1370.5,690.5 1372.0,690.5 1373.5,690.6 1375.0,690.4 1376.5,690.8 1378.0,690.3 1379.5,690.4 1381.0,690.8 1382.5,690.5 1384.0,690.5 1385.5,690.4 1387.0,690.8 1388.5,690.6 1390.0,690.5 1391.5,690.7 1393.0,690.5 1394.5,690.7 1396.0,690.6 1397.5,690.8 1397.5,693.4 1396.0,693.2 1394.5,693.5 1393.0,693.6 1391.5,693.6 1390.0,693.7 1388.5,693.5 1387.0,693.6 1385.5,693.2 1384.0,693.2 1382.5,693.7 1381.0,693.2 1379.5,693.0 1378.0,693.2 1376.5,693.5 1375.0,693.4 1373.5,693.3 1372.0,693.2 1370.5,693.6 1369.0,693.5 1367.5,693.0 1366.0,693.1 1364.5,693.3 1363.0,693.3 1361.5,693.6 1360.0,693.5 1358.5,693.6 1357.0,693.2 1355.5,693.1 1354.0,693.5 1352.5,693.4 1351.0,693.1 1349.5,693.4 1348.0,693.5 1346.5,693.2 1345.0,693.4 1343.5,693.6 1342.0,693.5 1340.5,693.3 1339.0,693.3 1337.5,693.5 1336.0,693.2 1334.5,693.6 1333.0,693.5 1331.5,693.1 1330.0,693.7 1328.5,693.3 1327.0,693.2 1325.5,693.4 1324.0,693.3 1322.5,693.3 1321.0,693.0 1319.5,693.2 1318.0,693.6 1316.5,693.3 1315.0,693.1 1313.5,693.0 1312.0,693.5 1310.5,693.7 1309.0,693.2 1307.5,693.1 1306.0,693.1 1304.5,693.5 1303.0,693.4 1301.5,693.2 1300.0,693.3 1298.5,693.7 1297.0,693.6 1295.5,693.4 1294.0,693.3 1292.5,693.4 1291.0,693.6 1289.5,693.6 1288.0,693.7 1286.5,693.1 1285.0,693.2 1283.5,693.2 1282.0,693.6 1280.5,693.1 1279.0,693.2 1277.5,693.1 1276.0,693.3 1274.5,693.7 1273.0,693.1 1271.5,693.7 1270.0,693.7 1268.5,693.6 1267.0,693.7 1265.5,693.1 1264.0,693.3 1262.5,693.1 1261.0,693.5 1259.5,693.1 1258.0,693.0 1256.5,693.3 1255.0,693.3 1253.5,693.1 1252.0,693.1 1250.5,693.6 1249.0,693.2 1247.5,693.4 1246.0,693.3 1244.5,693.5 1243.0,693.4 1241.5,693.2 1240.0,693.4 1238.5,693.1 1237.0,693.0 1235.5,693.4 1234.0,693.6 1232.5,693.2 1231.0,693.3 1229.5,693.3 1228.0,693.1 1226.5,693.6 1225.0,693.2 1223.5,693.1 1222.0,693.4 1220.5,693.3 1219.0,693.1 1217.5,693.7 1216.0,693.1 1214.5,693.7 1213.0,693.4 1211.5,693.6 1210.0,693.2 1208.5,693.4 1207.0,693.4 1205.5,693.6 1204.0,693.4 1202.5,693.1 1201.0,693.6 1199.5,693.6 1198.0,693.6 1196.5,693.2 1195.0,693.2 1193.5,693.7 1192.0,693.3 1190.5,693.4 1189.0,693.7 1187.5,693.2 1186.0,693.5 1184.5,693.1 1183.0,693.4 1181.5,693.1 1180.0,693.4 1178.5,693.2 1177.0,693.1 1175.5,693.2 1174.0,693.2 1172.5,693.4 1171.0,693.2 1169.5,693.3 1168.0,693.4 1166.5,693.1 1165.0,693.5 1163.5,693.3 1162.0,693.3 1160.5,693.4 1159.0,693.1 1157.5,693.2 1156.0,693.6 1154.5,693.6 1153.0,693.1 1151.5,693.5 1150.0,693.2 1148.5,693.7 1147.0,693.2 1145.5,693.6 1144.0,693.2 1142.5,693.2 1141.0,693.3 1139.5,693.2 1138.0,693.1 1136.5,693.6 1135.0,693.5 1133.5,693.3 1132.0,693.3 1130.5,693.4 1129.0,693.1 1127.5,693.7 1126.0,693.7 1124.5,693.4 1123.0,693.1 1121.5,693.5 1120.0,693.1 1118.5,693.3 1117.0,693.2 1115.5,693.5 1114.0,693.5 1112.5,693.1 1111.0,693.4" fill="#505050" stroke="#101010" stroke-width="0.7"/></svg>
<svg style="left:0;top:0" width="1600" height="1000"><polygon points="1111.0,700.9 1112.5,700.9 1114.0,700.9 1115.5,700.7 1117.0,701.0 1118.5,700.5 1120.0,700.5 1121.5,700.9 1123.0,700.7 1124.5,700.4 1126.0,700.9 1127.5,700.4 1129.0,700.9 1130.5,700.9 1132.0,700.4 1133.5,700.5 1135.0,700.6 1136.5,700.9 1138.0,700.5 1139.5,700.8 1141.0,701.0 1142.5,700.8 1144.0,700.7 1145.5,700.3 1147.0,700.4 1148.5,701.0 1150.0,700.7 1151.5,700.7 1153.0,700.6 1154.5,700.4 1156.0,700.4 1157.5,701.0 1159.0,700.5 1160.5,701.0 1162.0,700.6 1163.5,700.9 1165.0,700.7 1166.5,700.8 1168.0,700.8 1169.5,700.5 1171.0,700.9 1172.5,700.9 1174.0,700.5 1175.5,700.6 1177.0,700.7 1178.5,700.4 1180.0,700.4 1181.5,700.8 1183.0,700.4 1184.5,700.7 1186.0,700.8 1187.5,700.6 1189.0,700.5 1190.5,700.7 1192.0,700.9 1193.5,700.5 1195.0,700.9 1196.5,700.5 1198.0,700.9 1199.5,700.4 1201.0,700.8 1202.5,700.5 1204.0,700.9 1205.5,700.8 1207.0,700.6 1208.5,700.8 1210.0,700.3 1211.5,700.9 1213.0,700.9 1214.5,700.3 1216.0,700.5 1217.5,700.8 1219.0,700.9 1220.5,700.7 1222.0,700.7 1223.5,700.5 1225.0,700.5 1226.5,700.9 1228.0,700.7 1229.5,700.4 1231.0,700.6 1232.5,700.7 1234.0,700.5 1235.5,700.5 1237.0,700.4 1238.5,700.5 1240.0,700.8 1241.5,700.9 1243.0,700.4 1244.5,700.6 1246.0,700.7 1247.5,700.6 1249.0,700.5 1250.5,700.9 1252.0,700.5 1253.5,700.6 1255.0,701.0 1256.5,700.9 1258.0,700.3 1259.5,700.9 1261.0,700.6 1262.5,700.6 1264.0,700.4 1265.5,700.7 1267.0,700.8 1268.5,700.7 1270.0,700.9 1271.5,700.7 1273.0,700.8 1274.5,701.0 1276.0,700.7 1277.5,700.7 1279.0,700.8 1280.5,700.3 1282.0,700.8 1283.5,700.7 1285.0,700.9 1286.5,700.4 1288.0,700.7 1289.5,700.8 1291.0,700.7 1292.5,700.4 1294.0,700.7 1295.5,700.6 1297.0,700.4 1298.5,700.4 1300.0,700.7 1301.5,700.7 1303.0,701.0 1304.5,700.8 1306.0,700.8 1307.5,700.7 1309.0,700.5 1310.5,700.3 1312.0,700.9 1313.5,700.4 1315.0,700.9 1316.5,700.5 1318.0,701.0 1319.5,700.5 1321.0,700.9 1322.5,700.8 1324.0,700.7 1325.5,700.4 1327.0,700.9 1328.5,700.6 1330.0,700.5 1331.5,700.4 1333.0,700.8 1334.5,700.6 1336.0,700.7 1337.5,700.6 1339.0,700.8 1340.5,700.6 1342.0,700.7 1343.5,700.6 1345.0,700.6 1346.5,701.0 1348.0,700.7 1349.5,700.5 1351.0,700.7 1352.5,700.3 1354.0,700.5 1355.5,701.0 1357.0,700.5 1358.5,700.8 1360.0,700.6 1361.5,700.4 1363.0,700.5 1364.5,700.7 1366.0,700.7 1367.5,700.6 1369.0,700.8 1370.5,700.7 1372.0,700.4 1373.5,700.4 1375.0,700.6 1376.5,700.6 1378.0,700.5 1379.5,700.8 1381.0,700.8 1382.5,700.5 1384.0,701.0 1385.5,700.4 1387.0,700.9 1388.5,701.0 1390.0,700.4 1391.5,700.5 1393.0,700.4 1394.5,700.6 1396.0,700.5 1397.5,700.5 1397.5,703.2 1396.0,703.4 1394.5,703.4 1393.0,703.4 1391.5,703.6 1390.0,703.4 1388.5,703.1 1387.0,703.2 1385.5,703.4 1384.0,703.5 1382.5,703.6 1381.0,703.4 1379.5,703.2 1378.0,703.6 1376.5,703.7 1375.0,703.2 1373.5,703.3 1372.0,703.2 1370.5,703.4 1369.0,703.3 1367.5,703.5 1366.0,703.3 1364.5,703.6 1363.0,703.4 1361.5,703.0 1360.0,703.3 1358.5,703.7 1357.0,703.7 1355.5,703.4 1354.0,703.5 1352.5,703.1 1351.0,703.3 1349.5,703.6 1348.0,703.4 1346.5,703.6 1345.0,703.6 1343.5,703.4 1342.0,703.1 1340.5,703.1 1339.0,703.1 1337.5,703.2 1336.0,703.6 1334.5,703.5 1333.0,703.5 1331.5,703.6 1330.0,703.6 1328.5,703.6 1327.0,703.6 1325.5,703.6 1324.0,703.1 1322.5,703.5 1321.0,703.1 1319.5,703.2 1318.0,703.7 1316.5,703.0 1315.0,703.6 1313.5,703.6 1312.0,703.6 1310.5,703.6 1309.0,703.3 1307.5,703.5 1306.0,703.3 1304.5,703.2 1303.0,703.5 1301.5,703.1 1300.0,703.2 1298.5,703.2 1297.0,703.3 1295.5,703.1 1294.0,703.2 1292.5,703.6 1291.0,703.5 1289.5,703.7 1288.0,703.4 1286.5,703.5 1285.0,703.5 1283.5,703.2 1282.0,703.6 1280.5,703.4 1279.0,703.5 1277.5,703.2 1276.0,703.5 1274.5,703.3 1273.0,703.3 1271.5,703.1 1270.0,703.7 1268.5,703.5 1267.0,703.5 1265.5,703.7 1264.0,703.4 1262.5,703.5 1261.0,703.5 1259.5,703.4 1258.0,703.4 1256.5,703.6 1255.0,703.4 1253.5,703.7 1252.0,703.3 1250.5,703.5 1249.0,703.7 1247.5,703.3 1246.0,703.3 1244.5,703.2 1243.0,703.5 1241.5,703.3 1240.0,703.4 1238.5,703.3 1237.0,703.5 1235.5,703.5 1234.0,703.6 1232.5,703.2 1231.0,703.5 1229.5,703.3 1228.0,703.5 1226.5,703.4 1225.0,703.3 1223.5,703.4 1222.0,703.6 1220.5,703.0 1219.0,703.2 1217.5,703.5 1216.0,703.3 1214.5,703.6 1213.0,703.3 1211.5,703.7 1210.0,703.5 1208.5,703.1 1207.0,703.1 1205.5,703.2 1204.0,703.1 1202.5,703.6 1201.0,703.2 1199.5,703.2 1198.0,703.3 1196.5,703.4 1195.0,703.3 1193.5,703.5 1192.0,703.6 1190.5,703.2 1189.0,703.5 1187.5,703.5 1186.0,703.3 1184.5,703.6 1183.0,703.4 1181.5,703.2 1180.0,703.0 1178.5,703.1 1177.0,703.3 1175.5,703.3 1174.0,703.6 1172.5,703.6 1171.0,703.5 1169.5,703.4 1168.0,703.2 1166.5,703.7 1165.0,703.6 1163.5,703.4 1162.0,703.6 1160.5,703.4 1159.0,703.7 1157.5,703.2 1156.0,703.1 1154.5,703.1 1153.0,703.2 1151.5,703.5 1150.0,703.5 1148.5,703.3 1147.0,703.4 1145.5,703.4 1144.0,703.2 1142.5,703.5 1141.0,703.2 1139.5,703.3 1138.0,703.2 1136.5,703.1 1135.0,703.2 1133.5,703.6 1132.0,703.6 1130.5,703.0 1129.0,703.2 1127.5,703.7 1126.0,703.6 1124.5,703.6 1123.0,703.6 1121.5,703.4 1120.0,703.5 1118.5,703.5 1117.0,703.0 1115.5,703.1 1114.0,703.7 1112.5,703.0 1111.0,703.6" fill="#505050" stroke="#101010" stroke-width="0.7"/></svg>
<div style="left:1098px;top:695px;width:4px;height:4px;background:#000;"></div>
<div style="left:1109px;top:695px;width:4px;height:4px;background:#000;"></div>
<div style="left:1395px;top:695px;width:4px;height:4px;background:#000;"></div>
<div style="left:1098px;top:705px;width:4px;height:4px;background:#000;"></div>
<div style="left:1109px;top:705px;width:4px;height:4px;background:#000;"></div>
<div style="left:1395px;top:705px;width:4px;height:4px;background:#000;"></div>
<div style="left:298px;top:736px;width:1288px;height:3px;background:#f0e898;"></div>
<div style="left:416px;top:738px;width:27px;height:2px;background:#000;"></div>
<div style="left:512px;top:738px;width:62px;height:2px;background:#000;"></div>
<div style="left:741px;top:738px;width:50px;height:2px;background:#000;"></div>
<div style="left:298px;top:792px;width:1288px;height:2px;background:#e86a6a;"></div>
<div style="left:298px;top:814px;width:1288px;height:2px;background:#e87a5c;"></div>
<div style="left:298px;top:835px;width:1288px;height:2px;background:#6058a0;"></div>
<div style="left:309px;top:792px;width:4px;height:4px;background:#000;"></div>
<div style="left:325px;top:792px;width:4px;height:4px;background:#000;"></div>
<div style="left:398px;top:792px;width:4px;height:4px;background:#000;"></div>
<div style="left:436px;top:792px;width:4px;height:4px;background:#000;"></div>
<div style="left:843px;top:792px;width:4px;height:4px;background:#000;"></div>
<div style="left:847px;top:792px;width:4px;height:4px;background:#000;"></div>
<div style="left:852px;top:792px;width:4px;height:4px;background:#000;"></div>
<div style="left:870px;top:792px;width:4px;height:4px;background:#000;"></div>
<div style="left:874px;top:792px;width:4px;height:4px;background:#000;"></div>
<div style="left:878px;top:792px;width:4px;height:4px;background:#000;"></div>
<div style="left:884px;top:792px;width:4px;height:4px;background:#000;"></div>
<div style="left:888px;top:792px;width:4px;height:4px;background:#000;"></div>
<div style="left:892px;top:792px;width:4px;height:4px;background:#000;"></div>
<div style="left:895px;top:792px;width:4px;height:4px;background:#000;"></div>
<div style="left:901px;top:792px;width:4px;height:4px;background:#000;"></div>
<div style="left:906px;top:792px;width:4px;height:4px;background:#000;"></div>
<div style="left:930px;top:792px;width:4px;height:4px;background:#000;"></div>
<div style="left:996px;top:792px;width:4px;height:4px;background:#000;"></div>
<div style="left:1000px;top:792px;width:4px;height:4px;background:#000;"></div>
<div style="left:1009px;top:792px;width:4px;height:4px;background:#000;"></div>
<div style="left:1016px;top:792px;width:4px;height:4px;background:#000;"></div>
<div style="left:1026px;top:792px;width:4px;height:4px;background:#000;"></div>
<div style="left:1033px;top:792px;width:4px;height:4px;background:#000;"></div>
<div style="left:1047px;top:792px;width:4px;height:4px;background:#000;"></div>
<div style="left:1051px;top:792px;width:4px;height:4px;background:#000;"></div>
<div style="left:1057px;top:792px;width:4px;height:4px;background:#000;"></div>
<div style="left:1079px;top:792px;width:4px;height:4px;background:#000;"></div>
<div style="left:1083px;top:792px;width:4px;height:4px;background:#000;"></div>
<div style="left:1098px;top:792px;width:4px;height:4px;background:#000;"></div>
<div style="left:1135px;top:792px;width:4px;height:4px;background:#000;"></div>
<div style="left:1149px;top:792px;width:4px;height:4px;background:#000;"></div>
<div style="left:1171px;top:792px;width:4px;height:4px;background:#000;"></div>
<div style="left:1175px;top:792px;width:4px;height:4px;background:#000;"></div>
<div style="left:1179px;top:792px;width:4px;height:4px;background:#000;"></div>
<div style="left:1183px;top:792px;width:4px;height:4px;background:#000;"></div>
<div style="left:1198px;top:792px;width:4px;height:4px;background:#000;"></div>
<div style="left:1203px;top:792px;width:4px;height:4px;background:#000;"></div>
<div style="left:1209px;top:792px;width:4px;height:4px;background:#000;"></div>
<div style="left:1220px;top:792px;width:4px;height:4px;background:#000;"></div>
<div style="left:1247px;top:792px;width:4px;height:4px;background:#000;"></div>
<div style="left:1329px;top:792px;width:4px;height:4px;background:#000;"></div>
<div style="left:1334px;top:792px;width:4px;height:4px;background:#000;"></div>
<div style="left:1339px;top:792px;width:4px;height:4px;background:#000;"></div>
<div style="left:629px;top:814px;width:4px;height:4px;background:#000;"></div>
<div style="left:684px;top:814px;width:4px;height:4px;background:#000;"></div>
<div style="left:700px;top:814px;width:4px;height:4px;background:#000;"></div>
<div style="left:775px;top:814px;width:4px;height:4px;background:#000;"></div>
<div style="left:811px;top:814px;width:4px;height:4px;background:#000;"></div>
<div style="left:833px;top:814px;width:4px;height:4px;background:#000;"></div>
<div style="left:841px;top:814px;width:4px;height:4px;background:#000;"></div>
<div style="left:845px;top:814px;width:4px;height:4px;background:#000;"></div>
<div style="left:849px;top:814px;width:4px;height:4px;background:#000;"></div>
<div style="left:853px;top:814px;width:4px;height:4px;background:#000;"></div>
<div style="left:857px;top:814px;width:4px;height:4px;background:#000;"></div>
<div style="left:861px;top:814px;width:4px;height:4px;background:#000;"></div>
<div style="left:865px;top:814px;width:4px;height:4px;background:#000;"></div>
<div style="left:873px;top:814px;width:4px;height:4px;background:#000;"></div>
<div style="left:877px;top:814px;width:4px;height:4px;background:#000;"></div>
<div style="left:881px;top:814px;width:4px;height:4px;background:#000;"></div>
<div style="left:885px;top:814px;width:4px;height:4px;background:#000;"></div>
<div style="left:889px;top:814px;width:4px;height:4px;background:#000;"></div>
<div style="left:893px;top:814px;width:4px;height:4px;background:#000;"></div>
<div style="left:973px;top:814px;width:4px;height:4px;background:#000;"></div>
<div style="left:977px;top:814px;width:4px;height:4px;background:#000;"></div>
<div style="left:987px;top:814px;width:4px;height:4px;background:#000;"></div>
<div style="left:997px;top:814px;width:4px;height:4px;background:#000;"></div>
<div style="left:1009px;top:814px;width:4px;height:4px;background:#000;"></div>
<div style="left:1013px;top:814px;width:4px;height:4px;background:#000;"></div>
<div style="left:1018px;top:814px;width:4px;height:4px;background:#000;"></div>
<div style="left:1022px;top:814px;width:4px;height:4px;background:#000;"></div>
<div style="left:1059px;top:814px;width:4px;height:4px;background:#000;"></div>
<div style="left:1063px;top:814px;width:4px;height:4px;background:#000;"></div>
<div style="left:1067px;top:814px;width:4px;height:4px;background:#000;"></div>
<div style="left:1075px;top:814px;width:4px;height:4px;background:#000;"></div>
<div style="left:1085px;top:814px;width:4px;height:4px;background:#000;"></div>
<div style="left:338px;top:835px;width:4px;height:4px;background:#000;"></div>
<div style="left:355px;top:835px;width:4px;height:4px;background:#000;"></div>
<div style="left:429px;top:835px;width:4px;height:4px;background:#000;"></div>
<div style="left:465px;top:835px;width:4px;height:4px;background:#000;"></div>
<div style="left:479px;top:835px;width:4px;height:4px;background:#000;"></div>
<div style="left:485px;top:835px;width:4px;height:4px;background:#000;"></div>
<div style="left:835px;top:835px;width:4px;height:4px;background:#000;"></div>
<div style="left:845px;top:835px;width:4px;height:4px;background:#000;"></div>
<div style="left:854px;top:835px;width:4px;height:4px;background:#000;"></div>
<div style="left:862px;top:835px;width:4px;height:4px;background:#000;"></div>
<div style="left:873px;top:835px;width:4px;height:4px;background:#000;"></div>
<div style="left:877px;top:835px;width:4px;height:4px;background:#000;"></div>
<div style="left:881px;top:835px;width:4px;height:4px;background:#000;"></div>
<div style="left:885px;top:835px;width:4px;height:4px;background:#000;"></div>
<div style="left:993px;top:835px;width:4px;height:4px;background:#000;"></div>
<div style="left:998px;top:835px;width:4px;height:4px;background:#000;"></div>
<div style="left:1010px;top:835px;width:4px;height:4px;background:#000;"></div>
<div style="left:1022px;top:835px;width:4px;height:4px;background:#000;"></div>
<div style="left:1027px;top:835px;width:4px;height:4px;background:#000;"></div>
<div style="left:1059px;top:835px;width:4px;height:4px;background:#000;"></div>
<div style="left:1064px;top:835px;width:4px;height:4px;background:#000;"></div>
<div style="left:1069px;top:835px;width:4px;height:4px;background:#000;"></div>
<div style="left:1076px;top:835px;width:4px;height:4px;background:#000;"></div>
<div style="left:1082px;top:835px;width:4px;height:4px;background:#000;"></div>
<div style="left:1086px;top:835px;width:4px;height:4px;background:#000;"></div>
<div style="left:995px;top:838px;width:30px;height:2px;background:#202020;"></div>
<div style="left:1003px;top:840px;width:20px;height:1px;background:#202020;"></div>
<div style="left:435px;top:119px;width:2px;height:95px;background:#8c9090;"></div>
<div style="left:435px;top:214px;width:2px;height:748px;background:#202424;"></div>
<div style="left:437px;top:214px;width:1px;height:748px;background:#f8fcfc;"></div>
<div style="left:288px;top:137px;width:10px;height:825px;background:#000;"></div>
<div style="left:288px;top:119px;width:10px;height:18px;background:#2e4054;"></div>
<div style="left:1586px;top:137px;width:12px;height:825px;background:#6e88a6;"></div>
<div style="left:1586px;top:137px;width:12px;height:51px;background:#c4d0dc;border:1px solid #506680;"></div>
<svg style="left:1587px;top:170px" width="10" height="14"><path d="M9 1L1 7l8 6z" fill="#dde4ea" stroke="#506070"/></svg>
<div style="left:1586px;top:188px;width:12px;height:13px;background:#d4dce4;border:1px solid #506680;"></div>
<div class="t" style="left:1588px;top:189px;font-size:10px;color:#111;font-weight:bold;">^</div>
<div style="left:1586px;top:839px;width:12px;height:31px;background:#c0ccd8;"></div>
<div style="left:1586px;top:870px;width:12px;height:12px;background:#d4dce4;border:1px solid #506680;"></div>
<div class="t" style="left:1588px;top:871px;font-size:9px;color:#111;font-weight:bold;">v</div>
<div style="left:1586px;top:886px;width:12px;height:9px;background:#d4dce4;border:1px solid #506680;"></div>
<div style="left:1586px;top:896px;width:12px;height:66px;background:#c4d0dc;border:1px solid #506680;"></div>
<svg style="left:1587px;top:905px" width="10" height="14"><path d="M9 1L1 7l8 6z" fill="#dde4ea" stroke="#506070"/></svg>
<div style="left:297px;top:962px;width:1301px;height:14px;background:#b4c4d4;border-top:1px solid #303c48;"></div>
<div style="left:300px;top:963px;width:13px;height:12px;background:#c8d4e0;border:1px solid #506680;"></div>
<div class="t" style="left:303px;top:964px;font-size:10px;color:#111;font-weight:bold;">&lt;</div>
<div style="left:393px;top:963px;width:685px;height:12px;background:#6e8aa8;"></div>
<div style="left:1491px;top:963px;width:13px;height:12px;background:#c8d4e0;border:1px solid #506680;"></div>
<div class="t" style="left:1494px;top:964px;font-size:10px;color:#111;font-weight:bold;">&gt;</div>
<div style="left:1507px;top:963px;width:11px;height:12px;background:#c8d4e0;border:1px solid #506680;"></div>
<svg style="left:1509px;top:967px" width="7" height="4"><path d="M0 0h7l-3.5 3.5z" fill="#202830"/></svg>
<div style="left:1518px;top:963px;width:66px;height:12px;background:#c8d4e0;border:1px solid #506680;"></div>
<div style="left:1521px;top:969px;width:4px;height:1px;background:#506070;"></div>
<div style="left:1529px;top:968px;width:48px;height:2px;background:#8898a8;"></div>
<div style="left:1576px;top:969px;width:5px;height:1px;background:#506070;"></div>
<div style="left:1578px;top:967px;width:1px;height:5px;background:#506070;"></div>
<svg style="left:1531px;top:964px" width="14" height="10"><path d="M7 1l6 8H1z" fill="#98aab8" stroke="#405060"/></svg>
<div style="left:1586px;top:962px;width:12px;height:14px;background:#2a3e58;"></div>
<div style="left:0px;top:976px;width:1600px;height:24px;background:#d4d0c8;border-top:1px solid #fff;"></div>
<div style="left:2px;top:979px;width:46px;height:19px;background:#d4d0c8;border:1px solid;border-color:#fff #404040 #404040 #fff;"></div>
<svg style="left:5px;top:982px" width="14" height="13"><path d="M1 2l5-1v5H1z" fill="#e84020"/><path d="M7 1l6-1v6H7z" fill="#40a030"/><path d="M1 7h5v5l-5-1z" fill="#2060d0"/><path d="M7 7h6v6l-6-1z" fill="#f0c010"/></svg>
<div class="t" style="left:19px;top:984px;font-size:10px;color:#000;font-weight:bold;">Start</div>
<div style="left:51px;top:979px;width:130px;height:19px;background:#e8e6e0;border:1px solid;border-color:#404040 #fff #fff #404040;"></div>
<svg style="left:54px;top:982px" width="12" height="13"><path d="M9 1.5L3.5 6.5 9 11.5" stroke="#b01020" stroke-width="3" fill="none"/><circle cx="8.5" cy="6.5" r="1.6" fill="#b01020"/></svg>
<div class="t" style="left:69px;top:984px;font-size:9.6px;color:#000;font-weight:bold;">Cubase Studio 4 - [Cu...</div>
<div style="left:185px;top:979px;width:133px;height:19px;background:#d4d0c8;border:1px solid;border-color:#fff #404040 #404040 #fff;"></div>
<svg style="left:188px;top:981px" width="14" height="15"><circle cx="7" cy="8" r="6" fill="#4070b0" stroke="#203050"/><circle cx="7" cy="8" r="3" fill="#c0d8f0"/></svg>
<div class="t" style="left:204px;top:984px;font-size:9px;color:#000;">Adobe Photoshop</div>
<div style="left:1472px;top:979px;width:126px;height:19px;background:#d4d0c8;border:1px solid;border-color:#808080 #fff #fff #808080;"></div>
<svg style="left:1475px;top:981px" width="90" height="15"><rect x="1" y="3" width="9" height="8" fill="#4060a0"/><rect x="4" y="1" width="9" height="8" fill="#6080c0" stroke="#203060" stroke-width=".6"/><path d="M17 10l4-6 4 6z" fill="#50a050"/><rect x="19" y="9" width="8" height="4" fill="#808080"/><path d="M31 6l5-4 5 4-5 6z" fill="#60a0d0"/><circle cx="40" cy="11" r="3" fill="#40b040"/><path d="M46 3h12l-6 10z" fill="#1030a0"/><path d="M48 5h8" stroke="#4af" /><circle cx="66" cy="8" r="6" fill="#e03020"/><path d="M63 8h6" stroke="#fff" stroke-width="1.5"/><circle cx="80" cy="8" r="6.5" fill="#d02020"/><path d="M77 4l5 4-5 4" stroke="#fff" stroke-width="2" fill="none"/></svg>
<div class="t" style="left:1568px;top:984px;font-size:9.5px;color:#000;">19:26</div>
</body></html>
